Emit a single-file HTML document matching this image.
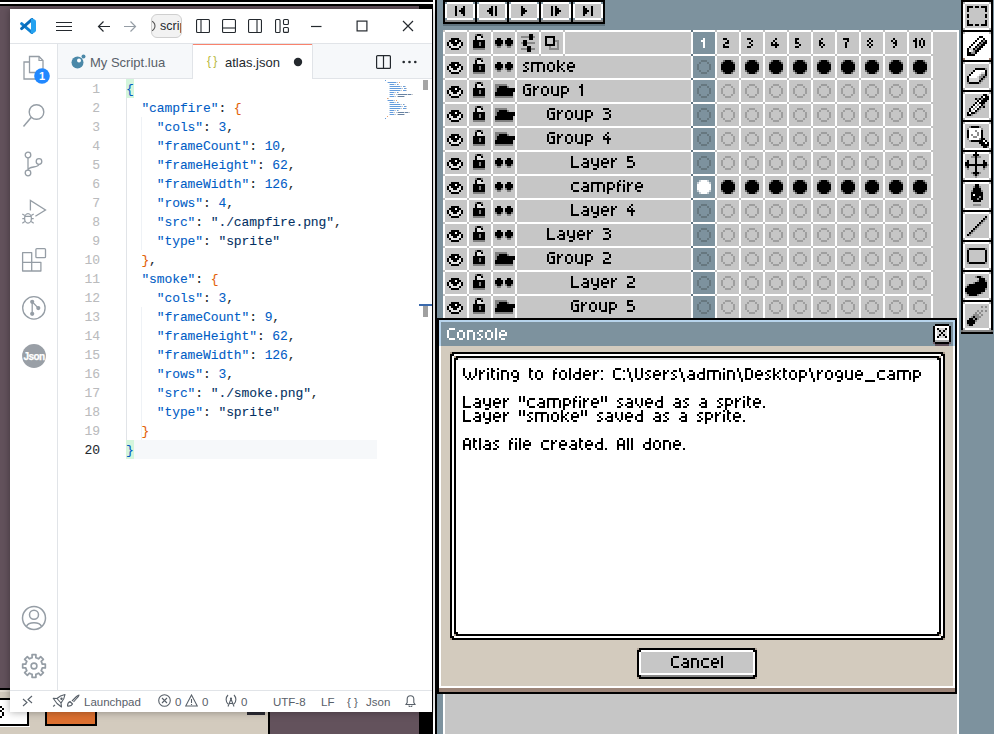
<!DOCTYPE html>
<html><head><meta charset="utf-8"><style>
html,body{margin:0;padding:0;}
body{width:994px;height:734px;overflow:hidden;position:relative;background:#63525c;font-family:'Liberation Sans',sans-serif;}
body>div{position:absolute;}
</style></head><body>
<div style="left:0px;top:0px;width:994px;height:734px;background:#63525c;"></div><div style="left:0px;top:0px;width:437px;height:2px;background:#000;"></div><div style="left:0px;top:2px;width:433px;height:2px;background:#fff;"></div><div style="left:0px;top:4px;width:433px;height:2px;background:#000;"></div><div style="left:419px;top:4px;width:14px;height:5px;background:#000;"></div><div style="left:0px;top:688px;width:270px;height:2px;background:#000;"></div><div style="left:0px;top:690px;width:270px;height:44px;background:#d3cbbe;"></div><div style="left:0px;top:690px;width:10px;height:2px;background:#e2dbd0;"></div><div style="left:268px;top:712px;width:2px;height:22px;background:#000;"></div><div style="left:419px;top:712px;width:14px;height:22px;background:#000;"></div><div style="left:-4px;top:698px;width:33px;height:28px;background:#fff;border:2px solid #000;box-sizing:border-box"></div><div style="left:0px;top:726px;width:30px;height:1px;background:#fff;"></div><svg style="position:absolute;left:0px;top:706px;shape-rendering:crispEdges" width="4" height="12" viewBox="0 0 4 12"><rect x="0" y="0" width="2" height="2" fill="#000"/><rect x="2" y="2" width="2" height="2" fill="#000"/><rect x="0" y="4" width="2" height="2" fill="#000"/><rect x="2" y="6" width="2" height="2" fill="#000"/><rect x="2" y="8" width="2" height="2" fill="#000"/><rect x="0" y="10" width="2" height="2" fill="#000"/></svg><div style="left:45px;top:700px;width:52px;height:26px;background:#dc7030;border:2px solid #000;box-sizing:border-box;border-top:none"></div><div style="left:247px;top:712px;width:18px;height:3px;background:#2a2a33;"></div><div style="left:433px;top:0px;width:2px;height:734px;background:#fff;"></div><div style="left:435px;top:0px;width:2px;height:734px;background:#000;"></div><div style="left:437px;top:0px;width:557px;height:734px;background:#7d929e;"></div><div style="left:443px;top:0px;width:34px;height:24px;background:#000;"></div><div style="left:445px;top:2px;width:30px;height:18px;background:#fff;"></div><div style="left:447px;top:4px;width:26px;height:14px;background:#c6c6c6;"></div><div style="left:445px;top:20px;width:30px;height:2px;background:#888;"></div><svg style="position:absolute;left:447px;top:4px;shape-rendering:crispEdges" width="26" height="14" viewBox="0 0 26 14"><rect x="8" y="2" width="2" height="2" fill="#000"/><rect x="16" y="2" width="2" height="2" fill="#000"/><rect x="8" y="4" width="2" height="2" fill="#000"/><rect x="14" y="4" width="4" height="2" fill="#000"/><rect x="8" y="6" width="2" height="2" fill="#000"/><rect x="12" y="6" width="6" height="2" fill="#000"/><rect x="8" y="8" width="2" height="2" fill="#000"/><rect x="14" y="8" width="4" height="2" fill="#000"/><rect x="8" y="10" width="2" height="2" fill="#000"/><rect x="16" y="10" width="2" height="2" fill="#000"/></svg><div style="left:445px;top:2px;width:2px;height:2px;background:#7d929e;"></div><div style="left:473px;top:2px;width:2px;height:2px;background:#7d929e;"></div><div style="left:445px;top:18px;width:2px;height:2px;background:#7d929e;"></div><div style="left:473px;top:18px;width:2px;height:2px;background:#7d929e;"></div><div style="left:475px;top:0px;width:34px;height:24px;background:#000;"></div><div style="left:477px;top:2px;width:30px;height:18px;background:#fff;"></div><div style="left:479px;top:4px;width:26px;height:14px;background:#c6c6c6;"></div><div style="left:477px;top:20px;width:30px;height:2px;background:#888;"></div><svg style="position:absolute;left:479px;top:4px;shape-rendering:crispEdges" width="26" height="14" viewBox="0 0 26 14"><rect x="12" y="2" width="2" height="2" fill="#000"/><rect x="16" y="2" width="2" height="2" fill="#000"/><rect x="10" y="4" width="4" height="2" fill="#000"/><rect x="16" y="4" width="2" height="2" fill="#000"/><rect x="8" y="6" width="6" height="2" fill="#000"/><rect x="16" y="6" width="2" height="2" fill="#000"/><rect x="10" y="8" width="4" height="2" fill="#000"/><rect x="16" y="8" width="2" height="2" fill="#000"/><rect x="12" y="10" width="2" height="2" fill="#000"/><rect x="16" y="10" width="2" height="2" fill="#000"/></svg><div style="left:477px;top:2px;width:2px;height:2px;background:#7d929e;"></div><div style="left:505px;top:2px;width:2px;height:2px;background:#7d929e;"></div><div style="left:477px;top:18px;width:2px;height:2px;background:#7d929e;"></div><div style="left:505px;top:18px;width:2px;height:2px;background:#7d929e;"></div><div style="left:507px;top:0px;width:34px;height:24px;background:#000;"></div><div style="left:509px;top:2px;width:30px;height:18px;background:#fff;"></div><div style="left:511px;top:4px;width:26px;height:14px;background:#c6c6c6;"></div><div style="left:509px;top:20px;width:30px;height:2px;background:#888;"></div><svg style="position:absolute;left:511px;top:4px;shape-rendering:crispEdges" width="26" height="14" viewBox="0 0 26 14"><rect x="10" y="2" width="2" height="2" fill="#000"/><rect x="10" y="4" width="4" height="2" fill="#000"/><rect x="10" y="6" width="6" height="2" fill="#000"/><rect x="10" y="8" width="4" height="2" fill="#000"/><rect x="10" y="10" width="2" height="2" fill="#000"/></svg><div style="left:509px;top:2px;width:2px;height:2px;background:#7d929e;"></div><div style="left:537px;top:2px;width:2px;height:2px;background:#7d929e;"></div><div style="left:509px;top:18px;width:2px;height:2px;background:#7d929e;"></div><div style="left:537px;top:18px;width:2px;height:2px;background:#7d929e;"></div><div style="left:539px;top:0px;width:34px;height:24px;background:#000;"></div><div style="left:541px;top:2px;width:30px;height:18px;background:#fff;"></div><div style="left:543px;top:4px;width:26px;height:14px;background:#c6c6c6;"></div><div style="left:541px;top:20px;width:30px;height:2px;background:#888;"></div><svg style="position:absolute;left:543px;top:4px;shape-rendering:crispEdges" width="26" height="14" viewBox="0 0 26 14"><rect x="8" y="2" width="2" height="2" fill="#000"/><rect x="12" y="2" width="2" height="2" fill="#000"/><rect x="8" y="4" width="2" height="2" fill="#000"/><rect x="12" y="4" width="4" height="2" fill="#000"/><rect x="8" y="6" width="2" height="2" fill="#000"/><rect x="12" y="6" width="6" height="2" fill="#000"/><rect x="8" y="8" width="2" height="2" fill="#000"/><rect x="12" y="8" width="4" height="2" fill="#000"/><rect x="8" y="10" width="2" height="2" fill="#000"/><rect x="12" y="10" width="2" height="2" fill="#000"/></svg><div style="left:541px;top:2px;width:2px;height:2px;background:#7d929e;"></div><div style="left:569px;top:2px;width:2px;height:2px;background:#7d929e;"></div><div style="left:541px;top:18px;width:2px;height:2px;background:#7d929e;"></div><div style="left:569px;top:18px;width:2px;height:2px;background:#7d929e;"></div><div style="left:571px;top:0px;width:34px;height:24px;background:#000;"></div><div style="left:573px;top:2px;width:30px;height:18px;background:#fff;"></div><div style="left:575px;top:4px;width:26px;height:14px;background:#c6c6c6;"></div><div style="left:573px;top:20px;width:30px;height:2px;background:#888;"></div><svg style="position:absolute;left:575px;top:4px;shape-rendering:crispEdges" width="26" height="14" viewBox="0 0 26 14"><rect x="8" y="2" width="2" height="2" fill="#000"/><rect x="16" y="2" width="2" height="2" fill="#000"/><rect x="8" y="4" width="4" height="2" fill="#000"/><rect x="16" y="4" width="2" height="2" fill="#000"/><rect x="8" y="6" width="6" height="2" fill="#000"/><rect x="16" y="6" width="2" height="2" fill="#000"/><rect x="8" y="8" width="4" height="2" fill="#000"/><rect x="16" y="8" width="2" height="2" fill="#000"/><rect x="8" y="10" width="2" height="2" fill="#000"/><rect x="16" y="10" width="2" height="2" fill="#000"/></svg><div style="left:573px;top:2px;width:2px;height:2px;background:#7d929e;"></div><div style="left:601px;top:2px;width:2px;height:2px;background:#7d929e;"></div><div style="left:573px;top:18px;width:2px;height:2px;background:#7d929e;"></div><div style="left:601px;top:18px;width:2px;height:2px;background:#7d929e;"></div><div style="left:443px;top:24px;width:162px;height:2px;background:#5f727d;"></div><div style="left:443px;top:30px;width:516px;height:288px;background:#fff;"></div><div style="left:445px;top:32px;width:22px;height:22px;background:#c6c6c6;"></div><div style="left:469px;top:32px;width:22px;height:22px;background:#c6c6c6;"></div><div style="left:493px;top:32px;width:22px;height:22px;background:#c6c6c6;"></div><div style="left:517px;top:32px;width:22px;height:22px;background:#c6c6c6;"></div><div style="left:541px;top:32px;width:22px;height:22px;background:#c6c6c6;"></div><div style="left:565px;top:32px;width:126px;height:22px;background:#c6c6c6;"></div><svg style="position:absolute;left:445px;top:32px;shape-rendering:crispEdges" width="18" height="18" viewBox="0 0 18 18"><rect x="6" y="6" width="8" height="2" fill="#000"/><rect x="4" y="8" width="6" height="2" fill="#000"/><rect x="10" y="8" width="2" height="2" fill="#fff"/><rect x="12" y="8" width="4" height="2" fill="#000"/><rect x="2" y="10" width="2" height="2" fill="#000"/><rect x="4" y="10" width="2" height="2" fill="#e4e4e4"/><rect x="6" y="10" width="8" height="2" fill="#000"/><rect x="14" y="10" width="2" height="2" fill="#e4e4e4"/><rect x="16" y="10" width="2" height="2" fill="#000"/><rect x="2" y="12" width="2" height="2" fill="#000"/><rect x="4" y="12" width="4" height="2" fill="#e4e4e4"/><rect x="8" y="12" width="4" height="2" fill="#000"/><rect x="12" y="12" width="4" height="2" fill="#e4e4e4"/><rect x="16" y="12" width="2" height="2" fill="#000"/><rect x="4" y="14" width="2" height="2" fill="#000"/><rect x="6" y="14" width="8" height="2" fill="#e4e4e4"/><rect x="14" y="14" width="2" height="2" fill="#000"/><rect x="6" y="16" width="8" height="2" fill="#000"/></svg><svg style="position:absolute;left:469px;top:32px;shape-rendering:crispEdges" width="16" height="18" viewBox="0 0 16 18"><rect x="6" y="2" width="2" height="2" fill="#808080"/><rect x="8" y="2" width="4" height="2" fill="#000"/><rect x="12" y="2" width="2" height="2" fill="#808080"/><rect x="6" y="4" width="2" height="2" fill="#000"/><rect x="8" y="4" width="4" height="2" fill="#e4e4e4"/><rect x="12" y="4" width="2" height="2" fill="#000"/><rect x="6" y="6" width="2" height="2" fill="#000"/><rect x="8" y="6" width="6" height="2" fill="#e4e4e4"/><rect x="4" y="8" width="12" height="2" fill="#000"/><rect x="4" y="10" width="6" height="2" fill="#000"/><rect x="10" y="10" width="2" height="2" fill="#888888"/><rect x="12" y="10" width="4" height="2" fill="#000"/><rect x="4" y="12" width="6" height="2" fill="#000"/><rect x="10" y="12" width="2" height="2" fill="#888888"/><rect x="12" y="12" width="4" height="2" fill="#000"/><rect x="4" y="14" width="12" height="2" fill="#000"/><rect x="4" y="16" width="12" height="2" fill="#808080"/></svg><svg style="position:absolute;left:493px;top:32px;shape-rendering:crispEdges" width="20" height="16" viewBox="0 0 20 16"><rect x="4" y="6" width="4" height="2" fill="#000"/><rect x="14" y="6" width="4" height="2" fill="#000"/><rect x="2" y="8" width="8" height="2" fill="#000"/><rect x="12" y="8" width="8" height="2" fill="#000"/><rect x="2" y="10" width="8" height="2" fill="#000"/><rect x="12" y="10" width="8" height="2" fill="#000"/><rect x="2" y="12" width="2" height="2" fill="#808080"/><rect x="4" y="12" width="4" height="2" fill="#000"/><rect x="8" y="12" width="2" height="2" fill="#808080"/><rect x="12" y="12" width="2" height="2" fill="#808080"/><rect x="14" y="12" width="4" height="2" fill="#000"/><rect x="18" y="12" width="2" height="2" fill="#808080"/><rect x="4" y="14" width="4" height="2" fill="#808080"/><rect x="14" y="14" width="4" height="2" fill="#808080"/></svg><svg style="position:absolute;left:517px;top:32px;shape-rendering:crispEdges" width="18" height="20" viewBox="0 0 18 20"><rect x="12" y="2" width="4" height="2" fill="#000"/><rect x="4" y="4" width="8" height="2" fill="#888888"/><rect x="12" y="4" width="4" height="2" fill="#000"/><rect x="16" y="4" width="2" height="2" fill="#888888"/><rect x="12" y="6" width="4" height="2" fill="#000"/><rect x="6" y="8" width="4" height="2" fill="#000"/><rect x="4" y="10" width="2" height="2" fill="#888888"/><rect x="6" y="10" width="4" height="2" fill="#000"/><rect x="10" y="10" width="8" height="2" fill="#888888"/><rect x="6" y="12" width="4" height="2" fill="#000"/><rect x="10" y="14" width="4" height="2" fill="#000"/><rect x="4" y="16" width="6" height="2" fill="#888888"/><rect x="10" y="16" width="4" height="2" fill="#000"/><rect x="14" y="16" width="4" height="2" fill="#888888"/><rect x="10" y="18" width="4" height="2" fill="#000"/></svg><svg style="position:absolute;left:541px;top:32px;shape-rendering:crispEdges" width="18" height="18" viewBox="0 0 18 18"><rect x="4" y="4" width="10" height="2" fill="#000"/><rect x="4" y="6" width="2" height="2" fill="#000"/><rect x="12" y="6" width="2" height="2" fill="#000"/><rect x="4" y="8" width="2" height="2" fill="#000"/><rect x="12" y="8" width="2" height="2" fill="#000"/><rect x="14" y="8" width="4" height="2" fill="#888888"/><rect x="4" y="10" width="2" height="2" fill="#000"/><rect x="12" y="10" width="2" height="2" fill="#000"/><rect x="16" y="10" width="2" height="2" fill="#888888"/><rect x="4" y="12" width="10" height="2" fill="#000"/><rect x="16" y="12" width="2" height="2" fill="#888888"/><rect x="8" y="14" width="2" height="2" fill="#888888"/><rect x="16" y="14" width="2" height="2" fill="#888888"/><rect x="8" y="16" width="10" height="2" fill="#888888"/></svg><div style="left:693px;top:32px;width:22px;height:22px;background:#7d929e;"></div><svg style="position:absolute;left:701px;top:38px;shape-rendering:crispEdges" width="6" height="10" viewBox="0 0 6 10"><g fill="#fff"><rect x="2" y="0" width="2" height="2"/><rect x="0" y="2" width="4" height="2"/><rect x="2" y="4" width="2" height="2"/><rect x="2" y="6" width="2" height="2"/><rect x="2" y="8" width="2" height="2"/></g></svg><div style="left:717px;top:32px;width:22px;height:22px;background:#c6c6c6;"></div><svg style="position:absolute;left:723px;top:38px;shape-rendering:crispEdges" width="8" height="10" viewBox="0 0 8 10"><g fill="#000"><rect x="0" y="0" width="4" height="2"/><rect x="4" y="2" width="2" height="2"/><rect x="2" y="4" width="4" height="2"/><rect x="0" y="6" width="2" height="2"/><rect x="0" y="8" width="6" height="2"/></g></svg><div style="left:741px;top:32px;width:22px;height:22px;background:#c6c6c6;"></div><svg style="position:absolute;left:747px;top:38px;shape-rendering:crispEdges" width="8" height="10" viewBox="0 0 8 10"><g fill="#000"><rect x="0" y="0" width="4" height="2"/><rect x="4" y="2" width="2" height="2"/><rect x="2" y="4" width="2" height="2"/><rect x="4" y="6" width="2" height="2"/><rect x="0" y="8" width="4" height="2"/></g></svg><div style="left:765px;top:32px;width:22px;height:22px;background:#c6c6c6;"></div><svg style="position:absolute;left:771px;top:38px;shape-rendering:crispEdges" width="10" height="10" viewBox="0 0 10 10"><g fill="#000"><rect x="4" y="0" width="2" height="2"/><rect x="2" y="2" width="2" height="2"/><rect x="0" y="4" width="2" height="2"/><rect x="4" y="4" width="2" height="2"/><rect x="0" y="6" width="8" height="2"/><rect x="4" y="8" width="2" height="2"/></g></svg><div style="left:789px;top:32px;width:22px;height:22px;background:#c6c6c6;"></div><svg style="position:absolute;left:795px;top:38px;shape-rendering:crispEdges" width="8" height="10" viewBox="0 0 8 10"><g fill="#000"><rect x="0" y="0" width="4" height="2"/><rect x="0" y="2" width="2" height="2"/><rect x="0" y="4" width="4" height="2"/><rect x="4" y="6" width="2" height="2"/><rect x="0" y="8" width="4" height="2"/></g></svg><div style="left:813px;top:32px;width:22px;height:22px;background:#c6c6c6;"></div><svg style="position:absolute;left:819px;top:38px;shape-rendering:crispEdges" width="8" height="10" viewBox="0 0 8 10"><g fill="#000"><rect x="2" y="0" width="2" height="2"/><rect x="0" y="2" width="2" height="2"/><rect x="0" y="4" width="4" height="2"/><rect x="0" y="6" width="2" height="2"/><rect x="4" y="6" width="2" height="2"/><rect x="2" y="8" width="2" height="2"/></g></svg><div style="left:837px;top:32px;width:22px;height:22px;background:#c6c6c6;"></div><svg style="position:absolute;left:843px;top:38px;shape-rendering:crispEdges" width="8" height="10" viewBox="0 0 8 10"><g fill="#000"><rect x="0" y="0" width="6" height="2"/><rect x="4" y="2" width="2" height="2"/><rect x="2" y="4" width="2" height="2"/><rect x="2" y="6" width="2" height="2"/><rect x="2" y="8" width="2" height="2"/></g></svg><div style="left:861px;top:32px;width:22px;height:22px;background:#c6c6c6;"></div><svg style="position:absolute;left:867px;top:38px;shape-rendering:crispEdges" width="8" height="10" viewBox="0 0 8 10"><g fill="#000"><rect x="2" y="0" width="2" height="2"/><rect x="0" y="2" width="2" height="2"/><rect x="4" y="2" width="2" height="2"/><rect x="2" y="4" width="2" height="2"/><rect x="0" y="6" width="2" height="2"/><rect x="4" y="6" width="2" height="2"/><rect x="2" y="8" width="2" height="2"/></g></svg><div style="left:885px;top:32px;width:22px;height:22px;background:#c6c6c6;"></div><svg style="position:absolute;left:891px;top:38px;shape-rendering:crispEdges" width="8" height="10" viewBox="0 0 8 10"><g fill="#000"><rect x="2" y="0" width="2" height="2"/><rect x="0" y="2" width="2" height="2"/><rect x="4" y="2" width="2" height="2"/><rect x="2" y="4" width="4" height="2"/><rect x="4" y="6" width="2" height="2"/><rect x="2" y="8" width="2" height="2"/></g></svg><div style="left:909px;top:32px;width:22px;height:22px;background:#c6c6c6;"></div><svg style="position:absolute;left:913px;top:38px;shape-rendering:crispEdges" width="14" height="10" viewBox="0 0 14 10"><g fill="#000"><rect x="2" y="0" width="2" height="2"/><rect x="8" y="0" width="2" height="2"/><rect x="0" y="2" width="4" height="2"/><rect x="6" y="2" width="2" height="2"/><rect x="10" y="2" width="2" height="2"/><rect x="2" y="4" width="2" height="2"/><rect x="6" y="4" width="2" height="2"/><rect x="10" y="4" width="2" height="2"/><rect x="2" y="6" width="2" height="2"/><rect x="6" y="6" width="2" height="2"/><rect x="10" y="6" width="2" height="2"/><rect x="2" y="8" width="2" height="2"/><rect x="8" y="8" width="2" height="2"/></g></svg><div style="left:445px;top:56px;width:22px;height:22px;background:#c6c6c6;"></div><div style="left:469px;top:56px;width:22px;height:22px;background:#c6c6c6;"></div><div style="left:493px;top:56px;width:22px;height:22px;background:#c6c6c6;"></div><div style="left:517px;top:56px;width:174px;height:22px;background:#c6c6c6;"></div><svg style="position:absolute;left:445px;top:56px;shape-rendering:crispEdges" width="18" height="18" viewBox="0 0 18 18"><rect x="6" y="6" width="8" height="2" fill="#000"/><rect x="4" y="8" width="6" height="2" fill="#000"/><rect x="10" y="8" width="2" height="2" fill="#fff"/><rect x="12" y="8" width="4" height="2" fill="#000"/><rect x="2" y="10" width="2" height="2" fill="#000"/><rect x="4" y="10" width="2" height="2" fill="#e4e4e4"/><rect x="6" y="10" width="8" height="2" fill="#000"/><rect x="14" y="10" width="2" height="2" fill="#e4e4e4"/><rect x="16" y="10" width="2" height="2" fill="#000"/><rect x="2" y="12" width="2" height="2" fill="#000"/><rect x="4" y="12" width="4" height="2" fill="#e4e4e4"/><rect x="8" y="12" width="4" height="2" fill="#000"/><rect x="12" y="12" width="4" height="2" fill="#e4e4e4"/><rect x="16" y="12" width="2" height="2" fill="#000"/><rect x="4" y="14" width="2" height="2" fill="#000"/><rect x="6" y="14" width="8" height="2" fill="#e4e4e4"/><rect x="14" y="14" width="2" height="2" fill="#000"/><rect x="6" y="16" width="8" height="2" fill="#000"/></svg><svg style="position:absolute;left:469px;top:56px;shape-rendering:crispEdges" width="16" height="18" viewBox="0 0 16 18"><rect x="6" y="2" width="2" height="2" fill="#808080"/><rect x="8" y="2" width="4" height="2" fill="#000"/><rect x="12" y="2" width="2" height="2" fill="#808080"/><rect x="6" y="4" width="2" height="2" fill="#000"/><rect x="8" y="4" width="4" height="2" fill="#e4e4e4"/><rect x="12" y="4" width="2" height="2" fill="#000"/><rect x="6" y="6" width="2" height="2" fill="#000"/><rect x="8" y="6" width="6" height="2" fill="#e4e4e4"/><rect x="4" y="8" width="12" height="2" fill="#000"/><rect x="4" y="10" width="6" height="2" fill="#000"/><rect x="10" y="10" width="2" height="2" fill="#888888"/><rect x="12" y="10" width="4" height="2" fill="#000"/><rect x="4" y="12" width="6" height="2" fill="#000"/><rect x="10" y="12" width="2" height="2" fill="#888888"/><rect x="12" y="12" width="4" height="2" fill="#000"/><rect x="4" y="14" width="12" height="2" fill="#000"/><rect x="4" y="16" width="12" height="2" fill="#808080"/></svg><svg style="position:absolute;left:493px;top:56px;shape-rendering:crispEdges" width="20" height="16" viewBox="0 0 20 16"><rect x="4" y="6" width="4" height="2" fill="#000"/><rect x="14" y="6" width="4" height="2" fill="#000"/><rect x="2" y="8" width="8" height="2" fill="#000"/><rect x="12" y="8" width="8" height="2" fill="#000"/><rect x="2" y="10" width="8" height="2" fill="#000"/><rect x="12" y="10" width="8" height="2" fill="#000"/><rect x="2" y="12" width="2" height="2" fill="#808080"/><rect x="4" y="12" width="4" height="2" fill="#000"/><rect x="8" y="12" width="2" height="2" fill="#808080"/><rect x="12" y="12" width="2" height="2" fill="#808080"/><rect x="14" y="12" width="4" height="2" fill="#000"/><rect x="18" y="12" width="2" height="2" fill="#808080"/><rect x="4" y="14" width="4" height="2" fill="#808080"/><rect x="14" y="14" width="4" height="2" fill="#808080"/></svg><svg style="position:absolute;left:523px;top:60px;shape-rendering:crispEdges" width="54" height="14" viewBox="0 0 54 14"><g fill="#000"><rect x="2" y="2" width="4" height="2"/><rect x="8" y="2" width="12" height="2"/><rect x="26" y="2" width="4" height="2"/><rect x="34" y="2" width="2" height="2"/><rect x="40" y="2" width="2" height="2"/><rect x="46" y="2" width="4" height="2"/><rect x="0" y="4" width="2" height="2"/><rect x="8" y="4" width="2" height="2"/><rect x="14" y="4" width="2" height="2"/><rect x="20" y="4" width="2" height="2"/><rect x="24" y="4" width="2" height="2"/><rect x="30" y="4" width="2" height="2"/><rect x="34" y="4" width="2" height="2"/><rect x="38" y="4" width="2" height="2"/><rect x="44" y="4" width="2" height="2"/><rect x="50" y="4" width="2" height="2"/><rect x="2" y="6" width="2" height="2"/><rect x="8" y="6" width="2" height="2"/><rect x="14" y="6" width="2" height="2"/><rect x="20" y="6" width="2" height="2"/><rect x="24" y="6" width="2" height="2"/><rect x="30" y="6" width="2" height="2"/><rect x="34" y="6" width="4" height="2"/><rect x="44" y="6" width="8" height="2"/><rect x="4" y="8" width="2" height="2"/><rect x="8" y="8" width="2" height="2"/><rect x="14" y="8" width="2" height="2"/><rect x="20" y="8" width="2" height="2"/><rect x="24" y="8" width="2" height="2"/><rect x="30" y="8" width="2" height="2"/><rect x="34" y="8" width="2" height="2"/><rect x="38" y="8" width="2" height="2"/><rect x="44" y="8" width="2" height="2"/><rect x="0" y="10" width="4" height="2"/><rect x="8" y="10" width="2" height="2"/><rect x="14" y="10" width="2" height="2"/><rect x="20" y="10" width="2" height="2"/><rect x="26" y="10" width="4" height="2"/><rect x="34" y="10" width="2" height="2"/><rect x="40" y="10" width="2" height="2"/><rect x="46" y="10" width="4" height="2"/><rect x="34" y="0" width="2" height="2"/></g></svg><div style="left:693px;top:56px;width:22px;height:22px;background:#7d929e;"></div><svg style="position:absolute;left:693px;top:56px;shape-rendering:crispEdges" width="18" height="18" viewBox="0 0 18 18"><rect x="8" y="4" width="6" height="2" fill="#66777f"/><rect x="6" y="6" width="2" height="2" fill="#66777f"/><rect x="14" y="6" width="2" height="2" fill="#66777f"/><rect x="4" y="8" width="2" height="2" fill="#66777f"/><rect x="16" y="8" width="2" height="2" fill="#66777f"/><rect x="4" y="10" width="2" height="2" fill="#66777f"/><rect x="16" y="10" width="2" height="2" fill="#66777f"/><rect x="4" y="12" width="2" height="2" fill="#66777f"/><rect x="16" y="12" width="2" height="2" fill="#66777f"/><rect x="6" y="14" width="2" height="2" fill="#66777f"/><rect x="14" y="14" width="2" height="2" fill="#66777f"/><rect x="8" y="16" width="6" height="2" fill="#66777f"/></svg><div style="left:717px;top:56px;width:22px;height:22px;background:#c6c6c6;"></div><svg style="position:absolute;left:717px;top:56px;shape-rendering:crispEdges" width="18" height="18" viewBox="0 0 18 18"><rect x="6" y="4" width="2" height="2" fill="#6e6e6e"/><rect x="8" y="4" width="6" height="2" fill="#000"/><rect x="14" y="4" width="2" height="2" fill="#6e6e6e"/><rect x="4" y="6" width="2" height="2" fill="#6e6e6e"/><rect x="6" y="6" width="10" height="2" fill="#000"/><rect x="16" y="6" width="2" height="2" fill="#6e6e6e"/><rect x="4" y="8" width="14" height="2" fill="#000"/><rect x="4" y="10" width="14" height="2" fill="#000"/><rect x="4" y="12" width="14" height="2" fill="#000"/><rect x="4" y="14" width="2" height="2" fill="#6e6e6e"/><rect x="6" y="14" width="10" height="2" fill="#000"/><rect x="16" y="14" width="2" height="2" fill="#6e6e6e"/><rect x="6" y="16" width="2" height="2" fill="#6e6e6e"/><rect x="8" y="16" width="6" height="2" fill="#000"/><rect x="14" y="16" width="2" height="2" fill="#6e6e6e"/></svg><div style="left:741px;top:56px;width:22px;height:22px;background:#c6c6c6;"></div><svg style="position:absolute;left:741px;top:56px;shape-rendering:crispEdges" width="18" height="18" viewBox="0 0 18 18"><rect x="6" y="4" width="2" height="2" fill="#6e6e6e"/><rect x="8" y="4" width="6" height="2" fill="#000"/><rect x="14" y="4" width="2" height="2" fill="#6e6e6e"/><rect x="4" y="6" width="2" height="2" fill="#6e6e6e"/><rect x="6" y="6" width="10" height="2" fill="#000"/><rect x="16" y="6" width="2" height="2" fill="#6e6e6e"/><rect x="4" y="8" width="14" height="2" fill="#000"/><rect x="4" y="10" width="14" height="2" fill="#000"/><rect x="4" y="12" width="14" height="2" fill="#000"/><rect x="4" y="14" width="2" height="2" fill="#6e6e6e"/><rect x="6" y="14" width="10" height="2" fill="#000"/><rect x="16" y="14" width="2" height="2" fill="#6e6e6e"/><rect x="6" y="16" width="2" height="2" fill="#6e6e6e"/><rect x="8" y="16" width="6" height="2" fill="#000"/><rect x="14" y="16" width="2" height="2" fill="#6e6e6e"/></svg><div style="left:765px;top:56px;width:22px;height:22px;background:#c6c6c6;"></div><svg style="position:absolute;left:765px;top:56px;shape-rendering:crispEdges" width="18" height="18" viewBox="0 0 18 18"><rect x="6" y="4" width="2" height="2" fill="#6e6e6e"/><rect x="8" y="4" width="6" height="2" fill="#000"/><rect x="14" y="4" width="2" height="2" fill="#6e6e6e"/><rect x="4" y="6" width="2" height="2" fill="#6e6e6e"/><rect x="6" y="6" width="10" height="2" fill="#000"/><rect x="16" y="6" width="2" height="2" fill="#6e6e6e"/><rect x="4" y="8" width="14" height="2" fill="#000"/><rect x="4" y="10" width="14" height="2" fill="#000"/><rect x="4" y="12" width="14" height="2" fill="#000"/><rect x="4" y="14" width="2" height="2" fill="#6e6e6e"/><rect x="6" y="14" width="10" height="2" fill="#000"/><rect x="16" y="14" width="2" height="2" fill="#6e6e6e"/><rect x="6" y="16" width="2" height="2" fill="#6e6e6e"/><rect x="8" y="16" width="6" height="2" fill="#000"/><rect x="14" y="16" width="2" height="2" fill="#6e6e6e"/></svg><div style="left:789px;top:56px;width:22px;height:22px;background:#c6c6c6;"></div><svg style="position:absolute;left:789px;top:56px;shape-rendering:crispEdges" width="18" height="18" viewBox="0 0 18 18"><rect x="6" y="4" width="2" height="2" fill="#6e6e6e"/><rect x="8" y="4" width="6" height="2" fill="#000"/><rect x="14" y="4" width="2" height="2" fill="#6e6e6e"/><rect x="4" y="6" width="2" height="2" fill="#6e6e6e"/><rect x="6" y="6" width="10" height="2" fill="#000"/><rect x="16" y="6" width="2" height="2" fill="#6e6e6e"/><rect x="4" y="8" width="14" height="2" fill="#000"/><rect x="4" y="10" width="14" height="2" fill="#000"/><rect x="4" y="12" width="14" height="2" fill="#000"/><rect x="4" y="14" width="2" height="2" fill="#6e6e6e"/><rect x="6" y="14" width="10" height="2" fill="#000"/><rect x="16" y="14" width="2" height="2" fill="#6e6e6e"/><rect x="6" y="16" width="2" height="2" fill="#6e6e6e"/><rect x="8" y="16" width="6" height="2" fill="#000"/><rect x="14" y="16" width="2" height="2" fill="#6e6e6e"/></svg><div style="left:813px;top:56px;width:22px;height:22px;background:#c6c6c6;"></div><svg style="position:absolute;left:813px;top:56px;shape-rendering:crispEdges" width="18" height="18" viewBox="0 0 18 18"><rect x="6" y="4" width="2" height="2" fill="#6e6e6e"/><rect x="8" y="4" width="6" height="2" fill="#000"/><rect x="14" y="4" width="2" height="2" fill="#6e6e6e"/><rect x="4" y="6" width="2" height="2" fill="#6e6e6e"/><rect x="6" y="6" width="10" height="2" fill="#000"/><rect x="16" y="6" width="2" height="2" fill="#6e6e6e"/><rect x="4" y="8" width="14" height="2" fill="#000"/><rect x="4" y="10" width="14" height="2" fill="#000"/><rect x="4" y="12" width="14" height="2" fill="#000"/><rect x="4" y="14" width="2" height="2" fill="#6e6e6e"/><rect x="6" y="14" width="10" height="2" fill="#000"/><rect x="16" y="14" width="2" height="2" fill="#6e6e6e"/><rect x="6" y="16" width="2" height="2" fill="#6e6e6e"/><rect x="8" y="16" width="6" height="2" fill="#000"/><rect x="14" y="16" width="2" height="2" fill="#6e6e6e"/></svg><div style="left:837px;top:56px;width:22px;height:22px;background:#c6c6c6;"></div><svg style="position:absolute;left:837px;top:56px;shape-rendering:crispEdges" width="18" height="18" viewBox="0 0 18 18"><rect x="6" y="4" width="2" height="2" fill="#6e6e6e"/><rect x="8" y="4" width="6" height="2" fill="#000"/><rect x="14" y="4" width="2" height="2" fill="#6e6e6e"/><rect x="4" y="6" width="2" height="2" fill="#6e6e6e"/><rect x="6" y="6" width="10" height="2" fill="#000"/><rect x="16" y="6" width="2" height="2" fill="#6e6e6e"/><rect x="4" y="8" width="14" height="2" fill="#000"/><rect x="4" y="10" width="14" height="2" fill="#000"/><rect x="4" y="12" width="14" height="2" fill="#000"/><rect x="4" y="14" width="2" height="2" fill="#6e6e6e"/><rect x="6" y="14" width="10" height="2" fill="#000"/><rect x="16" y="14" width="2" height="2" fill="#6e6e6e"/><rect x="6" y="16" width="2" height="2" fill="#6e6e6e"/><rect x="8" y="16" width="6" height="2" fill="#000"/><rect x="14" y="16" width="2" height="2" fill="#6e6e6e"/></svg><div style="left:861px;top:56px;width:22px;height:22px;background:#c6c6c6;"></div><svg style="position:absolute;left:861px;top:56px;shape-rendering:crispEdges" width="18" height="18" viewBox="0 0 18 18"><rect x="6" y="4" width="2" height="2" fill="#6e6e6e"/><rect x="8" y="4" width="6" height="2" fill="#000"/><rect x="14" y="4" width="2" height="2" fill="#6e6e6e"/><rect x="4" y="6" width="2" height="2" fill="#6e6e6e"/><rect x="6" y="6" width="10" height="2" fill="#000"/><rect x="16" y="6" width="2" height="2" fill="#6e6e6e"/><rect x="4" y="8" width="14" height="2" fill="#000"/><rect x="4" y="10" width="14" height="2" fill="#000"/><rect x="4" y="12" width="14" height="2" fill="#000"/><rect x="4" y="14" width="2" height="2" fill="#6e6e6e"/><rect x="6" y="14" width="10" height="2" fill="#000"/><rect x="16" y="14" width="2" height="2" fill="#6e6e6e"/><rect x="6" y="16" width="2" height="2" fill="#6e6e6e"/><rect x="8" y="16" width="6" height="2" fill="#000"/><rect x="14" y="16" width="2" height="2" fill="#6e6e6e"/></svg><div style="left:885px;top:56px;width:22px;height:22px;background:#c6c6c6;"></div><svg style="position:absolute;left:885px;top:56px;shape-rendering:crispEdges" width="18" height="18" viewBox="0 0 18 18"><rect x="6" y="4" width="2" height="2" fill="#6e6e6e"/><rect x="8" y="4" width="6" height="2" fill="#000"/><rect x="14" y="4" width="2" height="2" fill="#6e6e6e"/><rect x="4" y="6" width="2" height="2" fill="#6e6e6e"/><rect x="6" y="6" width="10" height="2" fill="#000"/><rect x="16" y="6" width="2" height="2" fill="#6e6e6e"/><rect x="4" y="8" width="14" height="2" fill="#000"/><rect x="4" y="10" width="14" height="2" fill="#000"/><rect x="4" y="12" width="14" height="2" fill="#000"/><rect x="4" y="14" width="2" height="2" fill="#6e6e6e"/><rect x="6" y="14" width="10" height="2" fill="#000"/><rect x="16" y="14" width="2" height="2" fill="#6e6e6e"/><rect x="6" y="16" width="2" height="2" fill="#6e6e6e"/><rect x="8" y="16" width="6" height="2" fill="#000"/><rect x="14" y="16" width="2" height="2" fill="#6e6e6e"/></svg><div style="left:909px;top:56px;width:22px;height:22px;background:#c6c6c6;"></div><svg style="position:absolute;left:909px;top:56px;shape-rendering:crispEdges" width="18" height="18" viewBox="0 0 18 18"><rect x="6" y="4" width="2" height="2" fill="#6e6e6e"/><rect x="8" y="4" width="6" height="2" fill="#000"/><rect x="14" y="4" width="2" height="2" fill="#6e6e6e"/><rect x="4" y="6" width="2" height="2" fill="#6e6e6e"/><rect x="6" y="6" width="10" height="2" fill="#000"/><rect x="16" y="6" width="2" height="2" fill="#6e6e6e"/><rect x="4" y="8" width="14" height="2" fill="#000"/><rect x="4" y="10" width="14" height="2" fill="#000"/><rect x="4" y="12" width="14" height="2" fill="#000"/><rect x="4" y="14" width="2" height="2" fill="#6e6e6e"/><rect x="6" y="14" width="10" height="2" fill="#000"/><rect x="16" y="14" width="2" height="2" fill="#6e6e6e"/><rect x="6" y="16" width="2" height="2" fill="#6e6e6e"/><rect x="8" y="16" width="6" height="2" fill="#000"/><rect x="14" y="16" width="2" height="2" fill="#6e6e6e"/></svg><div style="left:445px;top:80px;width:22px;height:22px;background:#c6c6c6;"></div><div style="left:469px;top:80px;width:22px;height:22px;background:#c6c6c6;"></div><div style="left:493px;top:80px;width:22px;height:22px;background:#c6c6c6;"></div><div style="left:517px;top:80px;width:174px;height:22px;background:#c6c6c6;"></div><svg style="position:absolute;left:445px;top:80px;shape-rendering:crispEdges" width="18" height="18" viewBox="0 0 18 18"><rect x="6" y="6" width="8" height="2" fill="#000"/><rect x="4" y="8" width="6" height="2" fill="#000"/><rect x="10" y="8" width="2" height="2" fill="#fff"/><rect x="12" y="8" width="4" height="2" fill="#000"/><rect x="2" y="10" width="2" height="2" fill="#000"/><rect x="4" y="10" width="2" height="2" fill="#e4e4e4"/><rect x="6" y="10" width="8" height="2" fill="#000"/><rect x="14" y="10" width="2" height="2" fill="#e4e4e4"/><rect x="16" y="10" width="2" height="2" fill="#000"/><rect x="2" y="12" width="2" height="2" fill="#000"/><rect x="4" y="12" width="4" height="2" fill="#e4e4e4"/><rect x="8" y="12" width="4" height="2" fill="#000"/><rect x="12" y="12" width="4" height="2" fill="#e4e4e4"/><rect x="16" y="12" width="2" height="2" fill="#000"/><rect x="4" y="14" width="2" height="2" fill="#000"/><rect x="6" y="14" width="8" height="2" fill="#e4e4e4"/><rect x="14" y="14" width="2" height="2" fill="#000"/><rect x="6" y="16" width="8" height="2" fill="#000"/></svg><svg style="position:absolute;left:469px;top:80px;shape-rendering:crispEdges" width="16" height="18" viewBox="0 0 16 18"><rect x="6" y="2" width="2" height="2" fill="#808080"/><rect x="8" y="2" width="4" height="2" fill="#000"/><rect x="12" y="2" width="2" height="2" fill="#808080"/><rect x="6" y="4" width="2" height="2" fill="#000"/><rect x="8" y="4" width="4" height="2" fill="#e4e4e4"/><rect x="12" y="4" width="2" height="2" fill="#000"/><rect x="6" y="6" width="2" height="2" fill="#000"/><rect x="8" y="6" width="6" height="2" fill="#e4e4e4"/><rect x="4" y="8" width="12" height="2" fill="#000"/><rect x="4" y="10" width="6" height="2" fill="#000"/><rect x="10" y="10" width="2" height="2" fill="#888888"/><rect x="12" y="10" width="4" height="2" fill="#000"/><rect x="4" y="12" width="6" height="2" fill="#000"/><rect x="10" y="12" width="2" height="2" fill="#888888"/><rect x="12" y="12" width="4" height="2" fill="#000"/><rect x="4" y="14" width="12" height="2" fill="#000"/><rect x="4" y="16" width="12" height="2" fill="#808080"/></svg><svg style="position:absolute;left:493px;top:80px;shape-rendering:crispEdges" width="22" height="18" viewBox="0 0 22 18"><rect x="2" y="4" width="12" height="2" fill="#808080"/><rect x="2" y="6" width="4" height="2" fill="#808080"/><rect x="6" y="6" width="8" height="2" fill="#000"/><rect x="14" y="6" width="2" height="2" fill="#808080"/><rect x="2" y="8" width="2" height="2" fill="#808080"/><rect x="4" y="8" width="18" height="2" fill="#000"/><rect x="2" y="10" width="2" height="2" fill="#808080"/><rect x="4" y="10" width="18" height="2" fill="#000"/><rect x="2" y="12" width="18" height="2" fill="#000"/><rect x="2" y="14" width="18" height="2" fill="#000"/><rect x="2" y="16" width="18" height="2" fill="#808080"/></svg><svg style="position:absolute;left:523px;top:84px;shape-rendering:crispEdges" width="62" height="14" viewBox="0 0 62 14"><g fill="#000"><rect x="2" y="0" width="6" height="2"/><rect x="58" y="0" width="2" height="2"/><rect x="0" y="2" width="2" height="2"/><rect x="10" y="2" width="2" height="2"/><rect x="14" y="2" width="2" height="2"/><rect x="20" y="2" width="4" height="2"/><rect x="28" y="2" width="2" height="2"/><rect x="34" y="2" width="2" height="2"/><rect x="38" y="2" width="6" height="2"/><rect x="56" y="2" width="4" height="2"/><rect x="0" y="4" width="2" height="2"/><rect x="4" y="4" width="4" height="2"/><rect x="10" y="4" width="4" height="2"/><rect x="18" y="4" width="2" height="2"/><rect x="24" y="4" width="2" height="2"/><rect x="28" y="4" width="2" height="2"/><rect x="34" y="4" width="2" height="2"/><rect x="38" y="4" width="2" height="2"/><rect x="44" y="4" width="2" height="2"/><rect x="58" y="4" width="2" height="2"/><rect x="0" y="6" width="2" height="2"/><rect x="6" y="6" width="2" height="2"/><rect x="10" y="6" width="2" height="2"/><rect x="18" y="6" width="2" height="2"/><rect x="24" y="6" width="2" height="2"/><rect x="28" y="6" width="2" height="2"/><rect x="34" y="6" width="2" height="2"/><rect x="38" y="6" width="2" height="2"/><rect x="44" y="6" width="2" height="2"/><rect x="58" y="6" width="2" height="2"/><rect x="0" y="8" width="2" height="2"/><rect x="6" y="8" width="2" height="2"/><rect x="10" y="8" width="2" height="2"/><rect x="18" y="8" width="2" height="2"/><rect x="24" y="8" width="2" height="2"/><rect x="28" y="8" width="2" height="2"/><rect x="34" y="8" width="2" height="2"/><rect x="38" y="8" width="6" height="2"/><rect x="58" y="8" width="2" height="2"/><rect x="2" y="10" width="6" height="2"/><rect x="10" y="10" width="2" height="2"/><rect x="20" y="10" width="4" height="2"/><rect x="30" y="10" width="6" height="2"/><rect x="38" y="10" width="2" height="2"/><rect x="58" y="10" width="2" height="2"/><rect x="38" y="12" width="2" height="2"/></g></svg><div style="left:693px;top:80px;width:22px;height:22px;background:#7d929e;"></div><svg style="position:absolute;left:693px;top:80px;shape-rendering:crispEdges" width="18" height="18" viewBox="0 0 18 18"><rect x="8" y="4" width="6" height="2" fill="#66777f"/><rect x="6" y="6" width="2" height="2" fill="#66777f"/><rect x="14" y="6" width="2" height="2" fill="#66777f"/><rect x="4" y="8" width="2" height="2" fill="#66777f"/><rect x="16" y="8" width="2" height="2" fill="#66777f"/><rect x="4" y="10" width="2" height="2" fill="#66777f"/><rect x="16" y="10" width="2" height="2" fill="#66777f"/><rect x="4" y="12" width="2" height="2" fill="#66777f"/><rect x="16" y="12" width="2" height="2" fill="#66777f"/><rect x="6" y="14" width="2" height="2" fill="#66777f"/><rect x="14" y="14" width="2" height="2" fill="#66777f"/><rect x="8" y="16" width="6" height="2" fill="#66777f"/></svg><div style="left:717px;top:80px;width:22px;height:22px;background:#c6c6c6;"></div><svg style="position:absolute;left:717px;top:80px;shape-rendering:crispEdges" width="18" height="18" viewBox="0 0 18 18"><rect x="8" y="4" width="6" height="2" fill="#9e9e9e"/><rect x="6" y="6" width="2" height="2" fill="#9e9e9e"/><rect x="14" y="6" width="2" height="2" fill="#9e9e9e"/><rect x="4" y="8" width="2" height="2" fill="#9e9e9e"/><rect x="16" y="8" width="2" height="2" fill="#9e9e9e"/><rect x="4" y="10" width="2" height="2" fill="#9e9e9e"/><rect x="16" y="10" width="2" height="2" fill="#9e9e9e"/><rect x="4" y="12" width="2" height="2" fill="#9e9e9e"/><rect x="16" y="12" width="2" height="2" fill="#9e9e9e"/><rect x="6" y="14" width="2" height="2" fill="#9e9e9e"/><rect x="14" y="14" width="2" height="2" fill="#9e9e9e"/><rect x="8" y="16" width="6" height="2" fill="#9e9e9e"/></svg><div style="left:741px;top:80px;width:22px;height:22px;background:#c6c6c6;"></div><svg style="position:absolute;left:741px;top:80px;shape-rendering:crispEdges" width="18" height="18" viewBox="0 0 18 18"><rect x="8" y="4" width="6" height="2" fill="#9e9e9e"/><rect x="6" y="6" width="2" height="2" fill="#9e9e9e"/><rect x="14" y="6" width="2" height="2" fill="#9e9e9e"/><rect x="4" y="8" width="2" height="2" fill="#9e9e9e"/><rect x="16" y="8" width="2" height="2" fill="#9e9e9e"/><rect x="4" y="10" width="2" height="2" fill="#9e9e9e"/><rect x="16" y="10" width="2" height="2" fill="#9e9e9e"/><rect x="4" y="12" width="2" height="2" fill="#9e9e9e"/><rect x="16" y="12" width="2" height="2" fill="#9e9e9e"/><rect x="6" y="14" width="2" height="2" fill="#9e9e9e"/><rect x="14" y="14" width="2" height="2" fill="#9e9e9e"/><rect x="8" y="16" width="6" height="2" fill="#9e9e9e"/></svg><div style="left:765px;top:80px;width:22px;height:22px;background:#c6c6c6;"></div><svg style="position:absolute;left:765px;top:80px;shape-rendering:crispEdges" width="18" height="18" viewBox="0 0 18 18"><rect x="8" y="4" width="6" height="2" fill="#9e9e9e"/><rect x="6" y="6" width="2" height="2" fill="#9e9e9e"/><rect x="14" y="6" width="2" height="2" fill="#9e9e9e"/><rect x="4" y="8" width="2" height="2" fill="#9e9e9e"/><rect x="16" y="8" width="2" height="2" fill="#9e9e9e"/><rect x="4" y="10" width="2" height="2" fill="#9e9e9e"/><rect x="16" y="10" width="2" height="2" fill="#9e9e9e"/><rect x="4" y="12" width="2" height="2" fill="#9e9e9e"/><rect x="16" y="12" width="2" height="2" fill="#9e9e9e"/><rect x="6" y="14" width="2" height="2" fill="#9e9e9e"/><rect x="14" y="14" width="2" height="2" fill="#9e9e9e"/><rect x="8" y="16" width="6" height="2" fill="#9e9e9e"/></svg><div style="left:789px;top:80px;width:22px;height:22px;background:#c6c6c6;"></div><svg style="position:absolute;left:789px;top:80px;shape-rendering:crispEdges" width="18" height="18" viewBox="0 0 18 18"><rect x="8" y="4" width="6" height="2" fill="#9e9e9e"/><rect x="6" y="6" width="2" height="2" fill="#9e9e9e"/><rect x="14" y="6" width="2" height="2" fill="#9e9e9e"/><rect x="4" y="8" width="2" height="2" fill="#9e9e9e"/><rect x="16" y="8" width="2" height="2" fill="#9e9e9e"/><rect x="4" y="10" width="2" height="2" fill="#9e9e9e"/><rect x="16" y="10" width="2" height="2" fill="#9e9e9e"/><rect x="4" y="12" width="2" height="2" fill="#9e9e9e"/><rect x="16" y="12" width="2" height="2" fill="#9e9e9e"/><rect x="6" y="14" width="2" height="2" fill="#9e9e9e"/><rect x="14" y="14" width="2" height="2" fill="#9e9e9e"/><rect x="8" y="16" width="6" height="2" fill="#9e9e9e"/></svg><div style="left:813px;top:80px;width:22px;height:22px;background:#c6c6c6;"></div><svg style="position:absolute;left:813px;top:80px;shape-rendering:crispEdges" width="18" height="18" viewBox="0 0 18 18"><rect x="8" y="4" width="6" height="2" fill="#9e9e9e"/><rect x="6" y="6" width="2" height="2" fill="#9e9e9e"/><rect x="14" y="6" width="2" height="2" fill="#9e9e9e"/><rect x="4" y="8" width="2" height="2" fill="#9e9e9e"/><rect x="16" y="8" width="2" height="2" fill="#9e9e9e"/><rect x="4" y="10" width="2" height="2" fill="#9e9e9e"/><rect x="16" y="10" width="2" height="2" fill="#9e9e9e"/><rect x="4" y="12" width="2" height="2" fill="#9e9e9e"/><rect x="16" y="12" width="2" height="2" fill="#9e9e9e"/><rect x="6" y="14" width="2" height="2" fill="#9e9e9e"/><rect x="14" y="14" width="2" height="2" fill="#9e9e9e"/><rect x="8" y="16" width="6" height="2" fill="#9e9e9e"/></svg><div style="left:837px;top:80px;width:22px;height:22px;background:#c6c6c6;"></div><svg style="position:absolute;left:837px;top:80px;shape-rendering:crispEdges" width="18" height="18" viewBox="0 0 18 18"><rect x="8" y="4" width="6" height="2" fill="#9e9e9e"/><rect x="6" y="6" width="2" height="2" fill="#9e9e9e"/><rect x="14" y="6" width="2" height="2" fill="#9e9e9e"/><rect x="4" y="8" width="2" height="2" fill="#9e9e9e"/><rect x="16" y="8" width="2" height="2" fill="#9e9e9e"/><rect x="4" y="10" width="2" height="2" fill="#9e9e9e"/><rect x="16" y="10" width="2" height="2" fill="#9e9e9e"/><rect x="4" y="12" width="2" height="2" fill="#9e9e9e"/><rect x="16" y="12" width="2" height="2" fill="#9e9e9e"/><rect x="6" y="14" width="2" height="2" fill="#9e9e9e"/><rect x="14" y="14" width="2" height="2" fill="#9e9e9e"/><rect x="8" y="16" width="6" height="2" fill="#9e9e9e"/></svg><div style="left:861px;top:80px;width:22px;height:22px;background:#c6c6c6;"></div><svg style="position:absolute;left:861px;top:80px;shape-rendering:crispEdges" width="18" height="18" viewBox="0 0 18 18"><rect x="8" y="4" width="6" height="2" fill="#9e9e9e"/><rect x="6" y="6" width="2" height="2" fill="#9e9e9e"/><rect x="14" y="6" width="2" height="2" fill="#9e9e9e"/><rect x="4" y="8" width="2" height="2" fill="#9e9e9e"/><rect x="16" y="8" width="2" height="2" fill="#9e9e9e"/><rect x="4" y="10" width="2" height="2" fill="#9e9e9e"/><rect x="16" y="10" width="2" height="2" fill="#9e9e9e"/><rect x="4" y="12" width="2" height="2" fill="#9e9e9e"/><rect x="16" y="12" width="2" height="2" fill="#9e9e9e"/><rect x="6" y="14" width="2" height="2" fill="#9e9e9e"/><rect x="14" y="14" width="2" height="2" fill="#9e9e9e"/><rect x="8" y="16" width="6" height="2" fill="#9e9e9e"/></svg><div style="left:885px;top:80px;width:22px;height:22px;background:#c6c6c6;"></div><svg style="position:absolute;left:885px;top:80px;shape-rendering:crispEdges" width="18" height="18" viewBox="0 0 18 18"><rect x="8" y="4" width="6" height="2" fill="#9e9e9e"/><rect x="6" y="6" width="2" height="2" fill="#9e9e9e"/><rect x="14" y="6" width="2" height="2" fill="#9e9e9e"/><rect x="4" y="8" width="2" height="2" fill="#9e9e9e"/><rect x="16" y="8" width="2" height="2" fill="#9e9e9e"/><rect x="4" y="10" width="2" height="2" fill="#9e9e9e"/><rect x="16" y="10" width="2" height="2" fill="#9e9e9e"/><rect x="4" y="12" width="2" height="2" fill="#9e9e9e"/><rect x="16" y="12" width="2" height="2" fill="#9e9e9e"/><rect x="6" y="14" width="2" height="2" fill="#9e9e9e"/><rect x="14" y="14" width="2" height="2" fill="#9e9e9e"/><rect x="8" y="16" width="6" height="2" fill="#9e9e9e"/></svg><div style="left:909px;top:80px;width:22px;height:22px;background:#c6c6c6;"></div><svg style="position:absolute;left:909px;top:80px;shape-rendering:crispEdges" width="18" height="18" viewBox="0 0 18 18"><rect x="8" y="4" width="6" height="2" fill="#9e9e9e"/><rect x="6" y="6" width="2" height="2" fill="#9e9e9e"/><rect x="14" y="6" width="2" height="2" fill="#9e9e9e"/><rect x="4" y="8" width="2" height="2" fill="#9e9e9e"/><rect x="16" y="8" width="2" height="2" fill="#9e9e9e"/><rect x="4" y="10" width="2" height="2" fill="#9e9e9e"/><rect x="16" y="10" width="2" height="2" fill="#9e9e9e"/><rect x="4" y="12" width="2" height="2" fill="#9e9e9e"/><rect x="16" y="12" width="2" height="2" fill="#9e9e9e"/><rect x="6" y="14" width="2" height="2" fill="#9e9e9e"/><rect x="14" y="14" width="2" height="2" fill="#9e9e9e"/><rect x="8" y="16" width="6" height="2" fill="#9e9e9e"/></svg><div style="left:445px;top:104px;width:22px;height:22px;background:#c6c6c6;"></div><div style="left:469px;top:104px;width:22px;height:22px;background:#c6c6c6;"></div><div style="left:493px;top:104px;width:22px;height:22px;background:#c6c6c6;"></div><div style="left:517px;top:104px;width:174px;height:22px;background:#c6c6c6;"></div><svg style="position:absolute;left:445px;top:104px;shape-rendering:crispEdges" width="18" height="18" viewBox="0 0 18 18"><rect x="6" y="6" width="8" height="2" fill="#000"/><rect x="4" y="8" width="6" height="2" fill="#000"/><rect x="10" y="8" width="2" height="2" fill="#fff"/><rect x="12" y="8" width="4" height="2" fill="#000"/><rect x="2" y="10" width="2" height="2" fill="#000"/><rect x="4" y="10" width="2" height="2" fill="#e4e4e4"/><rect x="6" y="10" width="8" height="2" fill="#000"/><rect x="14" y="10" width="2" height="2" fill="#e4e4e4"/><rect x="16" y="10" width="2" height="2" fill="#000"/><rect x="2" y="12" width="2" height="2" fill="#000"/><rect x="4" y="12" width="4" height="2" fill="#e4e4e4"/><rect x="8" y="12" width="4" height="2" fill="#000"/><rect x="12" y="12" width="4" height="2" fill="#e4e4e4"/><rect x="16" y="12" width="2" height="2" fill="#000"/><rect x="4" y="14" width="2" height="2" fill="#000"/><rect x="6" y="14" width="8" height="2" fill="#e4e4e4"/><rect x="14" y="14" width="2" height="2" fill="#000"/><rect x="6" y="16" width="8" height="2" fill="#000"/></svg><svg style="position:absolute;left:469px;top:104px;shape-rendering:crispEdges" width="16" height="18" viewBox="0 0 16 18"><rect x="6" y="2" width="2" height="2" fill="#808080"/><rect x="8" y="2" width="4" height="2" fill="#000"/><rect x="12" y="2" width="2" height="2" fill="#808080"/><rect x="6" y="4" width="2" height="2" fill="#000"/><rect x="8" y="4" width="4" height="2" fill="#e4e4e4"/><rect x="12" y="4" width="2" height="2" fill="#000"/><rect x="6" y="6" width="2" height="2" fill="#000"/><rect x="8" y="6" width="6" height="2" fill="#e4e4e4"/><rect x="4" y="8" width="12" height="2" fill="#000"/><rect x="4" y="10" width="6" height="2" fill="#000"/><rect x="10" y="10" width="2" height="2" fill="#888888"/><rect x="12" y="10" width="4" height="2" fill="#000"/><rect x="4" y="12" width="6" height="2" fill="#000"/><rect x="10" y="12" width="2" height="2" fill="#888888"/><rect x="12" y="12" width="4" height="2" fill="#000"/><rect x="4" y="14" width="12" height="2" fill="#000"/><rect x="4" y="16" width="12" height="2" fill="#808080"/></svg><svg style="position:absolute;left:493px;top:104px;shape-rendering:crispEdges" width="22" height="18" viewBox="0 0 22 18"><rect x="2" y="4" width="12" height="2" fill="#808080"/><rect x="2" y="6" width="4" height="2" fill="#808080"/><rect x="6" y="6" width="8" height="2" fill="#000"/><rect x="14" y="6" width="2" height="2" fill="#808080"/><rect x="2" y="8" width="2" height="2" fill="#808080"/><rect x="4" y="8" width="18" height="2" fill="#000"/><rect x="2" y="10" width="2" height="2" fill="#808080"/><rect x="4" y="10" width="18" height="2" fill="#000"/><rect x="2" y="12" width="18" height="2" fill="#000"/><rect x="2" y="14" width="18" height="2" fill="#000"/><rect x="2" y="16" width="18" height="2" fill="#808080"/></svg><svg style="position:absolute;left:547px;top:108px;shape-rendering:crispEdges" width="66" height="14" viewBox="0 0 66 14"><g fill="#000"><rect x="2" y="0" width="6" height="2"/><rect x="56" y="0" width="6" height="2"/><rect x="0" y="2" width="2" height="2"/><rect x="10" y="2" width="2" height="2"/><rect x="14" y="2" width="2" height="2"/><rect x="20" y="2" width="4" height="2"/><rect x="28" y="2" width="2" height="2"/><rect x="34" y="2" width="2" height="2"/><rect x="38" y="2" width="6" height="2"/><rect x="62" y="2" width="2" height="2"/><rect x="0" y="4" width="2" height="2"/><rect x="4" y="4" width="4" height="2"/><rect x="10" y="4" width="4" height="2"/><rect x="18" y="4" width="2" height="2"/><rect x="24" y="4" width="2" height="2"/><rect x="28" y="4" width="2" height="2"/><rect x="34" y="4" width="2" height="2"/><rect x="38" y="4" width="2" height="2"/><rect x="44" y="4" width="2" height="2"/><rect x="58" y="4" width="4" height="2"/><rect x="0" y="6" width="2" height="2"/><rect x="6" y="6" width="2" height="2"/><rect x="10" y="6" width="2" height="2"/><rect x="18" y="6" width="2" height="2"/><rect x="24" y="6" width="2" height="2"/><rect x="28" y="6" width="2" height="2"/><rect x="34" y="6" width="2" height="2"/><rect x="38" y="6" width="2" height="2"/><rect x="44" y="6" width="2" height="2"/><rect x="62" y="6" width="2" height="2"/><rect x="0" y="8" width="2" height="2"/><rect x="6" y="8" width="2" height="2"/><rect x="10" y="8" width="2" height="2"/><rect x="18" y="8" width="2" height="2"/><rect x="24" y="8" width="2" height="2"/><rect x="28" y="8" width="2" height="2"/><rect x="34" y="8" width="2" height="2"/><rect x="38" y="8" width="6" height="2"/><rect x="62" y="8" width="2" height="2"/><rect x="2" y="10" width="6" height="2"/><rect x="10" y="10" width="2" height="2"/><rect x="20" y="10" width="4" height="2"/><rect x="30" y="10" width="6" height="2"/><rect x="38" y="10" width="2" height="2"/><rect x="56" y="10" width="6" height="2"/><rect x="38" y="12" width="2" height="2"/></g></svg><div style="left:693px;top:104px;width:22px;height:22px;background:#7d929e;"></div><svg style="position:absolute;left:693px;top:104px;shape-rendering:crispEdges" width="18" height="18" viewBox="0 0 18 18"><rect x="8" y="4" width="6" height="2" fill="#66777f"/><rect x="6" y="6" width="2" height="2" fill="#66777f"/><rect x="14" y="6" width="2" height="2" fill="#66777f"/><rect x="4" y="8" width="2" height="2" fill="#66777f"/><rect x="16" y="8" width="2" height="2" fill="#66777f"/><rect x="4" y="10" width="2" height="2" fill="#66777f"/><rect x="16" y="10" width="2" height="2" fill="#66777f"/><rect x="4" y="12" width="2" height="2" fill="#66777f"/><rect x="16" y="12" width="2" height="2" fill="#66777f"/><rect x="6" y="14" width="2" height="2" fill="#66777f"/><rect x="14" y="14" width="2" height="2" fill="#66777f"/><rect x="8" y="16" width="6" height="2" fill="#66777f"/></svg><div style="left:717px;top:104px;width:22px;height:22px;background:#c6c6c6;"></div><svg style="position:absolute;left:717px;top:104px;shape-rendering:crispEdges" width="18" height="18" viewBox="0 0 18 18"><rect x="8" y="4" width="6" height="2" fill="#9e9e9e"/><rect x="6" y="6" width="2" height="2" fill="#9e9e9e"/><rect x="14" y="6" width="2" height="2" fill="#9e9e9e"/><rect x="4" y="8" width="2" height="2" fill="#9e9e9e"/><rect x="16" y="8" width="2" height="2" fill="#9e9e9e"/><rect x="4" y="10" width="2" height="2" fill="#9e9e9e"/><rect x="16" y="10" width="2" height="2" fill="#9e9e9e"/><rect x="4" y="12" width="2" height="2" fill="#9e9e9e"/><rect x="16" y="12" width="2" height="2" fill="#9e9e9e"/><rect x="6" y="14" width="2" height="2" fill="#9e9e9e"/><rect x="14" y="14" width="2" height="2" fill="#9e9e9e"/><rect x="8" y="16" width="6" height="2" fill="#9e9e9e"/></svg><div style="left:741px;top:104px;width:22px;height:22px;background:#c6c6c6;"></div><svg style="position:absolute;left:741px;top:104px;shape-rendering:crispEdges" width="18" height="18" viewBox="0 0 18 18"><rect x="8" y="4" width="6" height="2" fill="#9e9e9e"/><rect x="6" y="6" width="2" height="2" fill="#9e9e9e"/><rect x="14" y="6" width="2" height="2" fill="#9e9e9e"/><rect x="4" y="8" width="2" height="2" fill="#9e9e9e"/><rect x="16" y="8" width="2" height="2" fill="#9e9e9e"/><rect x="4" y="10" width="2" height="2" fill="#9e9e9e"/><rect x="16" y="10" width="2" height="2" fill="#9e9e9e"/><rect x="4" y="12" width="2" height="2" fill="#9e9e9e"/><rect x="16" y="12" width="2" height="2" fill="#9e9e9e"/><rect x="6" y="14" width="2" height="2" fill="#9e9e9e"/><rect x="14" y="14" width="2" height="2" fill="#9e9e9e"/><rect x="8" y="16" width="6" height="2" fill="#9e9e9e"/></svg><div style="left:765px;top:104px;width:22px;height:22px;background:#c6c6c6;"></div><svg style="position:absolute;left:765px;top:104px;shape-rendering:crispEdges" width="18" height="18" viewBox="0 0 18 18"><rect x="8" y="4" width="6" height="2" fill="#9e9e9e"/><rect x="6" y="6" width="2" height="2" fill="#9e9e9e"/><rect x="14" y="6" width="2" height="2" fill="#9e9e9e"/><rect x="4" y="8" width="2" height="2" fill="#9e9e9e"/><rect x="16" y="8" width="2" height="2" fill="#9e9e9e"/><rect x="4" y="10" width="2" height="2" fill="#9e9e9e"/><rect x="16" y="10" width="2" height="2" fill="#9e9e9e"/><rect x="4" y="12" width="2" height="2" fill="#9e9e9e"/><rect x="16" y="12" width="2" height="2" fill="#9e9e9e"/><rect x="6" y="14" width="2" height="2" fill="#9e9e9e"/><rect x="14" y="14" width="2" height="2" fill="#9e9e9e"/><rect x="8" y="16" width="6" height="2" fill="#9e9e9e"/></svg><div style="left:789px;top:104px;width:22px;height:22px;background:#c6c6c6;"></div><svg style="position:absolute;left:789px;top:104px;shape-rendering:crispEdges" width="18" height="18" viewBox="0 0 18 18"><rect x="8" y="4" width="6" height="2" fill="#9e9e9e"/><rect x="6" y="6" width="2" height="2" fill="#9e9e9e"/><rect x="14" y="6" width="2" height="2" fill="#9e9e9e"/><rect x="4" y="8" width="2" height="2" fill="#9e9e9e"/><rect x="16" y="8" width="2" height="2" fill="#9e9e9e"/><rect x="4" y="10" width="2" height="2" fill="#9e9e9e"/><rect x="16" y="10" width="2" height="2" fill="#9e9e9e"/><rect x="4" y="12" width="2" height="2" fill="#9e9e9e"/><rect x="16" y="12" width="2" height="2" fill="#9e9e9e"/><rect x="6" y="14" width="2" height="2" fill="#9e9e9e"/><rect x="14" y="14" width="2" height="2" fill="#9e9e9e"/><rect x="8" y="16" width="6" height="2" fill="#9e9e9e"/></svg><div style="left:813px;top:104px;width:22px;height:22px;background:#c6c6c6;"></div><svg style="position:absolute;left:813px;top:104px;shape-rendering:crispEdges" width="18" height="18" viewBox="0 0 18 18"><rect x="8" y="4" width="6" height="2" fill="#9e9e9e"/><rect x="6" y="6" width="2" height="2" fill="#9e9e9e"/><rect x="14" y="6" width="2" height="2" fill="#9e9e9e"/><rect x="4" y="8" width="2" height="2" fill="#9e9e9e"/><rect x="16" y="8" width="2" height="2" fill="#9e9e9e"/><rect x="4" y="10" width="2" height="2" fill="#9e9e9e"/><rect x="16" y="10" width="2" height="2" fill="#9e9e9e"/><rect x="4" y="12" width="2" height="2" fill="#9e9e9e"/><rect x="16" y="12" width="2" height="2" fill="#9e9e9e"/><rect x="6" y="14" width="2" height="2" fill="#9e9e9e"/><rect x="14" y="14" width="2" height="2" fill="#9e9e9e"/><rect x="8" y="16" width="6" height="2" fill="#9e9e9e"/></svg><div style="left:837px;top:104px;width:22px;height:22px;background:#c6c6c6;"></div><svg style="position:absolute;left:837px;top:104px;shape-rendering:crispEdges" width="18" height="18" viewBox="0 0 18 18"><rect x="8" y="4" width="6" height="2" fill="#9e9e9e"/><rect x="6" y="6" width="2" height="2" fill="#9e9e9e"/><rect x="14" y="6" width="2" height="2" fill="#9e9e9e"/><rect x="4" y="8" width="2" height="2" fill="#9e9e9e"/><rect x="16" y="8" width="2" height="2" fill="#9e9e9e"/><rect x="4" y="10" width="2" height="2" fill="#9e9e9e"/><rect x="16" y="10" width="2" height="2" fill="#9e9e9e"/><rect x="4" y="12" width="2" height="2" fill="#9e9e9e"/><rect x="16" y="12" width="2" height="2" fill="#9e9e9e"/><rect x="6" y="14" width="2" height="2" fill="#9e9e9e"/><rect x="14" y="14" width="2" height="2" fill="#9e9e9e"/><rect x="8" y="16" width="6" height="2" fill="#9e9e9e"/></svg><div style="left:861px;top:104px;width:22px;height:22px;background:#c6c6c6;"></div><svg style="position:absolute;left:861px;top:104px;shape-rendering:crispEdges" width="18" height="18" viewBox="0 0 18 18"><rect x="8" y="4" width="6" height="2" fill="#9e9e9e"/><rect x="6" y="6" width="2" height="2" fill="#9e9e9e"/><rect x="14" y="6" width="2" height="2" fill="#9e9e9e"/><rect x="4" y="8" width="2" height="2" fill="#9e9e9e"/><rect x="16" y="8" width="2" height="2" fill="#9e9e9e"/><rect x="4" y="10" width="2" height="2" fill="#9e9e9e"/><rect x="16" y="10" width="2" height="2" fill="#9e9e9e"/><rect x="4" y="12" width="2" height="2" fill="#9e9e9e"/><rect x="16" y="12" width="2" height="2" fill="#9e9e9e"/><rect x="6" y="14" width="2" height="2" fill="#9e9e9e"/><rect x="14" y="14" width="2" height="2" fill="#9e9e9e"/><rect x="8" y="16" width="6" height="2" fill="#9e9e9e"/></svg><div style="left:885px;top:104px;width:22px;height:22px;background:#c6c6c6;"></div><svg style="position:absolute;left:885px;top:104px;shape-rendering:crispEdges" width="18" height="18" viewBox="0 0 18 18"><rect x="8" y="4" width="6" height="2" fill="#9e9e9e"/><rect x="6" y="6" width="2" height="2" fill="#9e9e9e"/><rect x="14" y="6" width="2" height="2" fill="#9e9e9e"/><rect x="4" y="8" width="2" height="2" fill="#9e9e9e"/><rect x="16" y="8" width="2" height="2" fill="#9e9e9e"/><rect x="4" y="10" width="2" height="2" fill="#9e9e9e"/><rect x="16" y="10" width="2" height="2" fill="#9e9e9e"/><rect x="4" y="12" width="2" height="2" fill="#9e9e9e"/><rect x="16" y="12" width="2" height="2" fill="#9e9e9e"/><rect x="6" y="14" width="2" height="2" fill="#9e9e9e"/><rect x="14" y="14" width="2" height="2" fill="#9e9e9e"/><rect x="8" y="16" width="6" height="2" fill="#9e9e9e"/></svg><div style="left:909px;top:104px;width:22px;height:22px;background:#c6c6c6;"></div><svg style="position:absolute;left:909px;top:104px;shape-rendering:crispEdges" width="18" height="18" viewBox="0 0 18 18"><rect x="8" y="4" width="6" height="2" fill="#9e9e9e"/><rect x="6" y="6" width="2" height="2" fill="#9e9e9e"/><rect x="14" y="6" width="2" height="2" fill="#9e9e9e"/><rect x="4" y="8" width="2" height="2" fill="#9e9e9e"/><rect x="16" y="8" width="2" height="2" fill="#9e9e9e"/><rect x="4" y="10" width="2" height="2" fill="#9e9e9e"/><rect x="16" y="10" width="2" height="2" fill="#9e9e9e"/><rect x="4" y="12" width="2" height="2" fill="#9e9e9e"/><rect x="16" y="12" width="2" height="2" fill="#9e9e9e"/><rect x="6" y="14" width="2" height="2" fill="#9e9e9e"/><rect x="14" y="14" width="2" height="2" fill="#9e9e9e"/><rect x="8" y="16" width="6" height="2" fill="#9e9e9e"/></svg><div style="left:445px;top:128px;width:22px;height:22px;background:#c6c6c6;"></div><div style="left:469px;top:128px;width:22px;height:22px;background:#c6c6c6;"></div><div style="left:493px;top:128px;width:22px;height:22px;background:#c6c6c6;"></div><div style="left:517px;top:128px;width:174px;height:22px;background:#c6c6c6;"></div><svg style="position:absolute;left:445px;top:128px;shape-rendering:crispEdges" width="18" height="18" viewBox="0 0 18 18"><rect x="6" y="6" width="8" height="2" fill="#000"/><rect x="4" y="8" width="6" height="2" fill="#000"/><rect x="10" y="8" width="2" height="2" fill="#fff"/><rect x="12" y="8" width="4" height="2" fill="#000"/><rect x="2" y="10" width="2" height="2" fill="#000"/><rect x="4" y="10" width="2" height="2" fill="#e4e4e4"/><rect x="6" y="10" width="8" height="2" fill="#000"/><rect x="14" y="10" width="2" height="2" fill="#e4e4e4"/><rect x="16" y="10" width="2" height="2" fill="#000"/><rect x="2" y="12" width="2" height="2" fill="#000"/><rect x="4" y="12" width="4" height="2" fill="#e4e4e4"/><rect x="8" y="12" width="4" height="2" fill="#000"/><rect x="12" y="12" width="4" height="2" fill="#e4e4e4"/><rect x="16" y="12" width="2" height="2" fill="#000"/><rect x="4" y="14" width="2" height="2" fill="#000"/><rect x="6" y="14" width="8" height="2" fill="#e4e4e4"/><rect x="14" y="14" width="2" height="2" fill="#000"/><rect x="6" y="16" width="8" height="2" fill="#000"/></svg><svg style="position:absolute;left:469px;top:128px;shape-rendering:crispEdges" width="16" height="18" viewBox="0 0 16 18"><rect x="6" y="2" width="2" height="2" fill="#808080"/><rect x="8" y="2" width="4" height="2" fill="#000"/><rect x="12" y="2" width="2" height="2" fill="#808080"/><rect x="6" y="4" width="2" height="2" fill="#000"/><rect x="8" y="4" width="4" height="2" fill="#e4e4e4"/><rect x="12" y="4" width="2" height="2" fill="#000"/><rect x="6" y="6" width="2" height="2" fill="#000"/><rect x="8" y="6" width="6" height="2" fill="#e4e4e4"/><rect x="4" y="8" width="12" height="2" fill="#000"/><rect x="4" y="10" width="6" height="2" fill="#000"/><rect x="10" y="10" width="2" height="2" fill="#888888"/><rect x="12" y="10" width="4" height="2" fill="#000"/><rect x="4" y="12" width="6" height="2" fill="#000"/><rect x="10" y="12" width="2" height="2" fill="#888888"/><rect x="12" y="12" width="4" height="2" fill="#000"/><rect x="4" y="14" width="12" height="2" fill="#000"/><rect x="4" y="16" width="12" height="2" fill="#808080"/></svg><svg style="position:absolute;left:493px;top:128px;shape-rendering:crispEdges" width="22" height="18" viewBox="0 0 22 18"><rect x="2" y="4" width="12" height="2" fill="#808080"/><rect x="2" y="6" width="4" height="2" fill="#808080"/><rect x="6" y="6" width="8" height="2" fill="#000"/><rect x="14" y="6" width="2" height="2" fill="#808080"/><rect x="2" y="8" width="2" height="2" fill="#808080"/><rect x="4" y="8" width="18" height="2" fill="#000"/><rect x="2" y="10" width="2" height="2" fill="#808080"/><rect x="4" y="10" width="18" height="2" fill="#000"/><rect x="2" y="12" width="18" height="2" fill="#000"/><rect x="2" y="14" width="18" height="2" fill="#000"/><rect x="2" y="16" width="18" height="2" fill="#808080"/></svg><svg style="position:absolute;left:547px;top:132px;shape-rendering:crispEdges" width="66" height="14" viewBox="0 0 66 14"><g fill="#000"><rect x="2" y="0" width="6" height="2"/><rect x="60" y="0" width="2" height="2"/><rect x="0" y="2" width="2" height="2"/><rect x="10" y="2" width="2" height="2"/><rect x="14" y="2" width="2" height="2"/><rect x="20" y="2" width="4" height="2"/><rect x="28" y="2" width="2" height="2"/><rect x="34" y="2" width="2" height="2"/><rect x="38" y="2" width="6" height="2"/><rect x="58" y="2" width="2" height="2"/><rect x="0" y="4" width="2" height="2"/><rect x="4" y="4" width="4" height="2"/><rect x="10" y="4" width="4" height="2"/><rect x="18" y="4" width="2" height="2"/><rect x="24" y="4" width="2" height="2"/><rect x="28" y="4" width="2" height="2"/><rect x="34" y="4" width="2" height="2"/><rect x="38" y="4" width="2" height="2"/><rect x="44" y="4" width="2" height="2"/><rect x="56" y="4" width="2" height="2"/><rect x="60" y="4" width="2" height="2"/><rect x="0" y="6" width="2" height="2"/><rect x="6" y="6" width="2" height="2"/><rect x="10" y="6" width="2" height="2"/><rect x="18" y="6" width="2" height="2"/><rect x="24" y="6" width="2" height="2"/><rect x="28" y="6" width="2" height="2"/><rect x="34" y="6" width="2" height="2"/><rect x="38" y="6" width="2" height="2"/><rect x="44" y="6" width="2" height="2"/><rect x="56" y="6" width="8" height="2"/><rect x="0" y="8" width="2" height="2"/><rect x="6" y="8" width="2" height="2"/><rect x="10" y="8" width="2" height="2"/><rect x="18" y="8" width="2" height="2"/><rect x="24" y="8" width="2" height="2"/><rect x="28" y="8" width="2" height="2"/><rect x="34" y="8" width="2" height="2"/><rect x="38" y="8" width="6" height="2"/><rect x="60" y="8" width="2" height="2"/><rect x="2" y="10" width="6" height="2"/><rect x="10" y="10" width="2" height="2"/><rect x="20" y="10" width="4" height="2"/><rect x="30" y="10" width="6" height="2"/><rect x="38" y="10" width="2" height="2"/><rect x="60" y="10" width="2" height="2"/><rect x="38" y="12" width="2" height="2"/></g></svg><div style="left:693px;top:128px;width:22px;height:22px;background:#7d929e;"></div><svg style="position:absolute;left:693px;top:128px;shape-rendering:crispEdges" width="18" height="18" viewBox="0 0 18 18"><rect x="8" y="4" width="6" height="2" fill="#66777f"/><rect x="6" y="6" width="2" height="2" fill="#66777f"/><rect x="14" y="6" width="2" height="2" fill="#66777f"/><rect x="4" y="8" width="2" height="2" fill="#66777f"/><rect x="16" y="8" width="2" height="2" fill="#66777f"/><rect x="4" y="10" width="2" height="2" fill="#66777f"/><rect x="16" y="10" width="2" height="2" fill="#66777f"/><rect x="4" y="12" width="2" height="2" fill="#66777f"/><rect x="16" y="12" width="2" height="2" fill="#66777f"/><rect x="6" y="14" width="2" height="2" fill="#66777f"/><rect x="14" y="14" width="2" height="2" fill="#66777f"/><rect x="8" y="16" width="6" height="2" fill="#66777f"/></svg><div style="left:717px;top:128px;width:22px;height:22px;background:#c6c6c6;"></div><svg style="position:absolute;left:717px;top:128px;shape-rendering:crispEdges" width="18" height="18" viewBox="0 0 18 18"><rect x="8" y="4" width="6" height="2" fill="#9e9e9e"/><rect x="6" y="6" width="2" height="2" fill="#9e9e9e"/><rect x="14" y="6" width="2" height="2" fill="#9e9e9e"/><rect x="4" y="8" width="2" height="2" fill="#9e9e9e"/><rect x="16" y="8" width="2" height="2" fill="#9e9e9e"/><rect x="4" y="10" width="2" height="2" fill="#9e9e9e"/><rect x="16" y="10" width="2" height="2" fill="#9e9e9e"/><rect x="4" y="12" width="2" height="2" fill="#9e9e9e"/><rect x="16" y="12" width="2" height="2" fill="#9e9e9e"/><rect x="6" y="14" width="2" height="2" fill="#9e9e9e"/><rect x="14" y="14" width="2" height="2" fill="#9e9e9e"/><rect x="8" y="16" width="6" height="2" fill="#9e9e9e"/></svg><div style="left:741px;top:128px;width:22px;height:22px;background:#c6c6c6;"></div><svg style="position:absolute;left:741px;top:128px;shape-rendering:crispEdges" width="18" height="18" viewBox="0 0 18 18"><rect x="8" y="4" width="6" height="2" fill="#9e9e9e"/><rect x="6" y="6" width="2" height="2" fill="#9e9e9e"/><rect x="14" y="6" width="2" height="2" fill="#9e9e9e"/><rect x="4" y="8" width="2" height="2" fill="#9e9e9e"/><rect x="16" y="8" width="2" height="2" fill="#9e9e9e"/><rect x="4" y="10" width="2" height="2" fill="#9e9e9e"/><rect x="16" y="10" width="2" height="2" fill="#9e9e9e"/><rect x="4" y="12" width="2" height="2" fill="#9e9e9e"/><rect x="16" y="12" width="2" height="2" fill="#9e9e9e"/><rect x="6" y="14" width="2" height="2" fill="#9e9e9e"/><rect x="14" y="14" width="2" height="2" fill="#9e9e9e"/><rect x="8" y="16" width="6" height="2" fill="#9e9e9e"/></svg><div style="left:765px;top:128px;width:22px;height:22px;background:#c6c6c6;"></div><svg style="position:absolute;left:765px;top:128px;shape-rendering:crispEdges" width="18" height="18" viewBox="0 0 18 18"><rect x="8" y="4" width="6" height="2" fill="#9e9e9e"/><rect x="6" y="6" width="2" height="2" fill="#9e9e9e"/><rect x="14" y="6" width="2" height="2" fill="#9e9e9e"/><rect x="4" y="8" width="2" height="2" fill="#9e9e9e"/><rect x="16" y="8" width="2" height="2" fill="#9e9e9e"/><rect x="4" y="10" width="2" height="2" fill="#9e9e9e"/><rect x="16" y="10" width="2" height="2" fill="#9e9e9e"/><rect x="4" y="12" width="2" height="2" fill="#9e9e9e"/><rect x="16" y="12" width="2" height="2" fill="#9e9e9e"/><rect x="6" y="14" width="2" height="2" fill="#9e9e9e"/><rect x="14" y="14" width="2" height="2" fill="#9e9e9e"/><rect x="8" y="16" width="6" height="2" fill="#9e9e9e"/></svg><div style="left:789px;top:128px;width:22px;height:22px;background:#c6c6c6;"></div><svg style="position:absolute;left:789px;top:128px;shape-rendering:crispEdges" width="18" height="18" viewBox="0 0 18 18"><rect x="8" y="4" width="6" height="2" fill="#9e9e9e"/><rect x="6" y="6" width="2" height="2" fill="#9e9e9e"/><rect x="14" y="6" width="2" height="2" fill="#9e9e9e"/><rect x="4" y="8" width="2" height="2" fill="#9e9e9e"/><rect x="16" y="8" width="2" height="2" fill="#9e9e9e"/><rect x="4" y="10" width="2" height="2" fill="#9e9e9e"/><rect x="16" y="10" width="2" height="2" fill="#9e9e9e"/><rect x="4" y="12" width="2" height="2" fill="#9e9e9e"/><rect x="16" y="12" width="2" height="2" fill="#9e9e9e"/><rect x="6" y="14" width="2" height="2" fill="#9e9e9e"/><rect x="14" y="14" width="2" height="2" fill="#9e9e9e"/><rect x="8" y="16" width="6" height="2" fill="#9e9e9e"/></svg><div style="left:813px;top:128px;width:22px;height:22px;background:#c6c6c6;"></div><svg style="position:absolute;left:813px;top:128px;shape-rendering:crispEdges" width="18" height="18" viewBox="0 0 18 18"><rect x="8" y="4" width="6" height="2" fill="#9e9e9e"/><rect x="6" y="6" width="2" height="2" fill="#9e9e9e"/><rect x="14" y="6" width="2" height="2" fill="#9e9e9e"/><rect x="4" y="8" width="2" height="2" fill="#9e9e9e"/><rect x="16" y="8" width="2" height="2" fill="#9e9e9e"/><rect x="4" y="10" width="2" height="2" fill="#9e9e9e"/><rect x="16" y="10" width="2" height="2" fill="#9e9e9e"/><rect x="4" y="12" width="2" height="2" fill="#9e9e9e"/><rect x="16" y="12" width="2" height="2" fill="#9e9e9e"/><rect x="6" y="14" width="2" height="2" fill="#9e9e9e"/><rect x="14" y="14" width="2" height="2" fill="#9e9e9e"/><rect x="8" y="16" width="6" height="2" fill="#9e9e9e"/></svg><div style="left:837px;top:128px;width:22px;height:22px;background:#c6c6c6;"></div><svg style="position:absolute;left:837px;top:128px;shape-rendering:crispEdges" width="18" height="18" viewBox="0 0 18 18"><rect x="8" y="4" width="6" height="2" fill="#9e9e9e"/><rect x="6" y="6" width="2" height="2" fill="#9e9e9e"/><rect x="14" y="6" width="2" height="2" fill="#9e9e9e"/><rect x="4" y="8" width="2" height="2" fill="#9e9e9e"/><rect x="16" y="8" width="2" height="2" fill="#9e9e9e"/><rect x="4" y="10" width="2" height="2" fill="#9e9e9e"/><rect x="16" y="10" width="2" height="2" fill="#9e9e9e"/><rect x="4" y="12" width="2" height="2" fill="#9e9e9e"/><rect x="16" y="12" width="2" height="2" fill="#9e9e9e"/><rect x="6" y="14" width="2" height="2" fill="#9e9e9e"/><rect x="14" y="14" width="2" height="2" fill="#9e9e9e"/><rect x="8" y="16" width="6" height="2" fill="#9e9e9e"/></svg><div style="left:861px;top:128px;width:22px;height:22px;background:#c6c6c6;"></div><svg style="position:absolute;left:861px;top:128px;shape-rendering:crispEdges" width="18" height="18" viewBox="0 0 18 18"><rect x="8" y="4" width="6" height="2" fill="#9e9e9e"/><rect x="6" y="6" width="2" height="2" fill="#9e9e9e"/><rect x="14" y="6" width="2" height="2" fill="#9e9e9e"/><rect x="4" y="8" width="2" height="2" fill="#9e9e9e"/><rect x="16" y="8" width="2" height="2" fill="#9e9e9e"/><rect x="4" y="10" width="2" height="2" fill="#9e9e9e"/><rect x="16" y="10" width="2" height="2" fill="#9e9e9e"/><rect x="4" y="12" width="2" height="2" fill="#9e9e9e"/><rect x="16" y="12" width="2" height="2" fill="#9e9e9e"/><rect x="6" y="14" width="2" height="2" fill="#9e9e9e"/><rect x="14" y="14" width="2" height="2" fill="#9e9e9e"/><rect x="8" y="16" width="6" height="2" fill="#9e9e9e"/></svg><div style="left:885px;top:128px;width:22px;height:22px;background:#c6c6c6;"></div><svg style="position:absolute;left:885px;top:128px;shape-rendering:crispEdges" width="18" height="18" viewBox="0 0 18 18"><rect x="8" y="4" width="6" height="2" fill="#9e9e9e"/><rect x="6" y="6" width="2" height="2" fill="#9e9e9e"/><rect x="14" y="6" width="2" height="2" fill="#9e9e9e"/><rect x="4" y="8" width="2" height="2" fill="#9e9e9e"/><rect x="16" y="8" width="2" height="2" fill="#9e9e9e"/><rect x="4" y="10" width="2" height="2" fill="#9e9e9e"/><rect x="16" y="10" width="2" height="2" fill="#9e9e9e"/><rect x="4" y="12" width="2" height="2" fill="#9e9e9e"/><rect x="16" y="12" width="2" height="2" fill="#9e9e9e"/><rect x="6" y="14" width="2" height="2" fill="#9e9e9e"/><rect x="14" y="14" width="2" height="2" fill="#9e9e9e"/><rect x="8" y="16" width="6" height="2" fill="#9e9e9e"/></svg><div style="left:909px;top:128px;width:22px;height:22px;background:#c6c6c6;"></div><svg style="position:absolute;left:909px;top:128px;shape-rendering:crispEdges" width="18" height="18" viewBox="0 0 18 18"><rect x="8" y="4" width="6" height="2" fill="#9e9e9e"/><rect x="6" y="6" width="2" height="2" fill="#9e9e9e"/><rect x="14" y="6" width="2" height="2" fill="#9e9e9e"/><rect x="4" y="8" width="2" height="2" fill="#9e9e9e"/><rect x="16" y="8" width="2" height="2" fill="#9e9e9e"/><rect x="4" y="10" width="2" height="2" fill="#9e9e9e"/><rect x="16" y="10" width="2" height="2" fill="#9e9e9e"/><rect x="4" y="12" width="2" height="2" fill="#9e9e9e"/><rect x="16" y="12" width="2" height="2" fill="#9e9e9e"/><rect x="6" y="14" width="2" height="2" fill="#9e9e9e"/><rect x="14" y="14" width="2" height="2" fill="#9e9e9e"/><rect x="8" y="16" width="6" height="2" fill="#9e9e9e"/></svg><div style="left:445px;top:152px;width:22px;height:22px;background:#c6c6c6;"></div><div style="left:469px;top:152px;width:22px;height:22px;background:#c6c6c6;"></div><div style="left:493px;top:152px;width:22px;height:22px;background:#c6c6c6;"></div><div style="left:517px;top:152px;width:174px;height:22px;background:#c6c6c6;"></div><svg style="position:absolute;left:445px;top:152px;shape-rendering:crispEdges" width="18" height="18" viewBox="0 0 18 18"><rect x="6" y="6" width="8" height="2" fill="#000"/><rect x="4" y="8" width="6" height="2" fill="#000"/><rect x="10" y="8" width="2" height="2" fill="#fff"/><rect x="12" y="8" width="4" height="2" fill="#000"/><rect x="2" y="10" width="2" height="2" fill="#000"/><rect x="4" y="10" width="2" height="2" fill="#e4e4e4"/><rect x="6" y="10" width="8" height="2" fill="#000"/><rect x="14" y="10" width="2" height="2" fill="#e4e4e4"/><rect x="16" y="10" width="2" height="2" fill="#000"/><rect x="2" y="12" width="2" height="2" fill="#000"/><rect x="4" y="12" width="4" height="2" fill="#e4e4e4"/><rect x="8" y="12" width="4" height="2" fill="#000"/><rect x="12" y="12" width="4" height="2" fill="#e4e4e4"/><rect x="16" y="12" width="2" height="2" fill="#000"/><rect x="4" y="14" width="2" height="2" fill="#000"/><rect x="6" y="14" width="8" height="2" fill="#e4e4e4"/><rect x="14" y="14" width="2" height="2" fill="#000"/><rect x="6" y="16" width="8" height="2" fill="#000"/></svg><svg style="position:absolute;left:469px;top:152px;shape-rendering:crispEdges" width="16" height="18" viewBox="0 0 16 18"><rect x="6" y="2" width="2" height="2" fill="#808080"/><rect x="8" y="2" width="4" height="2" fill="#000"/><rect x="12" y="2" width="2" height="2" fill="#808080"/><rect x="6" y="4" width="2" height="2" fill="#000"/><rect x="8" y="4" width="4" height="2" fill="#e4e4e4"/><rect x="12" y="4" width="2" height="2" fill="#000"/><rect x="6" y="6" width="2" height="2" fill="#000"/><rect x="8" y="6" width="6" height="2" fill="#e4e4e4"/><rect x="4" y="8" width="12" height="2" fill="#000"/><rect x="4" y="10" width="6" height="2" fill="#000"/><rect x="10" y="10" width="2" height="2" fill="#888888"/><rect x="12" y="10" width="4" height="2" fill="#000"/><rect x="4" y="12" width="6" height="2" fill="#000"/><rect x="10" y="12" width="2" height="2" fill="#888888"/><rect x="12" y="12" width="4" height="2" fill="#000"/><rect x="4" y="14" width="12" height="2" fill="#000"/><rect x="4" y="16" width="12" height="2" fill="#808080"/></svg><svg style="position:absolute;left:493px;top:152px;shape-rendering:crispEdges" width="20" height="16" viewBox="0 0 20 16"><rect x="4" y="6" width="4" height="2" fill="#000"/><rect x="14" y="6" width="4" height="2" fill="#000"/><rect x="2" y="8" width="8" height="2" fill="#000"/><rect x="12" y="8" width="8" height="2" fill="#000"/><rect x="2" y="10" width="8" height="2" fill="#000"/><rect x="12" y="10" width="8" height="2" fill="#000"/><rect x="2" y="12" width="2" height="2" fill="#808080"/><rect x="4" y="12" width="4" height="2" fill="#000"/><rect x="8" y="12" width="2" height="2" fill="#808080"/><rect x="12" y="12" width="2" height="2" fill="#808080"/><rect x="14" y="12" width="4" height="2" fill="#000"/><rect x="18" y="12" width="2" height="2" fill="#808080"/><rect x="4" y="14" width="4" height="2" fill="#808080"/><rect x="14" y="14" width="4" height="2" fill="#808080"/></svg><svg style="position:absolute;left:571px;top:156px;shape-rendering:crispEdges" width="66" height="14" viewBox="0 0 66 14"><g fill="#000"><rect x="0" y="0" width="2" height="2"/><rect x="56" y="0" width="6" height="2"/><rect x="0" y="2" width="2" height="2"/><rect x="12" y="2" width="4" height="2"/><rect x="20" y="2" width="2" height="2"/><rect x="26" y="2" width="2" height="2"/><rect x="32" y="2" width="4" height="2"/><rect x="40" y="2" width="2" height="2"/><rect x="44" y="2" width="2" height="2"/><rect x="56" y="2" width="2" height="2"/><rect x="0" y="4" width="2" height="2"/><rect x="16" y="4" width="2" height="2"/><rect x="20" y="4" width="2" height="2"/><rect x="26" y="4" width="2" height="2"/><rect x="30" y="4" width="2" height="2"/><rect x="36" y="4" width="2" height="2"/><rect x="40" y="4" width="4" height="2"/><rect x="56" y="4" width="6" height="2"/><rect x="0" y="6" width="2" height="2"/><rect x="12" y="6" width="6" height="2"/><rect x="20" y="6" width="2" height="2"/><rect x="26" y="6" width="2" height="2"/><rect x="30" y="6" width="8" height="2"/><rect x="40" y="6" width="2" height="2"/><rect x="62" y="6" width="2" height="2"/><rect x="0" y="8" width="2" height="2"/><rect x="10" y="8" width="2" height="2"/><rect x="16" y="8" width="2" height="2"/><rect x="22" y="8" width="6" height="2"/><rect x="30" y="8" width="2" height="2"/><rect x="40" y="8" width="2" height="2"/><rect x="62" y="8" width="2" height="2"/><rect x="0" y="10" width="8" height="2"/><rect x="12" y="10" width="6" height="2"/><rect x="26" y="10" width="2" height="2"/><rect x="32" y="10" width="4" height="2"/><rect x="40" y="10" width="2" height="2"/><rect x="56" y="10" width="6" height="2"/><rect x="22" y="12" width="4" height="2"/></g></svg><div style="left:693px;top:152px;width:22px;height:22px;background:#7d929e;"></div><svg style="position:absolute;left:693px;top:152px;shape-rendering:crispEdges" width="18" height="18" viewBox="0 0 18 18"><rect x="8" y="4" width="6" height="2" fill="#66777f"/><rect x="6" y="6" width="2" height="2" fill="#66777f"/><rect x="14" y="6" width="2" height="2" fill="#66777f"/><rect x="4" y="8" width="2" height="2" fill="#66777f"/><rect x="16" y="8" width="2" height="2" fill="#66777f"/><rect x="4" y="10" width="2" height="2" fill="#66777f"/><rect x="16" y="10" width="2" height="2" fill="#66777f"/><rect x="4" y="12" width="2" height="2" fill="#66777f"/><rect x="16" y="12" width="2" height="2" fill="#66777f"/><rect x="6" y="14" width="2" height="2" fill="#66777f"/><rect x="14" y="14" width="2" height="2" fill="#66777f"/><rect x="8" y="16" width="6" height="2" fill="#66777f"/></svg><div style="left:717px;top:152px;width:22px;height:22px;background:#c6c6c6;"></div><svg style="position:absolute;left:717px;top:152px;shape-rendering:crispEdges" width="18" height="18" viewBox="0 0 18 18"><rect x="8" y="4" width="6" height="2" fill="#9e9e9e"/><rect x="6" y="6" width="2" height="2" fill="#9e9e9e"/><rect x="14" y="6" width="2" height="2" fill="#9e9e9e"/><rect x="4" y="8" width="2" height="2" fill="#9e9e9e"/><rect x="16" y="8" width="2" height="2" fill="#9e9e9e"/><rect x="4" y="10" width="2" height="2" fill="#9e9e9e"/><rect x="16" y="10" width="2" height="2" fill="#9e9e9e"/><rect x="4" y="12" width="2" height="2" fill="#9e9e9e"/><rect x="16" y="12" width="2" height="2" fill="#9e9e9e"/><rect x="6" y="14" width="2" height="2" fill="#9e9e9e"/><rect x="14" y="14" width="2" height="2" fill="#9e9e9e"/><rect x="8" y="16" width="6" height="2" fill="#9e9e9e"/></svg><div style="left:741px;top:152px;width:22px;height:22px;background:#c6c6c6;"></div><svg style="position:absolute;left:741px;top:152px;shape-rendering:crispEdges" width="18" height="18" viewBox="0 0 18 18"><rect x="8" y="4" width="6" height="2" fill="#9e9e9e"/><rect x="6" y="6" width="2" height="2" fill="#9e9e9e"/><rect x="14" y="6" width="2" height="2" fill="#9e9e9e"/><rect x="4" y="8" width="2" height="2" fill="#9e9e9e"/><rect x="16" y="8" width="2" height="2" fill="#9e9e9e"/><rect x="4" y="10" width="2" height="2" fill="#9e9e9e"/><rect x="16" y="10" width="2" height="2" fill="#9e9e9e"/><rect x="4" y="12" width="2" height="2" fill="#9e9e9e"/><rect x="16" y="12" width="2" height="2" fill="#9e9e9e"/><rect x="6" y="14" width="2" height="2" fill="#9e9e9e"/><rect x="14" y="14" width="2" height="2" fill="#9e9e9e"/><rect x="8" y="16" width="6" height="2" fill="#9e9e9e"/></svg><div style="left:765px;top:152px;width:22px;height:22px;background:#c6c6c6;"></div><svg style="position:absolute;left:765px;top:152px;shape-rendering:crispEdges" width="18" height="18" viewBox="0 0 18 18"><rect x="8" y="4" width="6" height="2" fill="#9e9e9e"/><rect x="6" y="6" width="2" height="2" fill="#9e9e9e"/><rect x="14" y="6" width="2" height="2" fill="#9e9e9e"/><rect x="4" y="8" width="2" height="2" fill="#9e9e9e"/><rect x="16" y="8" width="2" height="2" fill="#9e9e9e"/><rect x="4" y="10" width="2" height="2" fill="#9e9e9e"/><rect x="16" y="10" width="2" height="2" fill="#9e9e9e"/><rect x="4" y="12" width="2" height="2" fill="#9e9e9e"/><rect x="16" y="12" width="2" height="2" fill="#9e9e9e"/><rect x="6" y="14" width="2" height="2" fill="#9e9e9e"/><rect x="14" y="14" width="2" height="2" fill="#9e9e9e"/><rect x="8" y="16" width="6" height="2" fill="#9e9e9e"/></svg><div style="left:789px;top:152px;width:22px;height:22px;background:#c6c6c6;"></div><svg style="position:absolute;left:789px;top:152px;shape-rendering:crispEdges" width="18" height="18" viewBox="0 0 18 18"><rect x="8" y="4" width="6" height="2" fill="#9e9e9e"/><rect x="6" y="6" width="2" height="2" fill="#9e9e9e"/><rect x="14" y="6" width="2" height="2" fill="#9e9e9e"/><rect x="4" y="8" width="2" height="2" fill="#9e9e9e"/><rect x="16" y="8" width="2" height="2" fill="#9e9e9e"/><rect x="4" y="10" width="2" height="2" fill="#9e9e9e"/><rect x="16" y="10" width="2" height="2" fill="#9e9e9e"/><rect x="4" y="12" width="2" height="2" fill="#9e9e9e"/><rect x="16" y="12" width="2" height="2" fill="#9e9e9e"/><rect x="6" y="14" width="2" height="2" fill="#9e9e9e"/><rect x="14" y="14" width="2" height="2" fill="#9e9e9e"/><rect x="8" y="16" width="6" height="2" fill="#9e9e9e"/></svg><div style="left:813px;top:152px;width:22px;height:22px;background:#c6c6c6;"></div><svg style="position:absolute;left:813px;top:152px;shape-rendering:crispEdges" width="18" height="18" viewBox="0 0 18 18"><rect x="8" y="4" width="6" height="2" fill="#9e9e9e"/><rect x="6" y="6" width="2" height="2" fill="#9e9e9e"/><rect x="14" y="6" width="2" height="2" fill="#9e9e9e"/><rect x="4" y="8" width="2" height="2" fill="#9e9e9e"/><rect x="16" y="8" width="2" height="2" fill="#9e9e9e"/><rect x="4" y="10" width="2" height="2" fill="#9e9e9e"/><rect x="16" y="10" width="2" height="2" fill="#9e9e9e"/><rect x="4" y="12" width="2" height="2" fill="#9e9e9e"/><rect x="16" y="12" width="2" height="2" fill="#9e9e9e"/><rect x="6" y="14" width="2" height="2" fill="#9e9e9e"/><rect x="14" y="14" width="2" height="2" fill="#9e9e9e"/><rect x="8" y="16" width="6" height="2" fill="#9e9e9e"/></svg><div style="left:837px;top:152px;width:22px;height:22px;background:#c6c6c6;"></div><svg style="position:absolute;left:837px;top:152px;shape-rendering:crispEdges" width="18" height="18" viewBox="0 0 18 18"><rect x="8" y="4" width="6" height="2" fill="#9e9e9e"/><rect x="6" y="6" width="2" height="2" fill="#9e9e9e"/><rect x="14" y="6" width="2" height="2" fill="#9e9e9e"/><rect x="4" y="8" width="2" height="2" fill="#9e9e9e"/><rect x="16" y="8" width="2" height="2" fill="#9e9e9e"/><rect x="4" y="10" width="2" height="2" fill="#9e9e9e"/><rect x="16" y="10" width="2" height="2" fill="#9e9e9e"/><rect x="4" y="12" width="2" height="2" fill="#9e9e9e"/><rect x="16" y="12" width="2" height="2" fill="#9e9e9e"/><rect x="6" y="14" width="2" height="2" fill="#9e9e9e"/><rect x="14" y="14" width="2" height="2" fill="#9e9e9e"/><rect x="8" y="16" width="6" height="2" fill="#9e9e9e"/></svg><div style="left:861px;top:152px;width:22px;height:22px;background:#c6c6c6;"></div><svg style="position:absolute;left:861px;top:152px;shape-rendering:crispEdges" width="18" height="18" viewBox="0 0 18 18"><rect x="8" y="4" width="6" height="2" fill="#9e9e9e"/><rect x="6" y="6" width="2" height="2" fill="#9e9e9e"/><rect x="14" y="6" width="2" height="2" fill="#9e9e9e"/><rect x="4" y="8" width="2" height="2" fill="#9e9e9e"/><rect x="16" y="8" width="2" height="2" fill="#9e9e9e"/><rect x="4" y="10" width="2" height="2" fill="#9e9e9e"/><rect x="16" y="10" width="2" height="2" fill="#9e9e9e"/><rect x="4" y="12" width="2" height="2" fill="#9e9e9e"/><rect x="16" y="12" width="2" height="2" fill="#9e9e9e"/><rect x="6" y="14" width="2" height="2" fill="#9e9e9e"/><rect x="14" y="14" width="2" height="2" fill="#9e9e9e"/><rect x="8" y="16" width="6" height="2" fill="#9e9e9e"/></svg><div style="left:885px;top:152px;width:22px;height:22px;background:#c6c6c6;"></div><svg style="position:absolute;left:885px;top:152px;shape-rendering:crispEdges" width="18" height="18" viewBox="0 0 18 18"><rect x="8" y="4" width="6" height="2" fill="#9e9e9e"/><rect x="6" y="6" width="2" height="2" fill="#9e9e9e"/><rect x="14" y="6" width="2" height="2" fill="#9e9e9e"/><rect x="4" y="8" width="2" height="2" fill="#9e9e9e"/><rect x="16" y="8" width="2" height="2" fill="#9e9e9e"/><rect x="4" y="10" width="2" height="2" fill="#9e9e9e"/><rect x="16" y="10" width="2" height="2" fill="#9e9e9e"/><rect x="4" y="12" width="2" height="2" fill="#9e9e9e"/><rect x="16" y="12" width="2" height="2" fill="#9e9e9e"/><rect x="6" y="14" width="2" height="2" fill="#9e9e9e"/><rect x="14" y="14" width="2" height="2" fill="#9e9e9e"/><rect x="8" y="16" width="6" height="2" fill="#9e9e9e"/></svg><div style="left:909px;top:152px;width:22px;height:22px;background:#c6c6c6;"></div><svg style="position:absolute;left:909px;top:152px;shape-rendering:crispEdges" width="18" height="18" viewBox="0 0 18 18"><rect x="8" y="4" width="6" height="2" fill="#9e9e9e"/><rect x="6" y="6" width="2" height="2" fill="#9e9e9e"/><rect x="14" y="6" width="2" height="2" fill="#9e9e9e"/><rect x="4" y="8" width="2" height="2" fill="#9e9e9e"/><rect x="16" y="8" width="2" height="2" fill="#9e9e9e"/><rect x="4" y="10" width="2" height="2" fill="#9e9e9e"/><rect x="16" y="10" width="2" height="2" fill="#9e9e9e"/><rect x="4" y="12" width="2" height="2" fill="#9e9e9e"/><rect x="16" y="12" width="2" height="2" fill="#9e9e9e"/><rect x="6" y="14" width="2" height="2" fill="#9e9e9e"/><rect x="14" y="14" width="2" height="2" fill="#9e9e9e"/><rect x="8" y="16" width="6" height="2" fill="#9e9e9e"/></svg><div style="left:445px;top:176px;width:22px;height:22px;background:#c6c6c6;"></div><div style="left:469px;top:176px;width:22px;height:22px;background:#c6c6c6;"></div><div style="left:493px;top:176px;width:22px;height:22px;background:#c6c6c6;"></div><div style="left:517px;top:176px;width:174px;height:22px;background:#c6c6c6;"></div><svg style="position:absolute;left:445px;top:176px;shape-rendering:crispEdges" width="18" height="18" viewBox="0 0 18 18"><rect x="6" y="6" width="8" height="2" fill="#000"/><rect x="4" y="8" width="6" height="2" fill="#000"/><rect x="10" y="8" width="2" height="2" fill="#fff"/><rect x="12" y="8" width="4" height="2" fill="#000"/><rect x="2" y="10" width="2" height="2" fill="#000"/><rect x="4" y="10" width="2" height="2" fill="#e4e4e4"/><rect x="6" y="10" width="8" height="2" fill="#000"/><rect x="14" y="10" width="2" height="2" fill="#e4e4e4"/><rect x="16" y="10" width="2" height="2" fill="#000"/><rect x="2" y="12" width="2" height="2" fill="#000"/><rect x="4" y="12" width="4" height="2" fill="#e4e4e4"/><rect x="8" y="12" width="4" height="2" fill="#000"/><rect x="12" y="12" width="4" height="2" fill="#e4e4e4"/><rect x="16" y="12" width="2" height="2" fill="#000"/><rect x="4" y="14" width="2" height="2" fill="#000"/><rect x="6" y="14" width="8" height="2" fill="#e4e4e4"/><rect x="14" y="14" width="2" height="2" fill="#000"/><rect x="6" y="16" width="8" height="2" fill="#000"/></svg><svg style="position:absolute;left:469px;top:176px;shape-rendering:crispEdges" width="16" height="18" viewBox="0 0 16 18"><rect x="6" y="2" width="2" height="2" fill="#808080"/><rect x="8" y="2" width="4" height="2" fill="#000"/><rect x="12" y="2" width="2" height="2" fill="#808080"/><rect x="6" y="4" width="2" height="2" fill="#000"/><rect x="8" y="4" width="4" height="2" fill="#e4e4e4"/><rect x="12" y="4" width="2" height="2" fill="#000"/><rect x="6" y="6" width="2" height="2" fill="#000"/><rect x="8" y="6" width="6" height="2" fill="#e4e4e4"/><rect x="4" y="8" width="12" height="2" fill="#000"/><rect x="4" y="10" width="6" height="2" fill="#000"/><rect x="10" y="10" width="2" height="2" fill="#888888"/><rect x="12" y="10" width="4" height="2" fill="#000"/><rect x="4" y="12" width="6" height="2" fill="#000"/><rect x="10" y="12" width="2" height="2" fill="#888888"/><rect x="12" y="12" width="4" height="2" fill="#000"/><rect x="4" y="14" width="12" height="2" fill="#000"/><rect x="4" y="16" width="12" height="2" fill="#808080"/></svg><svg style="position:absolute;left:493px;top:176px;shape-rendering:crispEdges" width="20" height="16" viewBox="0 0 20 16"><rect x="4" y="6" width="4" height="2" fill="#000"/><rect x="14" y="6" width="4" height="2" fill="#000"/><rect x="2" y="8" width="8" height="2" fill="#000"/><rect x="12" y="8" width="8" height="2" fill="#000"/><rect x="2" y="10" width="8" height="2" fill="#000"/><rect x="12" y="10" width="8" height="2" fill="#000"/><rect x="2" y="12" width="2" height="2" fill="#808080"/><rect x="4" y="12" width="4" height="2" fill="#000"/><rect x="8" y="12" width="2" height="2" fill="#808080"/><rect x="12" y="12" width="2" height="2" fill="#808080"/><rect x="14" y="12" width="4" height="2" fill="#000"/><rect x="18" y="12" width="2" height="2" fill="#808080"/><rect x="4" y="14" width="4" height="2" fill="#808080"/><rect x="14" y="14" width="4" height="2" fill="#808080"/></svg><svg style="position:absolute;left:571px;top:180px;shape-rendering:crispEdges" width="74" height="14" viewBox="0 0 74 14"><g fill="#000"><rect x="2" y="2" width="6" height="2"/><rect x="12" y="2" width="4" height="2"/><rect x="20" y="2" width="12" height="2"/><rect x="36" y="2" width="6" height="2"/><rect x="46" y="2" width="2" height="2"/><rect x="56" y="2" width="2" height="2"/><rect x="60" y="2" width="2" height="2"/><rect x="66" y="2" width="4" height="2"/><rect x="0" y="4" width="2" height="2"/><rect x="16" y="4" width="2" height="2"/><rect x="20" y="4" width="2" height="2"/><rect x="26" y="4" width="2" height="2"/><rect x="32" y="4" width="2" height="2"/><rect x="36" y="4" width="2" height="2"/><rect x="42" y="4" width="2" height="2"/><rect x="46" y="4" width="4" height="2"/><rect x="52" y="4" width="2" height="2"/><rect x="56" y="4" width="4" height="2"/><rect x="64" y="4" width="2" height="2"/><rect x="70" y="4" width="2" height="2"/><rect x="0" y="6" width="2" height="2"/><rect x="12" y="6" width="6" height="2"/><rect x="20" y="6" width="2" height="2"/><rect x="26" y="6" width="2" height="2"/><rect x="32" y="6" width="2" height="2"/><rect x="36" y="6" width="2" height="2"/><rect x="42" y="6" width="2" height="2"/><rect x="46" y="6" width="2" height="2"/><rect x="52" y="6" width="2" height="2"/><rect x="56" y="6" width="2" height="2"/><rect x="64" y="6" width="8" height="2"/><rect x="0" y="8" width="2" height="2"/><rect x="10" y="8" width="2" height="2"/><rect x="16" y="8" width="2" height="2"/><rect x="20" y="8" width="2" height="2"/><rect x="26" y="8" width="2" height="2"/><rect x="32" y="8" width="2" height="2"/><rect x="36" y="8" width="6" height="2"/><rect x="46" y="8" width="2" height="2"/><rect x="52" y="8" width="2" height="2"/><rect x="56" y="8" width="2" height="2"/><rect x="64" y="8" width="2" height="2"/><rect x="2" y="10" width="6" height="2"/><rect x="12" y="10" width="6" height="2"/><rect x="20" y="10" width="2" height="2"/><rect x="26" y="10" width="2" height="2"/><rect x="32" y="10" width="2" height="2"/><rect x="36" y="10" width="2" height="2"/><rect x="46" y="10" width="2" height="2"/><rect x="52" y="10" width="2" height="2"/><rect x="56" y="10" width="2" height="2"/><rect x="66" y="10" width="4" height="2"/><rect x="36" y="12" width="2" height="2"/><rect x="48" y="0" width="2" height="2"/><rect x="52" y="0" width="2" height="2"/></g></svg><div style="left:693px;top:176px;width:22px;height:22px;background:#7d929e;"></div><svg style="position:absolute;left:693px;top:176px;shape-rendering:crispEdges" width="18" height="18" viewBox="0 0 18 18"><rect x="6" y="4" width="2" height="2" fill="#c8d0d6"/><rect x="8" y="4" width="6" height="2" fill="#fff"/><rect x="14" y="4" width="2" height="2" fill="#c8d0d6"/><rect x="4" y="6" width="2" height="2" fill="#c8d0d6"/><rect x="6" y="6" width="10" height="2" fill="#fff"/><rect x="16" y="6" width="2" height="2" fill="#c8d0d6"/><rect x="4" y="8" width="14" height="2" fill="#fff"/><rect x="4" y="10" width="14" height="2" fill="#fff"/><rect x="4" y="12" width="14" height="2" fill="#fff"/><rect x="4" y="14" width="2" height="2" fill="#c8d0d6"/><rect x="6" y="14" width="10" height="2" fill="#fff"/><rect x="16" y="14" width="2" height="2" fill="#c8d0d6"/><rect x="6" y="16" width="2" height="2" fill="#c8d0d6"/><rect x="8" y="16" width="6" height="2" fill="#fff"/><rect x="14" y="16" width="2" height="2" fill="#c8d0d6"/></svg><div style="left:717px;top:176px;width:22px;height:22px;background:#c6c6c6;"></div><svg style="position:absolute;left:717px;top:176px;shape-rendering:crispEdges" width="18" height="18" viewBox="0 0 18 18"><rect x="6" y="4" width="2" height="2" fill="#6e6e6e"/><rect x="8" y="4" width="6" height="2" fill="#000"/><rect x="14" y="4" width="2" height="2" fill="#6e6e6e"/><rect x="4" y="6" width="2" height="2" fill="#6e6e6e"/><rect x="6" y="6" width="10" height="2" fill="#000"/><rect x="16" y="6" width="2" height="2" fill="#6e6e6e"/><rect x="4" y="8" width="14" height="2" fill="#000"/><rect x="4" y="10" width="14" height="2" fill="#000"/><rect x="4" y="12" width="14" height="2" fill="#000"/><rect x="4" y="14" width="2" height="2" fill="#6e6e6e"/><rect x="6" y="14" width="10" height="2" fill="#000"/><rect x="16" y="14" width="2" height="2" fill="#6e6e6e"/><rect x="6" y="16" width="2" height="2" fill="#6e6e6e"/><rect x="8" y="16" width="6" height="2" fill="#000"/><rect x="14" y="16" width="2" height="2" fill="#6e6e6e"/></svg><div style="left:741px;top:176px;width:22px;height:22px;background:#c6c6c6;"></div><svg style="position:absolute;left:741px;top:176px;shape-rendering:crispEdges" width="18" height="18" viewBox="0 0 18 18"><rect x="6" y="4" width="2" height="2" fill="#6e6e6e"/><rect x="8" y="4" width="6" height="2" fill="#000"/><rect x="14" y="4" width="2" height="2" fill="#6e6e6e"/><rect x="4" y="6" width="2" height="2" fill="#6e6e6e"/><rect x="6" y="6" width="10" height="2" fill="#000"/><rect x="16" y="6" width="2" height="2" fill="#6e6e6e"/><rect x="4" y="8" width="14" height="2" fill="#000"/><rect x="4" y="10" width="14" height="2" fill="#000"/><rect x="4" y="12" width="14" height="2" fill="#000"/><rect x="4" y="14" width="2" height="2" fill="#6e6e6e"/><rect x="6" y="14" width="10" height="2" fill="#000"/><rect x="16" y="14" width="2" height="2" fill="#6e6e6e"/><rect x="6" y="16" width="2" height="2" fill="#6e6e6e"/><rect x="8" y="16" width="6" height="2" fill="#000"/><rect x="14" y="16" width="2" height="2" fill="#6e6e6e"/></svg><div style="left:765px;top:176px;width:22px;height:22px;background:#c6c6c6;"></div><svg style="position:absolute;left:765px;top:176px;shape-rendering:crispEdges" width="18" height="18" viewBox="0 0 18 18"><rect x="6" y="4" width="2" height="2" fill="#6e6e6e"/><rect x="8" y="4" width="6" height="2" fill="#000"/><rect x="14" y="4" width="2" height="2" fill="#6e6e6e"/><rect x="4" y="6" width="2" height="2" fill="#6e6e6e"/><rect x="6" y="6" width="10" height="2" fill="#000"/><rect x="16" y="6" width="2" height="2" fill="#6e6e6e"/><rect x="4" y="8" width="14" height="2" fill="#000"/><rect x="4" y="10" width="14" height="2" fill="#000"/><rect x="4" y="12" width="14" height="2" fill="#000"/><rect x="4" y="14" width="2" height="2" fill="#6e6e6e"/><rect x="6" y="14" width="10" height="2" fill="#000"/><rect x="16" y="14" width="2" height="2" fill="#6e6e6e"/><rect x="6" y="16" width="2" height="2" fill="#6e6e6e"/><rect x="8" y="16" width="6" height="2" fill="#000"/><rect x="14" y="16" width="2" height="2" fill="#6e6e6e"/></svg><div style="left:789px;top:176px;width:22px;height:22px;background:#c6c6c6;"></div><svg style="position:absolute;left:789px;top:176px;shape-rendering:crispEdges" width="18" height="18" viewBox="0 0 18 18"><rect x="6" y="4" width="2" height="2" fill="#6e6e6e"/><rect x="8" y="4" width="6" height="2" fill="#000"/><rect x="14" y="4" width="2" height="2" fill="#6e6e6e"/><rect x="4" y="6" width="2" height="2" fill="#6e6e6e"/><rect x="6" y="6" width="10" height="2" fill="#000"/><rect x="16" y="6" width="2" height="2" fill="#6e6e6e"/><rect x="4" y="8" width="14" height="2" fill="#000"/><rect x="4" y="10" width="14" height="2" fill="#000"/><rect x="4" y="12" width="14" height="2" fill="#000"/><rect x="4" y="14" width="2" height="2" fill="#6e6e6e"/><rect x="6" y="14" width="10" height="2" fill="#000"/><rect x="16" y="14" width="2" height="2" fill="#6e6e6e"/><rect x="6" y="16" width="2" height="2" fill="#6e6e6e"/><rect x="8" y="16" width="6" height="2" fill="#000"/><rect x="14" y="16" width="2" height="2" fill="#6e6e6e"/></svg><div style="left:813px;top:176px;width:22px;height:22px;background:#c6c6c6;"></div><svg style="position:absolute;left:813px;top:176px;shape-rendering:crispEdges" width="18" height="18" viewBox="0 0 18 18"><rect x="6" y="4" width="2" height="2" fill="#6e6e6e"/><rect x="8" y="4" width="6" height="2" fill="#000"/><rect x="14" y="4" width="2" height="2" fill="#6e6e6e"/><rect x="4" y="6" width="2" height="2" fill="#6e6e6e"/><rect x="6" y="6" width="10" height="2" fill="#000"/><rect x="16" y="6" width="2" height="2" fill="#6e6e6e"/><rect x="4" y="8" width="14" height="2" fill="#000"/><rect x="4" y="10" width="14" height="2" fill="#000"/><rect x="4" y="12" width="14" height="2" fill="#000"/><rect x="4" y="14" width="2" height="2" fill="#6e6e6e"/><rect x="6" y="14" width="10" height="2" fill="#000"/><rect x="16" y="14" width="2" height="2" fill="#6e6e6e"/><rect x="6" y="16" width="2" height="2" fill="#6e6e6e"/><rect x="8" y="16" width="6" height="2" fill="#000"/><rect x="14" y="16" width="2" height="2" fill="#6e6e6e"/></svg><div style="left:837px;top:176px;width:22px;height:22px;background:#c6c6c6;"></div><svg style="position:absolute;left:837px;top:176px;shape-rendering:crispEdges" width="18" height="18" viewBox="0 0 18 18"><rect x="6" y="4" width="2" height="2" fill="#6e6e6e"/><rect x="8" y="4" width="6" height="2" fill="#000"/><rect x="14" y="4" width="2" height="2" fill="#6e6e6e"/><rect x="4" y="6" width="2" height="2" fill="#6e6e6e"/><rect x="6" y="6" width="10" height="2" fill="#000"/><rect x="16" y="6" width="2" height="2" fill="#6e6e6e"/><rect x="4" y="8" width="14" height="2" fill="#000"/><rect x="4" y="10" width="14" height="2" fill="#000"/><rect x="4" y="12" width="14" height="2" fill="#000"/><rect x="4" y="14" width="2" height="2" fill="#6e6e6e"/><rect x="6" y="14" width="10" height="2" fill="#000"/><rect x="16" y="14" width="2" height="2" fill="#6e6e6e"/><rect x="6" y="16" width="2" height="2" fill="#6e6e6e"/><rect x="8" y="16" width="6" height="2" fill="#000"/><rect x="14" y="16" width="2" height="2" fill="#6e6e6e"/></svg><div style="left:861px;top:176px;width:22px;height:22px;background:#c6c6c6;"></div><svg style="position:absolute;left:861px;top:176px;shape-rendering:crispEdges" width="18" height="18" viewBox="0 0 18 18"><rect x="6" y="4" width="2" height="2" fill="#6e6e6e"/><rect x="8" y="4" width="6" height="2" fill="#000"/><rect x="14" y="4" width="2" height="2" fill="#6e6e6e"/><rect x="4" y="6" width="2" height="2" fill="#6e6e6e"/><rect x="6" y="6" width="10" height="2" fill="#000"/><rect x="16" y="6" width="2" height="2" fill="#6e6e6e"/><rect x="4" y="8" width="14" height="2" fill="#000"/><rect x="4" y="10" width="14" height="2" fill="#000"/><rect x="4" y="12" width="14" height="2" fill="#000"/><rect x="4" y="14" width="2" height="2" fill="#6e6e6e"/><rect x="6" y="14" width="10" height="2" fill="#000"/><rect x="16" y="14" width="2" height="2" fill="#6e6e6e"/><rect x="6" y="16" width="2" height="2" fill="#6e6e6e"/><rect x="8" y="16" width="6" height="2" fill="#000"/><rect x="14" y="16" width="2" height="2" fill="#6e6e6e"/></svg><div style="left:885px;top:176px;width:22px;height:22px;background:#c6c6c6;"></div><svg style="position:absolute;left:885px;top:176px;shape-rendering:crispEdges" width="18" height="18" viewBox="0 0 18 18"><rect x="6" y="4" width="2" height="2" fill="#6e6e6e"/><rect x="8" y="4" width="6" height="2" fill="#000"/><rect x="14" y="4" width="2" height="2" fill="#6e6e6e"/><rect x="4" y="6" width="2" height="2" fill="#6e6e6e"/><rect x="6" y="6" width="10" height="2" fill="#000"/><rect x="16" y="6" width="2" height="2" fill="#6e6e6e"/><rect x="4" y="8" width="14" height="2" fill="#000"/><rect x="4" y="10" width="14" height="2" fill="#000"/><rect x="4" y="12" width="14" height="2" fill="#000"/><rect x="4" y="14" width="2" height="2" fill="#6e6e6e"/><rect x="6" y="14" width="10" height="2" fill="#000"/><rect x="16" y="14" width="2" height="2" fill="#6e6e6e"/><rect x="6" y="16" width="2" height="2" fill="#6e6e6e"/><rect x="8" y="16" width="6" height="2" fill="#000"/><rect x="14" y="16" width="2" height="2" fill="#6e6e6e"/></svg><div style="left:909px;top:176px;width:22px;height:22px;background:#c6c6c6;"></div><svg style="position:absolute;left:909px;top:176px;shape-rendering:crispEdges" width="18" height="18" viewBox="0 0 18 18"><rect x="6" y="4" width="2" height="2" fill="#6e6e6e"/><rect x="8" y="4" width="6" height="2" fill="#000"/><rect x="14" y="4" width="2" height="2" fill="#6e6e6e"/><rect x="4" y="6" width="2" height="2" fill="#6e6e6e"/><rect x="6" y="6" width="10" height="2" fill="#000"/><rect x="16" y="6" width="2" height="2" fill="#6e6e6e"/><rect x="4" y="8" width="14" height="2" fill="#000"/><rect x="4" y="10" width="14" height="2" fill="#000"/><rect x="4" y="12" width="14" height="2" fill="#000"/><rect x="4" y="14" width="2" height="2" fill="#6e6e6e"/><rect x="6" y="14" width="10" height="2" fill="#000"/><rect x="16" y="14" width="2" height="2" fill="#6e6e6e"/><rect x="6" y="16" width="2" height="2" fill="#6e6e6e"/><rect x="8" y="16" width="6" height="2" fill="#000"/><rect x="14" y="16" width="2" height="2" fill="#6e6e6e"/></svg><div style="left:445px;top:200px;width:22px;height:22px;background:#c6c6c6;"></div><div style="left:469px;top:200px;width:22px;height:22px;background:#c6c6c6;"></div><div style="left:493px;top:200px;width:22px;height:22px;background:#c6c6c6;"></div><div style="left:517px;top:200px;width:174px;height:22px;background:#c6c6c6;"></div><svg style="position:absolute;left:445px;top:200px;shape-rendering:crispEdges" width="18" height="18" viewBox="0 0 18 18"><rect x="6" y="6" width="8" height="2" fill="#000"/><rect x="4" y="8" width="6" height="2" fill="#000"/><rect x="10" y="8" width="2" height="2" fill="#fff"/><rect x="12" y="8" width="4" height="2" fill="#000"/><rect x="2" y="10" width="2" height="2" fill="#000"/><rect x="4" y="10" width="2" height="2" fill="#e4e4e4"/><rect x="6" y="10" width="8" height="2" fill="#000"/><rect x="14" y="10" width="2" height="2" fill="#e4e4e4"/><rect x="16" y="10" width="2" height="2" fill="#000"/><rect x="2" y="12" width="2" height="2" fill="#000"/><rect x="4" y="12" width="4" height="2" fill="#e4e4e4"/><rect x="8" y="12" width="4" height="2" fill="#000"/><rect x="12" y="12" width="4" height="2" fill="#e4e4e4"/><rect x="16" y="12" width="2" height="2" fill="#000"/><rect x="4" y="14" width="2" height="2" fill="#000"/><rect x="6" y="14" width="8" height="2" fill="#e4e4e4"/><rect x="14" y="14" width="2" height="2" fill="#000"/><rect x="6" y="16" width="8" height="2" fill="#000"/></svg><svg style="position:absolute;left:469px;top:200px;shape-rendering:crispEdges" width="16" height="18" viewBox="0 0 16 18"><rect x="6" y="2" width="2" height="2" fill="#808080"/><rect x="8" y="2" width="4" height="2" fill="#000"/><rect x="12" y="2" width="2" height="2" fill="#808080"/><rect x="6" y="4" width="2" height="2" fill="#000"/><rect x="8" y="4" width="4" height="2" fill="#e4e4e4"/><rect x="12" y="4" width="2" height="2" fill="#000"/><rect x="6" y="6" width="2" height="2" fill="#000"/><rect x="8" y="6" width="6" height="2" fill="#e4e4e4"/><rect x="4" y="8" width="12" height="2" fill="#000"/><rect x="4" y="10" width="6" height="2" fill="#000"/><rect x="10" y="10" width="2" height="2" fill="#888888"/><rect x="12" y="10" width="4" height="2" fill="#000"/><rect x="4" y="12" width="6" height="2" fill="#000"/><rect x="10" y="12" width="2" height="2" fill="#888888"/><rect x="12" y="12" width="4" height="2" fill="#000"/><rect x="4" y="14" width="12" height="2" fill="#000"/><rect x="4" y="16" width="12" height="2" fill="#808080"/></svg><svg style="position:absolute;left:493px;top:200px;shape-rendering:crispEdges" width="20" height="16" viewBox="0 0 20 16"><rect x="4" y="6" width="4" height="2" fill="#000"/><rect x="14" y="6" width="4" height="2" fill="#000"/><rect x="2" y="8" width="8" height="2" fill="#000"/><rect x="12" y="8" width="8" height="2" fill="#000"/><rect x="2" y="10" width="8" height="2" fill="#000"/><rect x="12" y="10" width="8" height="2" fill="#000"/><rect x="2" y="12" width="2" height="2" fill="#808080"/><rect x="4" y="12" width="4" height="2" fill="#000"/><rect x="8" y="12" width="2" height="2" fill="#808080"/><rect x="12" y="12" width="2" height="2" fill="#808080"/><rect x="14" y="12" width="4" height="2" fill="#000"/><rect x="18" y="12" width="2" height="2" fill="#808080"/><rect x="4" y="14" width="4" height="2" fill="#808080"/><rect x="14" y="14" width="4" height="2" fill="#808080"/></svg><svg style="position:absolute;left:571px;top:204px;shape-rendering:crispEdges" width="66" height="14" viewBox="0 0 66 14"><g fill="#000"><rect x="0" y="0" width="2" height="2"/><rect x="60" y="0" width="2" height="2"/><rect x="0" y="2" width="2" height="2"/><rect x="12" y="2" width="4" height="2"/><rect x="20" y="2" width="2" height="2"/><rect x="26" y="2" width="2" height="2"/><rect x="32" y="2" width="4" height="2"/><rect x="40" y="2" width="2" height="2"/><rect x="44" y="2" width="2" height="2"/><rect x="58" y="2" width="2" height="2"/><rect x="0" y="4" width="2" height="2"/><rect x="16" y="4" width="2" height="2"/><rect x="20" y="4" width="2" height="2"/><rect x="26" y="4" width="2" height="2"/><rect x="30" y="4" width="2" height="2"/><rect x="36" y="4" width="2" height="2"/><rect x="40" y="4" width="4" height="2"/><rect x="56" y="4" width="2" height="2"/><rect x="60" y="4" width="2" height="2"/><rect x="0" y="6" width="2" height="2"/><rect x="12" y="6" width="6" height="2"/><rect x="20" y="6" width="2" height="2"/><rect x="26" y="6" width="2" height="2"/><rect x="30" y="6" width="8" height="2"/><rect x="40" y="6" width="2" height="2"/><rect x="56" y="6" width="8" height="2"/><rect x="0" y="8" width="2" height="2"/><rect x="10" y="8" width="2" height="2"/><rect x="16" y="8" width="2" height="2"/><rect x="22" y="8" width="6" height="2"/><rect x="30" y="8" width="2" height="2"/><rect x="40" y="8" width="2" height="2"/><rect x="60" y="8" width="2" height="2"/><rect x="0" y="10" width="8" height="2"/><rect x="12" y="10" width="6" height="2"/><rect x="26" y="10" width="2" height="2"/><rect x="32" y="10" width="4" height="2"/><rect x="40" y="10" width="2" height="2"/><rect x="60" y="10" width="2" height="2"/><rect x="22" y="12" width="4" height="2"/></g></svg><div style="left:693px;top:200px;width:22px;height:22px;background:#7d929e;"></div><svg style="position:absolute;left:693px;top:200px;shape-rendering:crispEdges" width="18" height="18" viewBox="0 0 18 18"><rect x="8" y="4" width="6" height="2" fill="#66777f"/><rect x="6" y="6" width="2" height="2" fill="#66777f"/><rect x="14" y="6" width="2" height="2" fill="#66777f"/><rect x="4" y="8" width="2" height="2" fill="#66777f"/><rect x="16" y="8" width="2" height="2" fill="#66777f"/><rect x="4" y="10" width="2" height="2" fill="#66777f"/><rect x="16" y="10" width="2" height="2" fill="#66777f"/><rect x="4" y="12" width="2" height="2" fill="#66777f"/><rect x="16" y="12" width="2" height="2" fill="#66777f"/><rect x="6" y="14" width="2" height="2" fill="#66777f"/><rect x="14" y="14" width="2" height="2" fill="#66777f"/><rect x="8" y="16" width="6" height="2" fill="#66777f"/></svg><div style="left:717px;top:200px;width:22px;height:22px;background:#c6c6c6;"></div><svg style="position:absolute;left:717px;top:200px;shape-rendering:crispEdges" width="18" height="18" viewBox="0 0 18 18"><rect x="8" y="4" width="6" height="2" fill="#9e9e9e"/><rect x="6" y="6" width="2" height="2" fill="#9e9e9e"/><rect x="14" y="6" width="2" height="2" fill="#9e9e9e"/><rect x="4" y="8" width="2" height="2" fill="#9e9e9e"/><rect x="16" y="8" width="2" height="2" fill="#9e9e9e"/><rect x="4" y="10" width="2" height="2" fill="#9e9e9e"/><rect x="16" y="10" width="2" height="2" fill="#9e9e9e"/><rect x="4" y="12" width="2" height="2" fill="#9e9e9e"/><rect x="16" y="12" width="2" height="2" fill="#9e9e9e"/><rect x="6" y="14" width="2" height="2" fill="#9e9e9e"/><rect x="14" y="14" width="2" height="2" fill="#9e9e9e"/><rect x="8" y="16" width="6" height="2" fill="#9e9e9e"/></svg><div style="left:741px;top:200px;width:22px;height:22px;background:#c6c6c6;"></div><svg style="position:absolute;left:741px;top:200px;shape-rendering:crispEdges" width="18" height="18" viewBox="0 0 18 18"><rect x="8" y="4" width="6" height="2" fill="#9e9e9e"/><rect x="6" y="6" width="2" height="2" fill="#9e9e9e"/><rect x="14" y="6" width="2" height="2" fill="#9e9e9e"/><rect x="4" y="8" width="2" height="2" fill="#9e9e9e"/><rect x="16" y="8" width="2" height="2" fill="#9e9e9e"/><rect x="4" y="10" width="2" height="2" fill="#9e9e9e"/><rect x="16" y="10" width="2" height="2" fill="#9e9e9e"/><rect x="4" y="12" width="2" height="2" fill="#9e9e9e"/><rect x="16" y="12" width="2" height="2" fill="#9e9e9e"/><rect x="6" y="14" width="2" height="2" fill="#9e9e9e"/><rect x="14" y="14" width="2" height="2" fill="#9e9e9e"/><rect x="8" y="16" width="6" height="2" fill="#9e9e9e"/></svg><div style="left:765px;top:200px;width:22px;height:22px;background:#c6c6c6;"></div><svg style="position:absolute;left:765px;top:200px;shape-rendering:crispEdges" width="18" height="18" viewBox="0 0 18 18"><rect x="8" y="4" width="6" height="2" fill="#9e9e9e"/><rect x="6" y="6" width="2" height="2" fill="#9e9e9e"/><rect x="14" y="6" width="2" height="2" fill="#9e9e9e"/><rect x="4" y="8" width="2" height="2" fill="#9e9e9e"/><rect x="16" y="8" width="2" height="2" fill="#9e9e9e"/><rect x="4" y="10" width="2" height="2" fill="#9e9e9e"/><rect x="16" y="10" width="2" height="2" fill="#9e9e9e"/><rect x="4" y="12" width="2" height="2" fill="#9e9e9e"/><rect x="16" y="12" width="2" height="2" fill="#9e9e9e"/><rect x="6" y="14" width="2" height="2" fill="#9e9e9e"/><rect x="14" y="14" width="2" height="2" fill="#9e9e9e"/><rect x="8" y="16" width="6" height="2" fill="#9e9e9e"/></svg><div style="left:789px;top:200px;width:22px;height:22px;background:#c6c6c6;"></div><svg style="position:absolute;left:789px;top:200px;shape-rendering:crispEdges" width="18" height="18" viewBox="0 0 18 18"><rect x="8" y="4" width="6" height="2" fill="#9e9e9e"/><rect x="6" y="6" width="2" height="2" fill="#9e9e9e"/><rect x="14" y="6" width="2" height="2" fill="#9e9e9e"/><rect x="4" y="8" width="2" height="2" fill="#9e9e9e"/><rect x="16" y="8" width="2" height="2" fill="#9e9e9e"/><rect x="4" y="10" width="2" height="2" fill="#9e9e9e"/><rect x="16" y="10" width="2" height="2" fill="#9e9e9e"/><rect x="4" y="12" width="2" height="2" fill="#9e9e9e"/><rect x="16" y="12" width="2" height="2" fill="#9e9e9e"/><rect x="6" y="14" width="2" height="2" fill="#9e9e9e"/><rect x="14" y="14" width="2" height="2" fill="#9e9e9e"/><rect x="8" y="16" width="6" height="2" fill="#9e9e9e"/></svg><div style="left:813px;top:200px;width:22px;height:22px;background:#c6c6c6;"></div><svg style="position:absolute;left:813px;top:200px;shape-rendering:crispEdges" width="18" height="18" viewBox="0 0 18 18"><rect x="8" y="4" width="6" height="2" fill="#9e9e9e"/><rect x="6" y="6" width="2" height="2" fill="#9e9e9e"/><rect x="14" y="6" width="2" height="2" fill="#9e9e9e"/><rect x="4" y="8" width="2" height="2" fill="#9e9e9e"/><rect x="16" y="8" width="2" height="2" fill="#9e9e9e"/><rect x="4" y="10" width="2" height="2" fill="#9e9e9e"/><rect x="16" y="10" width="2" height="2" fill="#9e9e9e"/><rect x="4" y="12" width="2" height="2" fill="#9e9e9e"/><rect x="16" y="12" width="2" height="2" fill="#9e9e9e"/><rect x="6" y="14" width="2" height="2" fill="#9e9e9e"/><rect x="14" y="14" width="2" height="2" fill="#9e9e9e"/><rect x="8" y="16" width="6" height="2" fill="#9e9e9e"/></svg><div style="left:837px;top:200px;width:22px;height:22px;background:#c6c6c6;"></div><svg style="position:absolute;left:837px;top:200px;shape-rendering:crispEdges" width="18" height="18" viewBox="0 0 18 18"><rect x="8" y="4" width="6" height="2" fill="#9e9e9e"/><rect x="6" y="6" width="2" height="2" fill="#9e9e9e"/><rect x="14" y="6" width="2" height="2" fill="#9e9e9e"/><rect x="4" y="8" width="2" height="2" fill="#9e9e9e"/><rect x="16" y="8" width="2" height="2" fill="#9e9e9e"/><rect x="4" y="10" width="2" height="2" fill="#9e9e9e"/><rect x="16" y="10" width="2" height="2" fill="#9e9e9e"/><rect x="4" y="12" width="2" height="2" fill="#9e9e9e"/><rect x="16" y="12" width="2" height="2" fill="#9e9e9e"/><rect x="6" y="14" width="2" height="2" fill="#9e9e9e"/><rect x="14" y="14" width="2" height="2" fill="#9e9e9e"/><rect x="8" y="16" width="6" height="2" fill="#9e9e9e"/></svg><div style="left:861px;top:200px;width:22px;height:22px;background:#c6c6c6;"></div><svg style="position:absolute;left:861px;top:200px;shape-rendering:crispEdges" width="18" height="18" viewBox="0 0 18 18"><rect x="8" y="4" width="6" height="2" fill="#9e9e9e"/><rect x="6" y="6" width="2" height="2" fill="#9e9e9e"/><rect x="14" y="6" width="2" height="2" fill="#9e9e9e"/><rect x="4" y="8" width="2" height="2" fill="#9e9e9e"/><rect x="16" y="8" width="2" height="2" fill="#9e9e9e"/><rect x="4" y="10" width="2" height="2" fill="#9e9e9e"/><rect x="16" y="10" width="2" height="2" fill="#9e9e9e"/><rect x="4" y="12" width="2" height="2" fill="#9e9e9e"/><rect x="16" y="12" width="2" height="2" fill="#9e9e9e"/><rect x="6" y="14" width="2" height="2" fill="#9e9e9e"/><rect x="14" y="14" width="2" height="2" fill="#9e9e9e"/><rect x="8" y="16" width="6" height="2" fill="#9e9e9e"/></svg><div style="left:885px;top:200px;width:22px;height:22px;background:#c6c6c6;"></div><svg style="position:absolute;left:885px;top:200px;shape-rendering:crispEdges" width="18" height="18" viewBox="0 0 18 18"><rect x="8" y="4" width="6" height="2" fill="#9e9e9e"/><rect x="6" y="6" width="2" height="2" fill="#9e9e9e"/><rect x="14" y="6" width="2" height="2" fill="#9e9e9e"/><rect x="4" y="8" width="2" height="2" fill="#9e9e9e"/><rect x="16" y="8" width="2" height="2" fill="#9e9e9e"/><rect x="4" y="10" width="2" height="2" fill="#9e9e9e"/><rect x="16" y="10" width="2" height="2" fill="#9e9e9e"/><rect x="4" y="12" width="2" height="2" fill="#9e9e9e"/><rect x="16" y="12" width="2" height="2" fill="#9e9e9e"/><rect x="6" y="14" width="2" height="2" fill="#9e9e9e"/><rect x="14" y="14" width="2" height="2" fill="#9e9e9e"/><rect x="8" y="16" width="6" height="2" fill="#9e9e9e"/></svg><div style="left:909px;top:200px;width:22px;height:22px;background:#c6c6c6;"></div><svg style="position:absolute;left:909px;top:200px;shape-rendering:crispEdges" width="18" height="18" viewBox="0 0 18 18"><rect x="8" y="4" width="6" height="2" fill="#9e9e9e"/><rect x="6" y="6" width="2" height="2" fill="#9e9e9e"/><rect x="14" y="6" width="2" height="2" fill="#9e9e9e"/><rect x="4" y="8" width="2" height="2" fill="#9e9e9e"/><rect x="16" y="8" width="2" height="2" fill="#9e9e9e"/><rect x="4" y="10" width="2" height="2" fill="#9e9e9e"/><rect x="16" y="10" width="2" height="2" fill="#9e9e9e"/><rect x="4" y="12" width="2" height="2" fill="#9e9e9e"/><rect x="16" y="12" width="2" height="2" fill="#9e9e9e"/><rect x="6" y="14" width="2" height="2" fill="#9e9e9e"/><rect x="14" y="14" width="2" height="2" fill="#9e9e9e"/><rect x="8" y="16" width="6" height="2" fill="#9e9e9e"/></svg><div style="left:445px;top:224px;width:22px;height:22px;background:#c6c6c6;"></div><div style="left:469px;top:224px;width:22px;height:22px;background:#c6c6c6;"></div><div style="left:493px;top:224px;width:22px;height:22px;background:#c6c6c6;"></div><div style="left:517px;top:224px;width:174px;height:22px;background:#c6c6c6;"></div><svg style="position:absolute;left:445px;top:224px;shape-rendering:crispEdges" width="18" height="18" viewBox="0 0 18 18"><rect x="6" y="6" width="8" height="2" fill="#000"/><rect x="4" y="8" width="6" height="2" fill="#000"/><rect x="10" y="8" width="2" height="2" fill="#fff"/><rect x="12" y="8" width="4" height="2" fill="#000"/><rect x="2" y="10" width="2" height="2" fill="#000"/><rect x="4" y="10" width="2" height="2" fill="#e4e4e4"/><rect x="6" y="10" width="8" height="2" fill="#000"/><rect x="14" y="10" width="2" height="2" fill="#e4e4e4"/><rect x="16" y="10" width="2" height="2" fill="#000"/><rect x="2" y="12" width="2" height="2" fill="#000"/><rect x="4" y="12" width="4" height="2" fill="#e4e4e4"/><rect x="8" y="12" width="4" height="2" fill="#000"/><rect x="12" y="12" width="4" height="2" fill="#e4e4e4"/><rect x="16" y="12" width="2" height="2" fill="#000"/><rect x="4" y="14" width="2" height="2" fill="#000"/><rect x="6" y="14" width="8" height="2" fill="#e4e4e4"/><rect x="14" y="14" width="2" height="2" fill="#000"/><rect x="6" y="16" width="8" height="2" fill="#000"/></svg><svg style="position:absolute;left:469px;top:224px;shape-rendering:crispEdges" width="16" height="18" viewBox="0 0 16 18"><rect x="6" y="2" width="2" height="2" fill="#808080"/><rect x="8" y="2" width="4" height="2" fill="#000"/><rect x="12" y="2" width="2" height="2" fill="#808080"/><rect x="6" y="4" width="2" height="2" fill="#000"/><rect x="8" y="4" width="4" height="2" fill="#e4e4e4"/><rect x="12" y="4" width="2" height="2" fill="#000"/><rect x="6" y="6" width="2" height="2" fill="#000"/><rect x="8" y="6" width="6" height="2" fill="#e4e4e4"/><rect x="4" y="8" width="12" height="2" fill="#000"/><rect x="4" y="10" width="6" height="2" fill="#000"/><rect x="10" y="10" width="2" height="2" fill="#888888"/><rect x="12" y="10" width="4" height="2" fill="#000"/><rect x="4" y="12" width="6" height="2" fill="#000"/><rect x="10" y="12" width="2" height="2" fill="#888888"/><rect x="12" y="12" width="4" height="2" fill="#000"/><rect x="4" y="14" width="12" height="2" fill="#000"/><rect x="4" y="16" width="12" height="2" fill="#808080"/></svg><svg style="position:absolute;left:493px;top:224px;shape-rendering:crispEdges" width="20" height="16" viewBox="0 0 20 16"><rect x="4" y="6" width="4" height="2" fill="#000"/><rect x="14" y="6" width="4" height="2" fill="#000"/><rect x="2" y="8" width="8" height="2" fill="#000"/><rect x="12" y="8" width="8" height="2" fill="#000"/><rect x="2" y="10" width="8" height="2" fill="#000"/><rect x="12" y="10" width="8" height="2" fill="#000"/><rect x="2" y="12" width="2" height="2" fill="#808080"/><rect x="4" y="12" width="4" height="2" fill="#000"/><rect x="8" y="12" width="2" height="2" fill="#808080"/><rect x="12" y="12" width="2" height="2" fill="#808080"/><rect x="14" y="12" width="4" height="2" fill="#000"/><rect x="18" y="12" width="2" height="2" fill="#808080"/><rect x="4" y="14" width="4" height="2" fill="#808080"/><rect x="14" y="14" width="4" height="2" fill="#808080"/></svg><svg style="position:absolute;left:547px;top:228px;shape-rendering:crispEdges" width="66" height="14" viewBox="0 0 66 14"><g fill="#000"><rect x="0" y="0" width="2" height="2"/><rect x="56" y="0" width="6" height="2"/><rect x="0" y="2" width="2" height="2"/><rect x="12" y="2" width="4" height="2"/><rect x="20" y="2" width="2" height="2"/><rect x="26" y="2" width="2" height="2"/><rect x="32" y="2" width="4" height="2"/><rect x="40" y="2" width="2" height="2"/><rect x="44" y="2" width="2" height="2"/><rect x="62" y="2" width="2" height="2"/><rect x="0" y="4" width="2" height="2"/><rect x="16" y="4" width="2" height="2"/><rect x="20" y="4" width="2" height="2"/><rect x="26" y="4" width="2" height="2"/><rect x="30" y="4" width="2" height="2"/><rect x="36" y="4" width="2" height="2"/><rect x="40" y="4" width="4" height="2"/><rect x="58" y="4" width="4" height="2"/><rect x="0" y="6" width="2" height="2"/><rect x="12" y="6" width="6" height="2"/><rect x="20" y="6" width="2" height="2"/><rect x="26" y="6" width="2" height="2"/><rect x="30" y="6" width="8" height="2"/><rect x="40" y="6" width="2" height="2"/><rect x="62" y="6" width="2" height="2"/><rect x="0" y="8" width="2" height="2"/><rect x="10" y="8" width="2" height="2"/><rect x="16" y="8" width="2" height="2"/><rect x="22" y="8" width="6" height="2"/><rect x="30" y="8" width="2" height="2"/><rect x="40" y="8" width="2" height="2"/><rect x="62" y="8" width="2" height="2"/><rect x="0" y="10" width="8" height="2"/><rect x="12" y="10" width="6" height="2"/><rect x="26" y="10" width="2" height="2"/><rect x="32" y="10" width="4" height="2"/><rect x="40" y="10" width="2" height="2"/><rect x="56" y="10" width="6" height="2"/><rect x="22" y="12" width="4" height="2"/></g></svg><div style="left:693px;top:224px;width:22px;height:22px;background:#7d929e;"></div><svg style="position:absolute;left:693px;top:224px;shape-rendering:crispEdges" width="18" height="18" viewBox="0 0 18 18"><rect x="8" y="4" width="6" height="2" fill="#66777f"/><rect x="6" y="6" width="2" height="2" fill="#66777f"/><rect x="14" y="6" width="2" height="2" fill="#66777f"/><rect x="4" y="8" width="2" height="2" fill="#66777f"/><rect x="16" y="8" width="2" height="2" fill="#66777f"/><rect x="4" y="10" width="2" height="2" fill="#66777f"/><rect x="16" y="10" width="2" height="2" fill="#66777f"/><rect x="4" y="12" width="2" height="2" fill="#66777f"/><rect x="16" y="12" width="2" height="2" fill="#66777f"/><rect x="6" y="14" width="2" height="2" fill="#66777f"/><rect x="14" y="14" width="2" height="2" fill="#66777f"/><rect x="8" y="16" width="6" height="2" fill="#66777f"/></svg><div style="left:717px;top:224px;width:22px;height:22px;background:#c6c6c6;"></div><svg style="position:absolute;left:717px;top:224px;shape-rendering:crispEdges" width="18" height="18" viewBox="0 0 18 18"><rect x="8" y="4" width="6" height="2" fill="#9e9e9e"/><rect x="6" y="6" width="2" height="2" fill="#9e9e9e"/><rect x="14" y="6" width="2" height="2" fill="#9e9e9e"/><rect x="4" y="8" width="2" height="2" fill="#9e9e9e"/><rect x="16" y="8" width="2" height="2" fill="#9e9e9e"/><rect x="4" y="10" width="2" height="2" fill="#9e9e9e"/><rect x="16" y="10" width="2" height="2" fill="#9e9e9e"/><rect x="4" y="12" width="2" height="2" fill="#9e9e9e"/><rect x="16" y="12" width="2" height="2" fill="#9e9e9e"/><rect x="6" y="14" width="2" height="2" fill="#9e9e9e"/><rect x="14" y="14" width="2" height="2" fill="#9e9e9e"/><rect x="8" y="16" width="6" height="2" fill="#9e9e9e"/></svg><div style="left:741px;top:224px;width:22px;height:22px;background:#c6c6c6;"></div><svg style="position:absolute;left:741px;top:224px;shape-rendering:crispEdges" width="18" height="18" viewBox="0 0 18 18"><rect x="8" y="4" width="6" height="2" fill="#9e9e9e"/><rect x="6" y="6" width="2" height="2" fill="#9e9e9e"/><rect x="14" y="6" width="2" height="2" fill="#9e9e9e"/><rect x="4" y="8" width="2" height="2" fill="#9e9e9e"/><rect x="16" y="8" width="2" height="2" fill="#9e9e9e"/><rect x="4" y="10" width="2" height="2" fill="#9e9e9e"/><rect x="16" y="10" width="2" height="2" fill="#9e9e9e"/><rect x="4" y="12" width="2" height="2" fill="#9e9e9e"/><rect x="16" y="12" width="2" height="2" fill="#9e9e9e"/><rect x="6" y="14" width="2" height="2" fill="#9e9e9e"/><rect x="14" y="14" width="2" height="2" fill="#9e9e9e"/><rect x="8" y="16" width="6" height="2" fill="#9e9e9e"/></svg><div style="left:765px;top:224px;width:22px;height:22px;background:#c6c6c6;"></div><svg style="position:absolute;left:765px;top:224px;shape-rendering:crispEdges" width="18" height="18" viewBox="0 0 18 18"><rect x="8" y="4" width="6" height="2" fill="#9e9e9e"/><rect x="6" y="6" width="2" height="2" fill="#9e9e9e"/><rect x="14" y="6" width="2" height="2" fill="#9e9e9e"/><rect x="4" y="8" width="2" height="2" fill="#9e9e9e"/><rect x="16" y="8" width="2" height="2" fill="#9e9e9e"/><rect x="4" y="10" width="2" height="2" fill="#9e9e9e"/><rect x="16" y="10" width="2" height="2" fill="#9e9e9e"/><rect x="4" y="12" width="2" height="2" fill="#9e9e9e"/><rect x="16" y="12" width="2" height="2" fill="#9e9e9e"/><rect x="6" y="14" width="2" height="2" fill="#9e9e9e"/><rect x="14" y="14" width="2" height="2" fill="#9e9e9e"/><rect x="8" y="16" width="6" height="2" fill="#9e9e9e"/></svg><div style="left:789px;top:224px;width:22px;height:22px;background:#c6c6c6;"></div><svg style="position:absolute;left:789px;top:224px;shape-rendering:crispEdges" width="18" height="18" viewBox="0 0 18 18"><rect x="8" y="4" width="6" height="2" fill="#9e9e9e"/><rect x="6" y="6" width="2" height="2" fill="#9e9e9e"/><rect x="14" y="6" width="2" height="2" fill="#9e9e9e"/><rect x="4" y="8" width="2" height="2" fill="#9e9e9e"/><rect x="16" y="8" width="2" height="2" fill="#9e9e9e"/><rect x="4" y="10" width="2" height="2" fill="#9e9e9e"/><rect x="16" y="10" width="2" height="2" fill="#9e9e9e"/><rect x="4" y="12" width="2" height="2" fill="#9e9e9e"/><rect x="16" y="12" width="2" height="2" fill="#9e9e9e"/><rect x="6" y="14" width="2" height="2" fill="#9e9e9e"/><rect x="14" y="14" width="2" height="2" fill="#9e9e9e"/><rect x="8" y="16" width="6" height="2" fill="#9e9e9e"/></svg><div style="left:813px;top:224px;width:22px;height:22px;background:#c6c6c6;"></div><svg style="position:absolute;left:813px;top:224px;shape-rendering:crispEdges" width="18" height="18" viewBox="0 0 18 18"><rect x="8" y="4" width="6" height="2" fill="#9e9e9e"/><rect x="6" y="6" width="2" height="2" fill="#9e9e9e"/><rect x="14" y="6" width="2" height="2" fill="#9e9e9e"/><rect x="4" y="8" width="2" height="2" fill="#9e9e9e"/><rect x="16" y="8" width="2" height="2" fill="#9e9e9e"/><rect x="4" y="10" width="2" height="2" fill="#9e9e9e"/><rect x="16" y="10" width="2" height="2" fill="#9e9e9e"/><rect x="4" y="12" width="2" height="2" fill="#9e9e9e"/><rect x="16" y="12" width="2" height="2" fill="#9e9e9e"/><rect x="6" y="14" width="2" height="2" fill="#9e9e9e"/><rect x="14" y="14" width="2" height="2" fill="#9e9e9e"/><rect x="8" y="16" width="6" height="2" fill="#9e9e9e"/></svg><div style="left:837px;top:224px;width:22px;height:22px;background:#c6c6c6;"></div><svg style="position:absolute;left:837px;top:224px;shape-rendering:crispEdges" width="18" height="18" viewBox="0 0 18 18"><rect x="8" y="4" width="6" height="2" fill="#9e9e9e"/><rect x="6" y="6" width="2" height="2" fill="#9e9e9e"/><rect x="14" y="6" width="2" height="2" fill="#9e9e9e"/><rect x="4" y="8" width="2" height="2" fill="#9e9e9e"/><rect x="16" y="8" width="2" height="2" fill="#9e9e9e"/><rect x="4" y="10" width="2" height="2" fill="#9e9e9e"/><rect x="16" y="10" width="2" height="2" fill="#9e9e9e"/><rect x="4" y="12" width="2" height="2" fill="#9e9e9e"/><rect x="16" y="12" width="2" height="2" fill="#9e9e9e"/><rect x="6" y="14" width="2" height="2" fill="#9e9e9e"/><rect x="14" y="14" width="2" height="2" fill="#9e9e9e"/><rect x="8" y="16" width="6" height="2" fill="#9e9e9e"/></svg><div style="left:861px;top:224px;width:22px;height:22px;background:#c6c6c6;"></div><svg style="position:absolute;left:861px;top:224px;shape-rendering:crispEdges" width="18" height="18" viewBox="0 0 18 18"><rect x="8" y="4" width="6" height="2" fill="#9e9e9e"/><rect x="6" y="6" width="2" height="2" fill="#9e9e9e"/><rect x="14" y="6" width="2" height="2" fill="#9e9e9e"/><rect x="4" y="8" width="2" height="2" fill="#9e9e9e"/><rect x="16" y="8" width="2" height="2" fill="#9e9e9e"/><rect x="4" y="10" width="2" height="2" fill="#9e9e9e"/><rect x="16" y="10" width="2" height="2" fill="#9e9e9e"/><rect x="4" y="12" width="2" height="2" fill="#9e9e9e"/><rect x="16" y="12" width="2" height="2" fill="#9e9e9e"/><rect x="6" y="14" width="2" height="2" fill="#9e9e9e"/><rect x="14" y="14" width="2" height="2" fill="#9e9e9e"/><rect x="8" y="16" width="6" height="2" fill="#9e9e9e"/></svg><div style="left:885px;top:224px;width:22px;height:22px;background:#c6c6c6;"></div><svg style="position:absolute;left:885px;top:224px;shape-rendering:crispEdges" width="18" height="18" viewBox="0 0 18 18"><rect x="8" y="4" width="6" height="2" fill="#9e9e9e"/><rect x="6" y="6" width="2" height="2" fill="#9e9e9e"/><rect x="14" y="6" width="2" height="2" fill="#9e9e9e"/><rect x="4" y="8" width="2" height="2" fill="#9e9e9e"/><rect x="16" y="8" width="2" height="2" fill="#9e9e9e"/><rect x="4" y="10" width="2" height="2" fill="#9e9e9e"/><rect x="16" y="10" width="2" height="2" fill="#9e9e9e"/><rect x="4" y="12" width="2" height="2" fill="#9e9e9e"/><rect x="16" y="12" width="2" height="2" fill="#9e9e9e"/><rect x="6" y="14" width="2" height="2" fill="#9e9e9e"/><rect x="14" y="14" width="2" height="2" fill="#9e9e9e"/><rect x="8" y="16" width="6" height="2" fill="#9e9e9e"/></svg><div style="left:909px;top:224px;width:22px;height:22px;background:#c6c6c6;"></div><svg style="position:absolute;left:909px;top:224px;shape-rendering:crispEdges" width="18" height="18" viewBox="0 0 18 18"><rect x="8" y="4" width="6" height="2" fill="#9e9e9e"/><rect x="6" y="6" width="2" height="2" fill="#9e9e9e"/><rect x="14" y="6" width="2" height="2" fill="#9e9e9e"/><rect x="4" y="8" width="2" height="2" fill="#9e9e9e"/><rect x="16" y="8" width="2" height="2" fill="#9e9e9e"/><rect x="4" y="10" width="2" height="2" fill="#9e9e9e"/><rect x="16" y="10" width="2" height="2" fill="#9e9e9e"/><rect x="4" y="12" width="2" height="2" fill="#9e9e9e"/><rect x="16" y="12" width="2" height="2" fill="#9e9e9e"/><rect x="6" y="14" width="2" height="2" fill="#9e9e9e"/><rect x="14" y="14" width="2" height="2" fill="#9e9e9e"/><rect x="8" y="16" width="6" height="2" fill="#9e9e9e"/></svg><div style="left:445px;top:248px;width:22px;height:22px;background:#c6c6c6;"></div><div style="left:469px;top:248px;width:22px;height:22px;background:#c6c6c6;"></div><div style="left:493px;top:248px;width:22px;height:22px;background:#c6c6c6;"></div><div style="left:517px;top:248px;width:174px;height:22px;background:#c6c6c6;"></div><svg style="position:absolute;left:445px;top:248px;shape-rendering:crispEdges" width="18" height="18" viewBox="0 0 18 18"><rect x="6" y="6" width="8" height="2" fill="#000"/><rect x="4" y="8" width="6" height="2" fill="#000"/><rect x="10" y="8" width="2" height="2" fill="#fff"/><rect x="12" y="8" width="4" height="2" fill="#000"/><rect x="2" y="10" width="2" height="2" fill="#000"/><rect x="4" y="10" width="2" height="2" fill="#e4e4e4"/><rect x="6" y="10" width="8" height="2" fill="#000"/><rect x="14" y="10" width="2" height="2" fill="#e4e4e4"/><rect x="16" y="10" width="2" height="2" fill="#000"/><rect x="2" y="12" width="2" height="2" fill="#000"/><rect x="4" y="12" width="4" height="2" fill="#e4e4e4"/><rect x="8" y="12" width="4" height="2" fill="#000"/><rect x="12" y="12" width="4" height="2" fill="#e4e4e4"/><rect x="16" y="12" width="2" height="2" fill="#000"/><rect x="4" y="14" width="2" height="2" fill="#000"/><rect x="6" y="14" width="8" height="2" fill="#e4e4e4"/><rect x="14" y="14" width="2" height="2" fill="#000"/><rect x="6" y="16" width="8" height="2" fill="#000"/></svg><svg style="position:absolute;left:469px;top:248px;shape-rendering:crispEdges" width="16" height="18" viewBox="0 0 16 18"><rect x="6" y="2" width="2" height="2" fill="#808080"/><rect x="8" y="2" width="4" height="2" fill="#000"/><rect x="12" y="2" width="2" height="2" fill="#808080"/><rect x="6" y="4" width="2" height="2" fill="#000"/><rect x="8" y="4" width="4" height="2" fill="#e4e4e4"/><rect x="12" y="4" width="2" height="2" fill="#000"/><rect x="6" y="6" width="2" height="2" fill="#000"/><rect x="8" y="6" width="6" height="2" fill="#e4e4e4"/><rect x="4" y="8" width="12" height="2" fill="#000"/><rect x="4" y="10" width="6" height="2" fill="#000"/><rect x="10" y="10" width="2" height="2" fill="#888888"/><rect x="12" y="10" width="4" height="2" fill="#000"/><rect x="4" y="12" width="6" height="2" fill="#000"/><rect x="10" y="12" width="2" height="2" fill="#888888"/><rect x="12" y="12" width="4" height="2" fill="#000"/><rect x="4" y="14" width="12" height="2" fill="#000"/><rect x="4" y="16" width="12" height="2" fill="#808080"/></svg><svg style="position:absolute;left:493px;top:248px;shape-rendering:crispEdges" width="22" height="18" viewBox="0 0 22 18"><rect x="2" y="4" width="12" height="2" fill="#808080"/><rect x="2" y="6" width="4" height="2" fill="#808080"/><rect x="6" y="6" width="8" height="2" fill="#000"/><rect x="14" y="6" width="2" height="2" fill="#808080"/><rect x="2" y="8" width="2" height="2" fill="#808080"/><rect x="4" y="8" width="18" height="2" fill="#000"/><rect x="2" y="10" width="2" height="2" fill="#808080"/><rect x="4" y="10" width="18" height="2" fill="#000"/><rect x="2" y="12" width="18" height="2" fill="#000"/><rect x="2" y="14" width="18" height="2" fill="#000"/><rect x="2" y="16" width="18" height="2" fill="#808080"/></svg><svg style="position:absolute;left:547px;top:252px;shape-rendering:crispEdges" width="66" height="14" viewBox="0 0 66 14"><g fill="#000"><rect x="2" y="0" width="6" height="2"/><rect x="56" y="0" width="6" height="2"/><rect x="0" y="2" width="2" height="2"/><rect x="10" y="2" width="2" height="2"/><rect x="14" y="2" width="2" height="2"/><rect x="20" y="2" width="4" height="2"/><rect x="28" y="2" width="2" height="2"/><rect x="34" y="2" width="2" height="2"/><rect x="38" y="2" width="6" height="2"/><rect x="62" y="2" width="2" height="2"/><rect x="0" y="4" width="2" height="2"/><rect x="4" y="4" width="4" height="2"/><rect x="10" y="4" width="4" height="2"/><rect x="18" y="4" width="2" height="2"/><rect x="24" y="4" width="2" height="2"/><rect x="28" y="4" width="2" height="2"/><rect x="34" y="4" width="2" height="2"/><rect x="38" y="4" width="2" height="2"/><rect x="44" y="4" width="2" height="2"/><rect x="62" y="4" width="2" height="2"/><rect x="0" y="6" width="2" height="2"/><rect x="6" y="6" width="2" height="2"/><rect x="10" y="6" width="2" height="2"/><rect x="18" y="6" width="2" height="2"/><rect x="24" y="6" width="2" height="2"/><rect x="28" y="6" width="2" height="2"/><rect x="34" y="6" width="2" height="2"/><rect x="38" y="6" width="2" height="2"/><rect x="44" y="6" width="2" height="2"/><rect x="58" y="6" width="4" height="2"/><rect x="0" y="8" width="2" height="2"/><rect x="6" y="8" width="2" height="2"/><rect x="10" y="8" width="2" height="2"/><rect x="18" y="8" width="2" height="2"/><rect x="24" y="8" width="2" height="2"/><rect x="28" y="8" width="2" height="2"/><rect x="34" y="8" width="2" height="2"/><rect x="38" y="8" width="6" height="2"/><rect x="56" y="8" width="2" height="2"/><rect x="2" y="10" width="6" height="2"/><rect x="10" y="10" width="2" height="2"/><rect x="20" y="10" width="4" height="2"/><rect x="30" y="10" width="6" height="2"/><rect x="38" y="10" width="2" height="2"/><rect x="56" y="10" width="8" height="2"/><rect x="38" y="12" width="2" height="2"/></g></svg><div style="left:693px;top:248px;width:22px;height:22px;background:#7d929e;"></div><svg style="position:absolute;left:693px;top:248px;shape-rendering:crispEdges" width="18" height="18" viewBox="0 0 18 18"><rect x="8" y="4" width="6" height="2" fill="#66777f"/><rect x="6" y="6" width="2" height="2" fill="#66777f"/><rect x="14" y="6" width="2" height="2" fill="#66777f"/><rect x="4" y="8" width="2" height="2" fill="#66777f"/><rect x="16" y="8" width="2" height="2" fill="#66777f"/><rect x="4" y="10" width="2" height="2" fill="#66777f"/><rect x="16" y="10" width="2" height="2" fill="#66777f"/><rect x="4" y="12" width="2" height="2" fill="#66777f"/><rect x="16" y="12" width="2" height="2" fill="#66777f"/><rect x="6" y="14" width="2" height="2" fill="#66777f"/><rect x="14" y="14" width="2" height="2" fill="#66777f"/><rect x="8" y="16" width="6" height="2" fill="#66777f"/></svg><div style="left:717px;top:248px;width:22px;height:22px;background:#c6c6c6;"></div><svg style="position:absolute;left:717px;top:248px;shape-rendering:crispEdges" width="18" height="18" viewBox="0 0 18 18"><rect x="8" y="4" width="6" height="2" fill="#9e9e9e"/><rect x="6" y="6" width="2" height="2" fill="#9e9e9e"/><rect x="14" y="6" width="2" height="2" fill="#9e9e9e"/><rect x="4" y="8" width="2" height="2" fill="#9e9e9e"/><rect x="16" y="8" width="2" height="2" fill="#9e9e9e"/><rect x="4" y="10" width="2" height="2" fill="#9e9e9e"/><rect x="16" y="10" width="2" height="2" fill="#9e9e9e"/><rect x="4" y="12" width="2" height="2" fill="#9e9e9e"/><rect x="16" y="12" width="2" height="2" fill="#9e9e9e"/><rect x="6" y="14" width="2" height="2" fill="#9e9e9e"/><rect x="14" y="14" width="2" height="2" fill="#9e9e9e"/><rect x="8" y="16" width="6" height="2" fill="#9e9e9e"/></svg><div style="left:741px;top:248px;width:22px;height:22px;background:#c6c6c6;"></div><svg style="position:absolute;left:741px;top:248px;shape-rendering:crispEdges" width="18" height="18" viewBox="0 0 18 18"><rect x="8" y="4" width="6" height="2" fill="#9e9e9e"/><rect x="6" y="6" width="2" height="2" fill="#9e9e9e"/><rect x="14" y="6" width="2" height="2" fill="#9e9e9e"/><rect x="4" y="8" width="2" height="2" fill="#9e9e9e"/><rect x="16" y="8" width="2" height="2" fill="#9e9e9e"/><rect x="4" y="10" width="2" height="2" fill="#9e9e9e"/><rect x="16" y="10" width="2" height="2" fill="#9e9e9e"/><rect x="4" y="12" width="2" height="2" fill="#9e9e9e"/><rect x="16" y="12" width="2" height="2" fill="#9e9e9e"/><rect x="6" y="14" width="2" height="2" fill="#9e9e9e"/><rect x="14" y="14" width="2" height="2" fill="#9e9e9e"/><rect x="8" y="16" width="6" height="2" fill="#9e9e9e"/></svg><div style="left:765px;top:248px;width:22px;height:22px;background:#c6c6c6;"></div><svg style="position:absolute;left:765px;top:248px;shape-rendering:crispEdges" width="18" height="18" viewBox="0 0 18 18"><rect x="8" y="4" width="6" height="2" fill="#9e9e9e"/><rect x="6" y="6" width="2" height="2" fill="#9e9e9e"/><rect x="14" y="6" width="2" height="2" fill="#9e9e9e"/><rect x="4" y="8" width="2" height="2" fill="#9e9e9e"/><rect x="16" y="8" width="2" height="2" fill="#9e9e9e"/><rect x="4" y="10" width="2" height="2" fill="#9e9e9e"/><rect x="16" y="10" width="2" height="2" fill="#9e9e9e"/><rect x="4" y="12" width="2" height="2" fill="#9e9e9e"/><rect x="16" y="12" width="2" height="2" fill="#9e9e9e"/><rect x="6" y="14" width="2" height="2" fill="#9e9e9e"/><rect x="14" y="14" width="2" height="2" fill="#9e9e9e"/><rect x="8" y="16" width="6" height="2" fill="#9e9e9e"/></svg><div style="left:789px;top:248px;width:22px;height:22px;background:#c6c6c6;"></div><svg style="position:absolute;left:789px;top:248px;shape-rendering:crispEdges" width="18" height="18" viewBox="0 0 18 18"><rect x="8" y="4" width="6" height="2" fill="#9e9e9e"/><rect x="6" y="6" width="2" height="2" fill="#9e9e9e"/><rect x="14" y="6" width="2" height="2" fill="#9e9e9e"/><rect x="4" y="8" width="2" height="2" fill="#9e9e9e"/><rect x="16" y="8" width="2" height="2" fill="#9e9e9e"/><rect x="4" y="10" width="2" height="2" fill="#9e9e9e"/><rect x="16" y="10" width="2" height="2" fill="#9e9e9e"/><rect x="4" y="12" width="2" height="2" fill="#9e9e9e"/><rect x="16" y="12" width="2" height="2" fill="#9e9e9e"/><rect x="6" y="14" width="2" height="2" fill="#9e9e9e"/><rect x="14" y="14" width="2" height="2" fill="#9e9e9e"/><rect x="8" y="16" width="6" height="2" fill="#9e9e9e"/></svg><div style="left:813px;top:248px;width:22px;height:22px;background:#c6c6c6;"></div><svg style="position:absolute;left:813px;top:248px;shape-rendering:crispEdges" width="18" height="18" viewBox="0 0 18 18"><rect x="8" y="4" width="6" height="2" fill="#9e9e9e"/><rect x="6" y="6" width="2" height="2" fill="#9e9e9e"/><rect x="14" y="6" width="2" height="2" fill="#9e9e9e"/><rect x="4" y="8" width="2" height="2" fill="#9e9e9e"/><rect x="16" y="8" width="2" height="2" fill="#9e9e9e"/><rect x="4" y="10" width="2" height="2" fill="#9e9e9e"/><rect x="16" y="10" width="2" height="2" fill="#9e9e9e"/><rect x="4" y="12" width="2" height="2" fill="#9e9e9e"/><rect x="16" y="12" width="2" height="2" fill="#9e9e9e"/><rect x="6" y="14" width="2" height="2" fill="#9e9e9e"/><rect x="14" y="14" width="2" height="2" fill="#9e9e9e"/><rect x="8" y="16" width="6" height="2" fill="#9e9e9e"/></svg><div style="left:837px;top:248px;width:22px;height:22px;background:#c6c6c6;"></div><svg style="position:absolute;left:837px;top:248px;shape-rendering:crispEdges" width="18" height="18" viewBox="0 0 18 18"><rect x="8" y="4" width="6" height="2" fill="#9e9e9e"/><rect x="6" y="6" width="2" height="2" fill="#9e9e9e"/><rect x="14" y="6" width="2" height="2" fill="#9e9e9e"/><rect x="4" y="8" width="2" height="2" fill="#9e9e9e"/><rect x="16" y="8" width="2" height="2" fill="#9e9e9e"/><rect x="4" y="10" width="2" height="2" fill="#9e9e9e"/><rect x="16" y="10" width="2" height="2" fill="#9e9e9e"/><rect x="4" y="12" width="2" height="2" fill="#9e9e9e"/><rect x="16" y="12" width="2" height="2" fill="#9e9e9e"/><rect x="6" y="14" width="2" height="2" fill="#9e9e9e"/><rect x="14" y="14" width="2" height="2" fill="#9e9e9e"/><rect x="8" y="16" width="6" height="2" fill="#9e9e9e"/></svg><div style="left:861px;top:248px;width:22px;height:22px;background:#c6c6c6;"></div><svg style="position:absolute;left:861px;top:248px;shape-rendering:crispEdges" width="18" height="18" viewBox="0 0 18 18"><rect x="8" y="4" width="6" height="2" fill="#9e9e9e"/><rect x="6" y="6" width="2" height="2" fill="#9e9e9e"/><rect x="14" y="6" width="2" height="2" fill="#9e9e9e"/><rect x="4" y="8" width="2" height="2" fill="#9e9e9e"/><rect x="16" y="8" width="2" height="2" fill="#9e9e9e"/><rect x="4" y="10" width="2" height="2" fill="#9e9e9e"/><rect x="16" y="10" width="2" height="2" fill="#9e9e9e"/><rect x="4" y="12" width="2" height="2" fill="#9e9e9e"/><rect x="16" y="12" width="2" height="2" fill="#9e9e9e"/><rect x="6" y="14" width="2" height="2" fill="#9e9e9e"/><rect x="14" y="14" width="2" height="2" fill="#9e9e9e"/><rect x="8" y="16" width="6" height="2" fill="#9e9e9e"/></svg><div style="left:885px;top:248px;width:22px;height:22px;background:#c6c6c6;"></div><svg style="position:absolute;left:885px;top:248px;shape-rendering:crispEdges" width="18" height="18" viewBox="0 0 18 18"><rect x="8" y="4" width="6" height="2" fill="#9e9e9e"/><rect x="6" y="6" width="2" height="2" fill="#9e9e9e"/><rect x="14" y="6" width="2" height="2" fill="#9e9e9e"/><rect x="4" y="8" width="2" height="2" fill="#9e9e9e"/><rect x="16" y="8" width="2" height="2" fill="#9e9e9e"/><rect x="4" y="10" width="2" height="2" fill="#9e9e9e"/><rect x="16" y="10" width="2" height="2" fill="#9e9e9e"/><rect x="4" y="12" width="2" height="2" fill="#9e9e9e"/><rect x="16" y="12" width="2" height="2" fill="#9e9e9e"/><rect x="6" y="14" width="2" height="2" fill="#9e9e9e"/><rect x="14" y="14" width="2" height="2" fill="#9e9e9e"/><rect x="8" y="16" width="6" height="2" fill="#9e9e9e"/></svg><div style="left:909px;top:248px;width:22px;height:22px;background:#c6c6c6;"></div><svg style="position:absolute;left:909px;top:248px;shape-rendering:crispEdges" width="18" height="18" viewBox="0 0 18 18"><rect x="8" y="4" width="6" height="2" fill="#9e9e9e"/><rect x="6" y="6" width="2" height="2" fill="#9e9e9e"/><rect x="14" y="6" width="2" height="2" fill="#9e9e9e"/><rect x="4" y="8" width="2" height="2" fill="#9e9e9e"/><rect x="16" y="8" width="2" height="2" fill="#9e9e9e"/><rect x="4" y="10" width="2" height="2" fill="#9e9e9e"/><rect x="16" y="10" width="2" height="2" fill="#9e9e9e"/><rect x="4" y="12" width="2" height="2" fill="#9e9e9e"/><rect x="16" y="12" width="2" height="2" fill="#9e9e9e"/><rect x="6" y="14" width="2" height="2" fill="#9e9e9e"/><rect x="14" y="14" width="2" height="2" fill="#9e9e9e"/><rect x="8" y="16" width="6" height="2" fill="#9e9e9e"/></svg><div style="left:445px;top:272px;width:22px;height:22px;background:#c6c6c6;"></div><div style="left:469px;top:272px;width:22px;height:22px;background:#c6c6c6;"></div><div style="left:493px;top:272px;width:22px;height:22px;background:#c6c6c6;"></div><div style="left:517px;top:272px;width:174px;height:22px;background:#c6c6c6;"></div><svg style="position:absolute;left:445px;top:272px;shape-rendering:crispEdges" width="18" height="18" viewBox="0 0 18 18"><rect x="6" y="6" width="8" height="2" fill="#000"/><rect x="4" y="8" width="6" height="2" fill="#000"/><rect x="10" y="8" width="2" height="2" fill="#fff"/><rect x="12" y="8" width="4" height="2" fill="#000"/><rect x="2" y="10" width="2" height="2" fill="#000"/><rect x="4" y="10" width="2" height="2" fill="#e4e4e4"/><rect x="6" y="10" width="8" height="2" fill="#000"/><rect x="14" y="10" width="2" height="2" fill="#e4e4e4"/><rect x="16" y="10" width="2" height="2" fill="#000"/><rect x="2" y="12" width="2" height="2" fill="#000"/><rect x="4" y="12" width="4" height="2" fill="#e4e4e4"/><rect x="8" y="12" width="4" height="2" fill="#000"/><rect x="12" y="12" width="4" height="2" fill="#e4e4e4"/><rect x="16" y="12" width="2" height="2" fill="#000"/><rect x="4" y="14" width="2" height="2" fill="#000"/><rect x="6" y="14" width="8" height="2" fill="#e4e4e4"/><rect x="14" y="14" width="2" height="2" fill="#000"/><rect x="6" y="16" width="8" height="2" fill="#000"/></svg><svg style="position:absolute;left:469px;top:272px;shape-rendering:crispEdges" width="16" height="18" viewBox="0 0 16 18"><rect x="6" y="2" width="2" height="2" fill="#808080"/><rect x="8" y="2" width="4" height="2" fill="#000"/><rect x="12" y="2" width="2" height="2" fill="#808080"/><rect x="6" y="4" width="2" height="2" fill="#000"/><rect x="8" y="4" width="4" height="2" fill="#e4e4e4"/><rect x="12" y="4" width="2" height="2" fill="#000"/><rect x="6" y="6" width="2" height="2" fill="#000"/><rect x="8" y="6" width="6" height="2" fill="#e4e4e4"/><rect x="4" y="8" width="12" height="2" fill="#000"/><rect x="4" y="10" width="6" height="2" fill="#000"/><rect x="10" y="10" width="2" height="2" fill="#888888"/><rect x="12" y="10" width="4" height="2" fill="#000"/><rect x="4" y="12" width="6" height="2" fill="#000"/><rect x="10" y="12" width="2" height="2" fill="#888888"/><rect x="12" y="12" width="4" height="2" fill="#000"/><rect x="4" y="14" width="12" height="2" fill="#000"/><rect x="4" y="16" width="12" height="2" fill="#808080"/></svg><svg style="position:absolute;left:493px;top:272px;shape-rendering:crispEdges" width="20" height="16" viewBox="0 0 20 16"><rect x="4" y="6" width="4" height="2" fill="#000"/><rect x="14" y="6" width="4" height="2" fill="#000"/><rect x="2" y="8" width="8" height="2" fill="#000"/><rect x="12" y="8" width="8" height="2" fill="#000"/><rect x="2" y="10" width="8" height="2" fill="#000"/><rect x="12" y="10" width="8" height="2" fill="#000"/><rect x="2" y="12" width="2" height="2" fill="#808080"/><rect x="4" y="12" width="4" height="2" fill="#000"/><rect x="8" y="12" width="2" height="2" fill="#808080"/><rect x="12" y="12" width="2" height="2" fill="#808080"/><rect x="14" y="12" width="4" height="2" fill="#000"/><rect x="18" y="12" width="2" height="2" fill="#808080"/><rect x="4" y="14" width="4" height="2" fill="#808080"/><rect x="14" y="14" width="4" height="2" fill="#808080"/></svg><svg style="position:absolute;left:571px;top:276px;shape-rendering:crispEdges" width="66" height="14" viewBox="0 0 66 14"><g fill="#000"><rect x="0" y="0" width="2" height="2"/><rect x="56" y="0" width="6" height="2"/><rect x="0" y="2" width="2" height="2"/><rect x="12" y="2" width="4" height="2"/><rect x="20" y="2" width="2" height="2"/><rect x="26" y="2" width="2" height="2"/><rect x="32" y="2" width="4" height="2"/><rect x="40" y="2" width="2" height="2"/><rect x="44" y="2" width="2" height="2"/><rect x="62" y="2" width="2" height="2"/><rect x="0" y="4" width="2" height="2"/><rect x="16" y="4" width="2" height="2"/><rect x="20" y="4" width="2" height="2"/><rect x="26" y="4" width="2" height="2"/><rect x="30" y="4" width="2" height="2"/><rect x="36" y="4" width="2" height="2"/><rect x="40" y="4" width="4" height="2"/><rect x="62" y="4" width="2" height="2"/><rect x="0" y="6" width="2" height="2"/><rect x="12" y="6" width="6" height="2"/><rect x="20" y="6" width="2" height="2"/><rect x="26" y="6" width="2" height="2"/><rect x="30" y="6" width="8" height="2"/><rect x="40" y="6" width="2" height="2"/><rect x="58" y="6" width="4" height="2"/><rect x="0" y="8" width="2" height="2"/><rect x="10" y="8" width="2" height="2"/><rect x="16" y="8" width="2" height="2"/><rect x="22" y="8" width="6" height="2"/><rect x="30" y="8" width="2" height="2"/><rect x="40" y="8" width="2" height="2"/><rect x="56" y="8" width="2" height="2"/><rect x="0" y="10" width="8" height="2"/><rect x="12" y="10" width="6" height="2"/><rect x="26" y="10" width="2" height="2"/><rect x="32" y="10" width="4" height="2"/><rect x="40" y="10" width="2" height="2"/><rect x="56" y="10" width="8" height="2"/><rect x="22" y="12" width="4" height="2"/></g></svg><div style="left:693px;top:272px;width:22px;height:22px;background:#7d929e;"></div><svg style="position:absolute;left:693px;top:272px;shape-rendering:crispEdges" width="18" height="18" viewBox="0 0 18 18"><rect x="8" y="4" width="6" height="2" fill="#66777f"/><rect x="6" y="6" width="2" height="2" fill="#66777f"/><rect x="14" y="6" width="2" height="2" fill="#66777f"/><rect x="4" y="8" width="2" height="2" fill="#66777f"/><rect x="16" y="8" width="2" height="2" fill="#66777f"/><rect x="4" y="10" width="2" height="2" fill="#66777f"/><rect x="16" y="10" width="2" height="2" fill="#66777f"/><rect x="4" y="12" width="2" height="2" fill="#66777f"/><rect x="16" y="12" width="2" height="2" fill="#66777f"/><rect x="6" y="14" width="2" height="2" fill="#66777f"/><rect x="14" y="14" width="2" height="2" fill="#66777f"/><rect x="8" y="16" width="6" height="2" fill="#66777f"/></svg><div style="left:717px;top:272px;width:22px;height:22px;background:#c6c6c6;"></div><svg style="position:absolute;left:717px;top:272px;shape-rendering:crispEdges" width="18" height="18" viewBox="0 0 18 18"><rect x="8" y="4" width="6" height="2" fill="#9e9e9e"/><rect x="6" y="6" width="2" height="2" fill="#9e9e9e"/><rect x="14" y="6" width="2" height="2" fill="#9e9e9e"/><rect x="4" y="8" width="2" height="2" fill="#9e9e9e"/><rect x="16" y="8" width="2" height="2" fill="#9e9e9e"/><rect x="4" y="10" width="2" height="2" fill="#9e9e9e"/><rect x="16" y="10" width="2" height="2" fill="#9e9e9e"/><rect x="4" y="12" width="2" height="2" fill="#9e9e9e"/><rect x="16" y="12" width="2" height="2" fill="#9e9e9e"/><rect x="6" y="14" width="2" height="2" fill="#9e9e9e"/><rect x="14" y="14" width="2" height="2" fill="#9e9e9e"/><rect x="8" y="16" width="6" height="2" fill="#9e9e9e"/></svg><div style="left:741px;top:272px;width:22px;height:22px;background:#c6c6c6;"></div><svg style="position:absolute;left:741px;top:272px;shape-rendering:crispEdges" width="18" height="18" viewBox="0 0 18 18"><rect x="8" y="4" width="6" height="2" fill="#9e9e9e"/><rect x="6" y="6" width="2" height="2" fill="#9e9e9e"/><rect x="14" y="6" width="2" height="2" fill="#9e9e9e"/><rect x="4" y="8" width="2" height="2" fill="#9e9e9e"/><rect x="16" y="8" width="2" height="2" fill="#9e9e9e"/><rect x="4" y="10" width="2" height="2" fill="#9e9e9e"/><rect x="16" y="10" width="2" height="2" fill="#9e9e9e"/><rect x="4" y="12" width="2" height="2" fill="#9e9e9e"/><rect x="16" y="12" width="2" height="2" fill="#9e9e9e"/><rect x="6" y="14" width="2" height="2" fill="#9e9e9e"/><rect x="14" y="14" width="2" height="2" fill="#9e9e9e"/><rect x="8" y="16" width="6" height="2" fill="#9e9e9e"/></svg><div style="left:765px;top:272px;width:22px;height:22px;background:#c6c6c6;"></div><svg style="position:absolute;left:765px;top:272px;shape-rendering:crispEdges" width="18" height="18" viewBox="0 0 18 18"><rect x="8" y="4" width="6" height="2" fill="#9e9e9e"/><rect x="6" y="6" width="2" height="2" fill="#9e9e9e"/><rect x="14" y="6" width="2" height="2" fill="#9e9e9e"/><rect x="4" y="8" width="2" height="2" fill="#9e9e9e"/><rect x="16" y="8" width="2" height="2" fill="#9e9e9e"/><rect x="4" y="10" width="2" height="2" fill="#9e9e9e"/><rect x="16" y="10" width="2" height="2" fill="#9e9e9e"/><rect x="4" y="12" width="2" height="2" fill="#9e9e9e"/><rect x="16" y="12" width="2" height="2" fill="#9e9e9e"/><rect x="6" y="14" width="2" height="2" fill="#9e9e9e"/><rect x="14" y="14" width="2" height="2" fill="#9e9e9e"/><rect x="8" y="16" width="6" height="2" fill="#9e9e9e"/></svg><div style="left:789px;top:272px;width:22px;height:22px;background:#c6c6c6;"></div><svg style="position:absolute;left:789px;top:272px;shape-rendering:crispEdges" width="18" height="18" viewBox="0 0 18 18"><rect x="8" y="4" width="6" height="2" fill="#9e9e9e"/><rect x="6" y="6" width="2" height="2" fill="#9e9e9e"/><rect x="14" y="6" width="2" height="2" fill="#9e9e9e"/><rect x="4" y="8" width="2" height="2" fill="#9e9e9e"/><rect x="16" y="8" width="2" height="2" fill="#9e9e9e"/><rect x="4" y="10" width="2" height="2" fill="#9e9e9e"/><rect x="16" y="10" width="2" height="2" fill="#9e9e9e"/><rect x="4" y="12" width="2" height="2" fill="#9e9e9e"/><rect x="16" y="12" width="2" height="2" fill="#9e9e9e"/><rect x="6" y="14" width="2" height="2" fill="#9e9e9e"/><rect x="14" y="14" width="2" height="2" fill="#9e9e9e"/><rect x="8" y="16" width="6" height="2" fill="#9e9e9e"/></svg><div style="left:813px;top:272px;width:22px;height:22px;background:#c6c6c6;"></div><svg style="position:absolute;left:813px;top:272px;shape-rendering:crispEdges" width="18" height="18" viewBox="0 0 18 18"><rect x="8" y="4" width="6" height="2" fill="#9e9e9e"/><rect x="6" y="6" width="2" height="2" fill="#9e9e9e"/><rect x="14" y="6" width="2" height="2" fill="#9e9e9e"/><rect x="4" y="8" width="2" height="2" fill="#9e9e9e"/><rect x="16" y="8" width="2" height="2" fill="#9e9e9e"/><rect x="4" y="10" width="2" height="2" fill="#9e9e9e"/><rect x="16" y="10" width="2" height="2" fill="#9e9e9e"/><rect x="4" y="12" width="2" height="2" fill="#9e9e9e"/><rect x="16" y="12" width="2" height="2" fill="#9e9e9e"/><rect x="6" y="14" width="2" height="2" fill="#9e9e9e"/><rect x="14" y="14" width="2" height="2" fill="#9e9e9e"/><rect x="8" y="16" width="6" height="2" fill="#9e9e9e"/></svg><div style="left:837px;top:272px;width:22px;height:22px;background:#c6c6c6;"></div><svg style="position:absolute;left:837px;top:272px;shape-rendering:crispEdges" width="18" height="18" viewBox="0 0 18 18"><rect x="8" y="4" width="6" height="2" fill="#9e9e9e"/><rect x="6" y="6" width="2" height="2" fill="#9e9e9e"/><rect x="14" y="6" width="2" height="2" fill="#9e9e9e"/><rect x="4" y="8" width="2" height="2" fill="#9e9e9e"/><rect x="16" y="8" width="2" height="2" fill="#9e9e9e"/><rect x="4" y="10" width="2" height="2" fill="#9e9e9e"/><rect x="16" y="10" width="2" height="2" fill="#9e9e9e"/><rect x="4" y="12" width="2" height="2" fill="#9e9e9e"/><rect x="16" y="12" width="2" height="2" fill="#9e9e9e"/><rect x="6" y="14" width="2" height="2" fill="#9e9e9e"/><rect x="14" y="14" width="2" height="2" fill="#9e9e9e"/><rect x="8" y="16" width="6" height="2" fill="#9e9e9e"/></svg><div style="left:861px;top:272px;width:22px;height:22px;background:#c6c6c6;"></div><svg style="position:absolute;left:861px;top:272px;shape-rendering:crispEdges" width="18" height="18" viewBox="0 0 18 18"><rect x="8" y="4" width="6" height="2" fill="#9e9e9e"/><rect x="6" y="6" width="2" height="2" fill="#9e9e9e"/><rect x="14" y="6" width="2" height="2" fill="#9e9e9e"/><rect x="4" y="8" width="2" height="2" fill="#9e9e9e"/><rect x="16" y="8" width="2" height="2" fill="#9e9e9e"/><rect x="4" y="10" width="2" height="2" fill="#9e9e9e"/><rect x="16" y="10" width="2" height="2" fill="#9e9e9e"/><rect x="4" y="12" width="2" height="2" fill="#9e9e9e"/><rect x="16" y="12" width="2" height="2" fill="#9e9e9e"/><rect x="6" y="14" width="2" height="2" fill="#9e9e9e"/><rect x="14" y="14" width="2" height="2" fill="#9e9e9e"/><rect x="8" y="16" width="6" height="2" fill="#9e9e9e"/></svg><div style="left:885px;top:272px;width:22px;height:22px;background:#c6c6c6;"></div><svg style="position:absolute;left:885px;top:272px;shape-rendering:crispEdges" width="18" height="18" viewBox="0 0 18 18"><rect x="8" y="4" width="6" height="2" fill="#9e9e9e"/><rect x="6" y="6" width="2" height="2" fill="#9e9e9e"/><rect x="14" y="6" width="2" height="2" fill="#9e9e9e"/><rect x="4" y="8" width="2" height="2" fill="#9e9e9e"/><rect x="16" y="8" width="2" height="2" fill="#9e9e9e"/><rect x="4" y="10" width="2" height="2" fill="#9e9e9e"/><rect x="16" y="10" width="2" height="2" fill="#9e9e9e"/><rect x="4" y="12" width="2" height="2" fill="#9e9e9e"/><rect x="16" y="12" width="2" height="2" fill="#9e9e9e"/><rect x="6" y="14" width="2" height="2" fill="#9e9e9e"/><rect x="14" y="14" width="2" height="2" fill="#9e9e9e"/><rect x="8" y="16" width="6" height="2" fill="#9e9e9e"/></svg><div style="left:909px;top:272px;width:22px;height:22px;background:#c6c6c6;"></div><svg style="position:absolute;left:909px;top:272px;shape-rendering:crispEdges" width="18" height="18" viewBox="0 0 18 18"><rect x="8" y="4" width="6" height="2" fill="#9e9e9e"/><rect x="6" y="6" width="2" height="2" fill="#9e9e9e"/><rect x="14" y="6" width="2" height="2" fill="#9e9e9e"/><rect x="4" y="8" width="2" height="2" fill="#9e9e9e"/><rect x="16" y="8" width="2" height="2" fill="#9e9e9e"/><rect x="4" y="10" width="2" height="2" fill="#9e9e9e"/><rect x="16" y="10" width="2" height="2" fill="#9e9e9e"/><rect x="4" y="12" width="2" height="2" fill="#9e9e9e"/><rect x="16" y="12" width="2" height="2" fill="#9e9e9e"/><rect x="6" y="14" width="2" height="2" fill="#9e9e9e"/><rect x="14" y="14" width="2" height="2" fill="#9e9e9e"/><rect x="8" y="16" width="6" height="2" fill="#9e9e9e"/></svg><div style="left:445px;top:296px;width:22px;height:22px;background:#c6c6c6;"></div><div style="left:469px;top:296px;width:22px;height:22px;background:#c6c6c6;"></div><div style="left:493px;top:296px;width:22px;height:22px;background:#c6c6c6;"></div><div style="left:517px;top:296px;width:174px;height:22px;background:#c6c6c6;"></div><svg style="position:absolute;left:445px;top:296px;shape-rendering:crispEdges" width="18" height="18" viewBox="0 0 18 18"><rect x="6" y="6" width="8" height="2" fill="#000"/><rect x="4" y="8" width="6" height="2" fill="#000"/><rect x="10" y="8" width="2" height="2" fill="#fff"/><rect x="12" y="8" width="4" height="2" fill="#000"/><rect x="2" y="10" width="2" height="2" fill="#000"/><rect x="4" y="10" width="2" height="2" fill="#e4e4e4"/><rect x="6" y="10" width="8" height="2" fill="#000"/><rect x="14" y="10" width="2" height="2" fill="#e4e4e4"/><rect x="16" y="10" width="2" height="2" fill="#000"/><rect x="2" y="12" width="2" height="2" fill="#000"/><rect x="4" y="12" width="4" height="2" fill="#e4e4e4"/><rect x="8" y="12" width="4" height="2" fill="#000"/><rect x="12" y="12" width="4" height="2" fill="#e4e4e4"/><rect x="16" y="12" width="2" height="2" fill="#000"/><rect x="4" y="14" width="2" height="2" fill="#000"/><rect x="6" y="14" width="8" height="2" fill="#e4e4e4"/><rect x="14" y="14" width="2" height="2" fill="#000"/><rect x="6" y="16" width="8" height="2" fill="#000"/></svg><svg style="position:absolute;left:469px;top:296px;shape-rendering:crispEdges" width="16" height="18" viewBox="0 0 16 18"><rect x="6" y="2" width="2" height="2" fill="#808080"/><rect x="8" y="2" width="4" height="2" fill="#000"/><rect x="12" y="2" width="2" height="2" fill="#808080"/><rect x="6" y="4" width="2" height="2" fill="#000"/><rect x="8" y="4" width="4" height="2" fill="#e4e4e4"/><rect x="12" y="4" width="2" height="2" fill="#000"/><rect x="6" y="6" width="2" height="2" fill="#000"/><rect x="8" y="6" width="6" height="2" fill="#e4e4e4"/><rect x="4" y="8" width="12" height="2" fill="#000"/><rect x="4" y="10" width="6" height="2" fill="#000"/><rect x="10" y="10" width="2" height="2" fill="#888888"/><rect x="12" y="10" width="4" height="2" fill="#000"/><rect x="4" y="12" width="6" height="2" fill="#000"/><rect x="10" y="12" width="2" height="2" fill="#888888"/><rect x="12" y="12" width="4" height="2" fill="#000"/><rect x="4" y="14" width="12" height="2" fill="#000"/><rect x="4" y="16" width="12" height="2" fill="#808080"/></svg><svg style="position:absolute;left:493px;top:296px;shape-rendering:crispEdges" width="22" height="18" viewBox="0 0 22 18"><rect x="2" y="4" width="12" height="2" fill="#808080"/><rect x="2" y="6" width="4" height="2" fill="#808080"/><rect x="6" y="6" width="8" height="2" fill="#000"/><rect x="14" y="6" width="2" height="2" fill="#808080"/><rect x="2" y="8" width="2" height="2" fill="#808080"/><rect x="4" y="8" width="18" height="2" fill="#000"/><rect x="2" y="10" width="2" height="2" fill="#808080"/><rect x="4" y="10" width="18" height="2" fill="#000"/><rect x="2" y="12" width="18" height="2" fill="#000"/><rect x="2" y="14" width="18" height="2" fill="#000"/><rect x="2" y="16" width="18" height="2" fill="#808080"/></svg><svg style="position:absolute;left:571px;top:300px;shape-rendering:crispEdges" width="66" height="14" viewBox="0 0 66 14"><g fill="#000"><rect x="2" y="0" width="6" height="2"/><rect x="56" y="0" width="6" height="2"/><rect x="0" y="2" width="2" height="2"/><rect x="10" y="2" width="2" height="2"/><rect x="14" y="2" width="2" height="2"/><rect x="20" y="2" width="4" height="2"/><rect x="28" y="2" width="2" height="2"/><rect x="34" y="2" width="2" height="2"/><rect x="38" y="2" width="6" height="2"/><rect x="56" y="2" width="2" height="2"/><rect x="0" y="4" width="2" height="2"/><rect x="4" y="4" width="4" height="2"/><rect x="10" y="4" width="4" height="2"/><rect x="18" y="4" width="2" height="2"/><rect x="24" y="4" width="2" height="2"/><rect x="28" y="4" width="2" height="2"/><rect x="34" y="4" width="2" height="2"/><rect x="38" y="4" width="2" height="2"/><rect x="44" y="4" width="2" height="2"/><rect x="56" y="4" width="6" height="2"/><rect x="0" y="6" width="2" height="2"/><rect x="6" y="6" width="2" height="2"/><rect x="10" y="6" width="2" height="2"/><rect x="18" y="6" width="2" height="2"/><rect x="24" y="6" width="2" height="2"/><rect x="28" y="6" width="2" height="2"/><rect x="34" y="6" width="2" height="2"/><rect x="38" y="6" width="2" height="2"/><rect x="44" y="6" width="2" height="2"/><rect x="62" y="6" width="2" height="2"/><rect x="0" y="8" width="2" height="2"/><rect x="6" y="8" width="2" height="2"/><rect x="10" y="8" width="2" height="2"/><rect x="18" y="8" width="2" height="2"/><rect x="24" y="8" width="2" height="2"/><rect x="28" y="8" width="2" height="2"/><rect x="34" y="8" width="2" height="2"/><rect x="38" y="8" width="6" height="2"/><rect x="62" y="8" width="2" height="2"/><rect x="2" y="10" width="6" height="2"/><rect x="10" y="10" width="2" height="2"/><rect x="20" y="10" width="4" height="2"/><rect x="30" y="10" width="6" height="2"/><rect x="38" y="10" width="2" height="2"/><rect x="56" y="10" width="6" height="2"/><rect x="38" y="12" width="2" height="2"/></g></svg><div style="left:693px;top:296px;width:22px;height:22px;background:#7d929e;"></div><svg style="position:absolute;left:693px;top:296px;shape-rendering:crispEdges" width="18" height="18" viewBox="0 0 18 18"><rect x="8" y="4" width="6" height="2" fill="#66777f"/><rect x="6" y="6" width="2" height="2" fill="#66777f"/><rect x="14" y="6" width="2" height="2" fill="#66777f"/><rect x="4" y="8" width="2" height="2" fill="#66777f"/><rect x="16" y="8" width="2" height="2" fill="#66777f"/><rect x="4" y="10" width="2" height="2" fill="#66777f"/><rect x="16" y="10" width="2" height="2" fill="#66777f"/><rect x="4" y="12" width="2" height="2" fill="#66777f"/><rect x="16" y="12" width="2" height="2" fill="#66777f"/><rect x="6" y="14" width="2" height="2" fill="#66777f"/><rect x="14" y="14" width="2" height="2" fill="#66777f"/><rect x="8" y="16" width="6" height="2" fill="#66777f"/></svg><div style="left:717px;top:296px;width:22px;height:22px;background:#c6c6c6;"></div><svg style="position:absolute;left:717px;top:296px;shape-rendering:crispEdges" width="18" height="18" viewBox="0 0 18 18"><rect x="8" y="4" width="6" height="2" fill="#9e9e9e"/><rect x="6" y="6" width="2" height="2" fill="#9e9e9e"/><rect x="14" y="6" width="2" height="2" fill="#9e9e9e"/><rect x="4" y="8" width="2" height="2" fill="#9e9e9e"/><rect x="16" y="8" width="2" height="2" fill="#9e9e9e"/><rect x="4" y="10" width="2" height="2" fill="#9e9e9e"/><rect x="16" y="10" width="2" height="2" fill="#9e9e9e"/><rect x="4" y="12" width="2" height="2" fill="#9e9e9e"/><rect x="16" y="12" width="2" height="2" fill="#9e9e9e"/><rect x="6" y="14" width="2" height="2" fill="#9e9e9e"/><rect x="14" y="14" width="2" height="2" fill="#9e9e9e"/><rect x="8" y="16" width="6" height="2" fill="#9e9e9e"/></svg><div style="left:741px;top:296px;width:22px;height:22px;background:#c6c6c6;"></div><svg style="position:absolute;left:741px;top:296px;shape-rendering:crispEdges" width="18" height="18" viewBox="0 0 18 18"><rect x="8" y="4" width="6" height="2" fill="#9e9e9e"/><rect x="6" y="6" width="2" height="2" fill="#9e9e9e"/><rect x="14" y="6" width="2" height="2" fill="#9e9e9e"/><rect x="4" y="8" width="2" height="2" fill="#9e9e9e"/><rect x="16" y="8" width="2" height="2" fill="#9e9e9e"/><rect x="4" y="10" width="2" height="2" fill="#9e9e9e"/><rect x="16" y="10" width="2" height="2" fill="#9e9e9e"/><rect x="4" y="12" width="2" height="2" fill="#9e9e9e"/><rect x="16" y="12" width="2" height="2" fill="#9e9e9e"/><rect x="6" y="14" width="2" height="2" fill="#9e9e9e"/><rect x="14" y="14" width="2" height="2" fill="#9e9e9e"/><rect x="8" y="16" width="6" height="2" fill="#9e9e9e"/></svg><div style="left:765px;top:296px;width:22px;height:22px;background:#c6c6c6;"></div><svg style="position:absolute;left:765px;top:296px;shape-rendering:crispEdges" width="18" height="18" viewBox="0 0 18 18"><rect x="8" y="4" width="6" height="2" fill="#9e9e9e"/><rect x="6" y="6" width="2" height="2" fill="#9e9e9e"/><rect x="14" y="6" width="2" height="2" fill="#9e9e9e"/><rect x="4" y="8" width="2" height="2" fill="#9e9e9e"/><rect x="16" y="8" width="2" height="2" fill="#9e9e9e"/><rect x="4" y="10" width="2" height="2" fill="#9e9e9e"/><rect x="16" y="10" width="2" height="2" fill="#9e9e9e"/><rect x="4" y="12" width="2" height="2" fill="#9e9e9e"/><rect x="16" y="12" width="2" height="2" fill="#9e9e9e"/><rect x="6" y="14" width="2" height="2" fill="#9e9e9e"/><rect x="14" y="14" width="2" height="2" fill="#9e9e9e"/><rect x="8" y="16" width="6" height="2" fill="#9e9e9e"/></svg><div style="left:789px;top:296px;width:22px;height:22px;background:#c6c6c6;"></div><svg style="position:absolute;left:789px;top:296px;shape-rendering:crispEdges" width="18" height="18" viewBox="0 0 18 18"><rect x="8" y="4" width="6" height="2" fill="#9e9e9e"/><rect x="6" y="6" width="2" height="2" fill="#9e9e9e"/><rect x="14" y="6" width="2" height="2" fill="#9e9e9e"/><rect x="4" y="8" width="2" height="2" fill="#9e9e9e"/><rect x="16" y="8" width="2" height="2" fill="#9e9e9e"/><rect x="4" y="10" width="2" height="2" fill="#9e9e9e"/><rect x="16" y="10" width="2" height="2" fill="#9e9e9e"/><rect x="4" y="12" width="2" height="2" fill="#9e9e9e"/><rect x="16" y="12" width="2" height="2" fill="#9e9e9e"/><rect x="6" y="14" width="2" height="2" fill="#9e9e9e"/><rect x="14" y="14" width="2" height="2" fill="#9e9e9e"/><rect x="8" y="16" width="6" height="2" fill="#9e9e9e"/></svg><div style="left:813px;top:296px;width:22px;height:22px;background:#c6c6c6;"></div><svg style="position:absolute;left:813px;top:296px;shape-rendering:crispEdges" width="18" height="18" viewBox="0 0 18 18"><rect x="8" y="4" width="6" height="2" fill="#9e9e9e"/><rect x="6" y="6" width="2" height="2" fill="#9e9e9e"/><rect x="14" y="6" width="2" height="2" fill="#9e9e9e"/><rect x="4" y="8" width="2" height="2" fill="#9e9e9e"/><rect x="16" y="8" width="2" height="2" fill="#9e9e9e"/><rect x="4" y="10" width="2" height="2" fill="#9e9e9e"/><rect x="16" y="10" width="2" height="2" fill="#9e9e9e"/><rect x="4" y="12" width="2" height="2" fill="#9e9e9e"/><rect x="16" y="12" width="2" height="2" fill="#9e9e9e"/><rect x="6" y="14" width="2" height="2" fill="#9e9e9e"/><rect x="14" y="14" width="2" height="2" fill="#9e9e9e"/><rect x="8" y="16" width="6" height="2" fill="#9e9e9e"/></svg><div style="left:837px;top:296px;width:22px;height:22px;background:#c6c6c6;"></div><svg style="position:absolute;left:837px;top:296px;shape-rendering:crispEdges" width="18" height="18" viewBox="0 0 18 18"><rect x="8" y="4" width="6" height="2" fill="#9e9e9e"/><rect x="6" y="6" width="2" height="2" fill="#9e9e9e"/><rect x="14" y="6" width="2" height="2" fill="#9e9e9e"/><rect x="4" y="8" width="2" height="2" fill="#9e9e9e"/><rect x="16" y="8" width="2" height="2" fill="#9e9e9e"/><rect x="4" y="10" width="2" height="2" fill="#9e9e9e"/><rect x="16" y="10" width="2" height="2" fill="#9e9e9e"/><rect x="4" y="12" width="2" height="2" fill="#9e9e9e"/><rect x="16" y="12" width="2" height="2" fill="#9e9e9e"/><rect x="6" y="14" width="2" height="2" fill="#9e9e9e"/><rect x="14" y="14" width="2" height="2" fill="#9e9e9e"/><rect x="8" y="16" width="6" height="2" fill="#9e9e9e"/></svg><div style="left:861px;top:296px;width:22px;height:22px;background:#c6c6c6;"></div><svg style="position:absolute;left:861px;top:296px;shape-rendering:crispEdges" width="18" height="18" viewBox="0 0 18 18"><rect x="8" y="4" width="6" height="2" fill="#9e9e9e"/><rect x="6" y="6" width="2" height="2" fill="#9e9e9e"/><rect x="14" y="6" width="2" height="2" fill="#9e9e9e"/><rect x="4" y="8" width="2" height="2" fill="#9e9e9e"/><rect x="16" y="8" width="2" height="2" fill="#9e9e9e"/><rect x="4" y="10" width="2" height="2" fill="#9e9e9e"/><rect x="16" y="10" width="2" height="2" fill="#9e9e9e"/><rect x="4" y="12" width="2" height="2" fill="#9e9e9e"/><rect x="16" y="12" width="2" height="2" fill="#9e9e9e"/><rect x="6" y="14" width="2" height="2" fill="#9e9e9e"/><rect x="14" y="14" width="2" height="2" fill="#9e9e9e"/><rect x="8" y="16" width="6" height="2" fill="#9e9e9e"/></svg><div style="left:885px;top:296px;width:22px;height:22px;background:#c6c6c6;"></div><svg style="position:absolute;left:885px;top:296px;shape-rendering:crispEdges" width="18" height="18" viewBox="0 0 18 18"><rect x="8" y="4" width="6" height="2" fill="#9e9e9e"/><rect x="6" y="6" width="2" height="2" fill="#9e9e9e"/><rect x="14" y="6" width="2" height="2" fill="#9e9e9e"/><rect x="4" y="8" width="2" height="2" fill="#9e9e9e"/><rect x="16" y="8" width="2" height="2" fill="#9e9e9e"/><rect x="4" y="10" width="2" height="2" fill="#9e9e9e"/><rect x="16" y="10" width="2" height="2" fill="#9e9e9e"/><rect x="4" y="12" width="2" height="2" fill="#9e9e9e"/><rect x="16" y="12" width="2" height="2" fill="#9e9e9e"/><rect x="6" y="14" width="2" height="2" fill="#9e9e9e"/><rect x="14" y="14" width="2" height="2" fill="#9e9e9e"/><rect x="8" y="16" width="6" height="2" fill="#9e9e9e"/></svg><div style="left:909px;top:296px;width:22px;height:22px;background:#c6c6c6;"></div><svg style="position:absolute;left:909px;top:296px;shape-rendering:crispEdges" width="18" height="18" viewBox="0 0 18 18"><rect x="8" y="4" width="6" height="2" fill="#9e9e9e"/><rect x="6" y="6" width="2" height="2" fill="#9e9e9e"/><rect x="14" y="6" width="2" height="2" fill="#9e9e9e"/><rect x="4" y="8" width="2" height="2" fill="#9e9e9e"/><rect x="16" y="8" width="2" height="2" fill="#9e9e9e"/><rect x="4" y="10" width="2" height="2" fill="#9e9e9e"/><rect x="16" y="10" width="2" height="2" fill="#9e9e9e"/><rect x="4" y="12" width="2" height="2" fill="#9e9e9e"/><rect x="16" y="12" width="2" height="2" fill="#9e9e9e"/><rect x="6" y="14" width="2" height="2" fill="#9e9e9e"/><rect x="14" y="14" width="2" height="2" fill="#9e9e9e"/><rect x="8" y="16" width="6" height="2" fill="#9e9e9e"/></svg><div style="left:933px;top:32px;width:24px;height:286px;background:#c6c6c6;"></div><div style="left:443px;top:30px;width:2px;height:2px;background:#c0c0c0;"></div><div style="left:467px;top:30px;width:2px;height:2px;background:#c0c0c0;"></div><div style="left:491px;top:30px;width:2px;height:2px;background:#c0c0c0;"></div><div style="left:515px;top:30px;width:2px;height:2px;background:#c0c0c0;"></div><div style="left:691px;top:30px;width:2px;height:2px;background:#5f7482;"></div><div style="left:715px;top:30px;width:2px;height:2px;background:#c0c0c0;"></div><div style="left:739px;top:30px;width:2px;height:2px;background:#c0c0c0;"></div><div style="left:763px;top:30px;width:2px;height:2px;background:#c0c0c0;"></div><div style="left:787px;top:30px;width:2px;height:2px;background:#c0c0c0;"></div><div style="left:811px;top:30px;width:2px;height:2px;background:#c0c0c0;"></div><div style="left:835px;top:30px;width:2px;height:2px;background:#c0c0c0;"></div><div style="left:859px;top:30px;width:2px;height:2px;background:#c0c0c0;"></div><div style="left:883px;top:30px;width:2px;height:2px;background:#c0c0c0;"></div><div style="left:907px;top:30px;width:2px;height:2px;background:#c0c0c0;"></div><div style="left:931px;top:30px;width:2px;height:2px;background:#c0c0c0;"></div><div style="left:539px;top:30px;width:2px;height:2px;background:#c0c0c0;"></div><div style="left:563px;top:30px;width:2px;height:2px;background:#c0c0c0;"></div><div style="left:443px;top:54px;width:2px;height:2px;background:#c0c0c0;"></div><div style="left:467px;top:54px;width:2px;height:2px;background:#c0c0c0;"></div><div style="left:491px;top:54px;width:2px;height:2px;background:#c0c0c0;"></div><div style="left:515px;top:54px;width:2px;height:2px;background:#c0c0c0;"></div><div style="left:691px;top:54px;width:2px;height:2px;background:#5f7482;"></div><div style="left:715px;top:54px;width:2px;height:2px;background:#c0c0c0;"></div><div style="left:739px;top:54px;width:2px;height:2px;background:#c0c0c0;"></div><div style="left:763px;top:54px;width:2px;height:2px;background:#c0c0c0;"></div><div style="left:787px;top:54px;width:2px;height:2px;background:#c0c0c0;"></div><div style="left:811px;top:54px;width:2px;height:2px;background:#c0c0c0;"></div><div style="left:835px;top:54px;width:2px;height:2px;background:#c0c0c0;"></div><div style="left:859px;top:54px;width:2px;height:2px;background:#c0c0c0;"></div><div style="left:883px;top:54px;width:2px;height:2px;background:#c0c0c0;"></div><div style="left:907px;top:54px;width:2px;height:2px;background:#c0c0c0;"></div><div style="left:931px;top:54px;width:2px;height:2px;background:#c0c0c0;"></div><div style="left:539px;top:54px;width:2px;height:2px;background:#c0c0c0;"></div><div style="left:563px;top:54px;width:2px;height:2px;background:#c0c0c0;"></div><div style="left:443px;top:78px;width:2px;height:2px;background:#c0c0c0;"></div><div style="left:467px;top:78px;width:2px;height:2px;background:#c0c0c0;"></div><div style="left:491px;top:78px;width:2px;height:2px;background:#c0c0c0;"></div><div style="left:515px;top:78px;width:2px;height:2px;background:#c0c0c0;"></div><div style="left:691px;top:78px;width:2px;height:2px;background:#5f7482;"></div><div style="left:715px;top:78px;width:2px;height:2px;background:#c0c0c0;"></div><div style="left:739px;top:78px;width:2px;height:2px;background:#c0c0c0;"></div><div style="left:763px;top:78px;width:2px;height:2px;background:#c0c0c0;"></div><div style="left:787px;top:78px;width:2px;height:2px;background:#c0c0c0;"></div><div style="left:811px;top:78px;width:2px;height:2px;background:#c0c0c0;"></div><div style="left:835px;top:78px;width:2px;height:2px;background:#c0c0c0;"></div><div style="left:859px;top:78px;width:2px;height:2px;background:#c0c0c0;"></div><div style="left:883px;top:78px;width:2px;height:2px;background:#c0c0c0;"></div><div style="left:907px;top:78px;width:2px;height:2px;background:#c0c0c0;"></div><div style="left:931px;top:78px;width:2px;height:2px;background:#c0c0c0;"></div><div style="left:443px;top:102px;width:2px;height:2px;background:#c0c0c0;"></div><div style="left:467px;top:102px;width:2px;height:2px;background:#c0c0c0;"></div><div style="left:491px;top:102px;width:2px;height:2px;background:#c0c0c0;"></div><div style="left:515px;top:102px;width:2px;height:2px;background:#c0c0c0;"></div><div style="left:691px;top:102px;width:2px;height:2px;background:#5f7482;"></div><div style="left:715px;top:102px;width:2px;height:2px;background:#c0c0c0;"></div><div style="left:739px;top:102px;width:2px;height:2px;background:#c0c0c0;"></div><div style="left:763px;top:102px;width:2px;height:2px;background:#c0c0c0;"></div><div style="left:787px;top:102px;width:2px;height:2px;background:#c0c0c0;"></div><div style="left:811px;top:102px;width:2px;height:2px;background:#c0c0c0;"></div><div style="left:835px;top:102px;width:2px;height:2px;background:#c0c0c0;"></div><div style="left:859px;top:102px;width:2px;height:2px;background:#c0c0c0;"></div><div style="left:883px;top:102px;width:2px;height:2px;background:#c0c0c0;"></div><div style="left:907px;top:102px;width:2px;height:2px;background:#c0c0c0;"></div><div style="left:931px;top:102px;width:2px;height:2px;background:#c0c0c0;"></div><div style="left:443px;top:126px;width:2px;height:2px;background:#c0c0c0;"></div><div style="left:467px;top:126px;width:2px;height:2px;background:#c0c0c0;"></div><div style="left:491px;top:126px;width:2px;height:2px;background:#c0c0c0;"></div><div style="left:515px;top:126px;width:2px;height:2px;background:#c0c0c0;"></div><div style="left:691px;top:126px;width:2px;height:2px;background:#5f7482;"></div><div style="left:715px;top:126px;width:2px;height:2px;background:#c0c0c0;"></div><div style="left:739px;top:126px;width:2px;height:2px;background:#c0c0c0;"></div><div style="left:763px;top:126px;width:2px;height:2px;background:#c0c0c0;"></div><div style="left:787px;top:126px;width:2px;height:2px;background:#c0c0c0;"></div><div style="left:811px;top:126px;width:2px;height:2px;background:#c0c0c0;"></div><div style="left:835px;top:126px;width:2px;height:2px;background:#c0c0c0;"></div><div style="left:859px;top:126px;width:2px;height:2px;background:#c0c0c0;"></div><div style="left:883px;top:126px;width:2px;height:2px;background:#c0c0c0;"></div><div style="left:907px;top:126px;width:2px;height:2px;background:#c0c0c0;"></div><div style="left:931px;top:126px;width:2px;height:2px;background:#c0c0c0;"></div><div style="left:443px;top:150px;width:2px;height:2px;background:#c0c0c0;"></div><div style="left:467px;top:150px;width:2px;height:2px;background:#c0c0c0;"></div><div style="left:491px;top:150px;width:2px;height:2px;background:#c0c0c0;"></div><div style="left:515px;top:150px;width:2px;height:2px;background:#c0c0c0;"></div><div style="left:691px;top:150px;width:2px;height:2px;background:#5f7482;"></div><div style="left:715px;top:150px;width:2px;height:2px;background:#c0c0c0;"></div><div style="left:739px;top:150px;width:2px;height:2px;background:#c0c0c0;"></div><div style="left:763px;top:150px;width:2px;height:2px;background:#c0c0c0;"></div><div style="left:787px;top:150px;width:2px;height:2px;background:#c0c0c0;"></div><div style="left:811px;top:150px;width:2px;height:2px;background:#c0c0c0;"></div><div style="left:835px;top:150px;width:2px;height:2px;background:#c0c0c0;"></div><div style="left:859px;top:150px;width:2px;height:2px;background:#c0c0c0;"></div><div style="left:883px;top:150px;width:2px;height:2px;background:#c0c0c0;"></div><div style="left:907px;top:150px;width:2px;height:2px;background:#c0c0c0;"></div><div style="left:931px;top:150px;width:2px;height:2px;background:#c0c0c0;"></div><div style="left:443px;top:174px;width:2px;height:2px;background:#c0c0c0;"></div><div style="left:467px;top:174px;width:2px;height:2px;background:#c0c0c0;"></div><div style="left:491px;top:174px;width:2px;height:2px;background:#c0c0c0;"></div><div style="left:515px;top:174px;width:2px;height:2px;background:#c0c0c0;"></div><div style="left:691px;top:174px;width:2px;height:2px;background:#5f7482;"></div><div style="left:715px;top:174px;width:2px;height:2px;background:#c0c0c0;"></div><div style="left:739px;top:174px;width:2px;height:2px;background:#c0c0c0;"></div><div style="left:763px;top:174px;width:2px;height:2px;background:#c0c0c0;"></div><div style="left:787px;top:174px;width:2px;height:2px;background:#c0c0c0;"></div><div style="left:811px;top:174px;width:2px;height:2px;background:#c0c0c0;"></div><div style="left:835px;top:174px;width:2px;height:2px;background:#c0c0c0;"></div><div style="left:859px;top:174px;width:2px;height:2px;background:#c0c0c0;"></div><div style="left:883px;top:174px;width:2px;height:2px;background:#c0c0c0;"></div><div style="left:907px;top:174px;width:2px;height:2px;background:#c0c0c0;"></div><div style="left:931px;top:174px;width:2px;height:2px;background:#c0c0c0;"></div><div style="left:443px;top:198px;width:2px;height:2px;background:#c0c0c0;"></div><div style="left:467px;top:198px;width:2px;height:2px;background:#c0c0c0;"></div><div style="left:491px;top:198px;width:2px;height:2px;background:#c0c0c0;"></div><div style="left:515px;top:198px;width:2px;height:2px;background:#c0c0c0;"></div><div style="left:691px;top:198px;width:2px;height:2px;background:#5f7482;"></div><div style="left:715px;top:198px;width:2px;height:2px;background:#c0c0c0;"></div><div style="left:739px;top:198px;width:2px;height:2px;background:#c0c0c0;"></div><div style="left:763px;top:198px;width:2px;height:2px;background:#c0c0c0;"></div><div style="left:787px;top:198px;width:2px;height:2px;background:#c0c0c0;"></div><div style="left:811px;top:198px;width:2px;height:2px;background:#c0c0c0;"></div><div style="left:835px;top:198px;width:2px;height:2px;background:#c0c0c0;"></div><div style="left:859px;top:198px;width:2px;height:2px;background:#c0c0c0;"></div><div style="left:883px;top:198px;width:2px;height:2px;background:#c0c0c0;"></div><div style="left:907px;top:198px;width:2px;height:2px;background:#c0c0c0;"></div><div style="left:931px;top:198px;width:2px;height:2px;background:#c0c0c0;"></div><div style="left:443px;top:222px;width:2px;height:2px;background:#c0c0c0;"></div><div style="left:467px;top:222px;width:2px;height:2px;background:#c0c0c0;"></div><div style="left:491px;top:222px;width:2px;height:2px;background:#c0c0c0;"></div><div style="left:515px;top:222px;width:2px;height:2px;background:#c0c0c0;"></div><div style="left:691px;top:222px;width:2px;height:2px;background:#5f7482;"></div><div style="left:715px;top:222px;width:2px;height:2px;background:#c0c0c0;"></div><div style="left:739px;top:222px;width:2px;height:2px;background:#c0c0c0;"></div><div style="left:763px;top:222px;width:2px;height:2px;background:#c0c0c0;"></div><div style="left:787px;top:222px;width:2px;height:2px;background:#c0c0c0;"></div><div style="left:811px;top:222px;width:2px;height:2px;background:#c0c0c0;"></div><div style="left:835px;top:222px;width:2px;height:2px;background:#c0c0c0;"></div><div style="left:859px;top:222px;width:2px;height:2px;background:#c0c0c0;"></div><div style="left:883px;top:222px;width:2px;height:2px;background:#c0c0c0;"></div><div style="left:907px;top:222px;width:2px;height:2px;background:#c0c0c0;"></div><div style="left:931px;top:222px;width:2px;height:2px;background:#c0c0c0;"></div><div style="left:443px;top:246px;width:2px;height:2px;background:#c0c0c0;"></div><div style="left:467px;top:246px;width:2px;height:2px;background:#c0c0c0;"></div><div style="left:491px;top:246px;width:2px;height:2px;background:#c0c0c0;"></div><div style="left:515px;top:246px;width:2px;height:2px;background:#c0c0c0;"></div><div style="left:691px;top:246px;width:2px;height:2px;background:#5f7482;"></div><div style="left:715px;top:246px;width:2px;height:2px;background:#c0c0c0;"></div><div style="left:739px;top:246px;width:2px;height:2px;background:#c0c0c0;"></div><div style="left:763px;top:246px;width:2px;height:2px;background:#c0c0c0;"></div><div style="left:787px;top:246px;width:2px;height:2px;background:#c0c0c0;"></div><div style="left:811px;top:246px;width:2px;height:2px;background:#c0c0c0;"></div><div style="left:835px;top:246px;width:2px;height:2px;background:#c0c0c0;"></div><div style="left:859px;top:246px;width:2px;height:2px;background:#c0c0c0;"></div><div style="left:883px;top:246px;width:2px;height:2px;background:#c0c0c0;"></div><div style="left:907px;top:246px;width:2px;height:2px;background:#c0c0c0;"></div><div style="left:931px;top:246px;width:2px;height:2px;background:#c0c0c0;"></div><div style="left:443px;top:270px;width:2px;height:2px;background:#c0c0c0;"></div><div style="left:467px;top:270px;width:2px;height:2px;background:#c0c0c0;"></div><div style="left:491px;top:270px;width:2px;height:2px;background:#c0c0c0;"></div><div style="left:515px;top:270px;width:2px;height:2px;background:#c0c0c0;"></div><div style="left:691px;top:270px;width:2px;height:2px;background:#5f7482;"></div><div style="left:715px;top:270px;width:2px;height:2px;background:#c0c0c0;"></div><div style="left:739px;top:270px;width:2px;height:2px;background:#c0c0c0;"></div><div style="left:763px;top:270px;width:2px;height:2px;background:#c0c0c0;"></div><div style="left:787px;top:270px;width:2px;height:2px;background:#c0c0c0;"></div><div style="left:811px;top:270px;width:2px;height:2px;background:#c0c0c0;"></div><div style="left:835px;top:270px;width:2px;height:2px;background:#c0c0c0;"></div><div style="left:859px;top:270px;width:2px;height:2px;background:#c0c0c0;"></div><div style="left:883px;top:270px;width:2px;height:2px;background:#c0c0c0;"></div><div style="left:907px;top:270px;width:2px;height:2px;background:#c0c0c0;"></div><div style="left:931px;top:270px;width:2px;height:2px;background:#c0c0c0;"></div><div style="left:443px;top:294px;width:2px;height:2px;background:#c0c0c0;"></div><div style="left:467px;top:294px;width:2px;height:2px;background:#c0c0c0;"></div><div style="left:491px;top:294px;width:2px;height:2px;background:#c0c0c0;"></div><div style="left:515px;top:294px;width:2px;height:2px;background:#c0c0c0;"></div><div style="left:691px;top:294px;width:2px;height:2px;background:#5f7482;"></div><div style="left:715px;top:294px;width:2px;height:2px;background:#c0c0c0;"></div><div style="left:739px;top:294px;width:2px;height:2px;background:#c0c0c0;"></div><div style="left:763px;top:294px;width:2px;height:2px;background:#c0c0c0;"></div><div style="left:787px;top:294px;width:2px;height:2px;background:#c0c0c0;"></div><div style="left:811px;top:294px;width:2px;height:2px;background:#c0c0c0;"></div><div style="left:835px;top:294px;width:2px;height:2px;background:#c0c0c0;"></div><div style="left:859px;top:294px;width:2px;height:2px;background:#c0c0c0;"></div><div style="left:883px;top:294px;width:2px;height:2px;background:#c0c0c0;"></div><div style="left:907px;top:294px;width:2px;height:2px;background:#c0c0c0;"></div><div style="left:931px;top:294px;width:2px;height:2px;background:#c0c0c0;"></div><div style="left:957px;top:30px;width:2px;height:704px;background:#fff;"></div><div style="left:961px;top:0px;width:32px;height:30px;background:#000;"></div><div style="left:963px;top:2px;width:28px;height:28px;background:#fff;"></div><div style="left:965px;top:4px;width:24px;height:24px;background:#c6c6c6;"></div><svg style="position:absolute;left:965px;top:4px;shape-rendering:crispEdges" width="24" height="22" viewBox="0 0 24 22"><rect x="2" y="2" width="6" height="2" fill="#000"/><rect x="10" y="2" width="4" height="2" fill="#000"/><rect x="16" y="2" width="6" height="2" fill="#000"/><rect x="2" y="4" width="2" height="2" fill="#000"/><rect x="20" y="4" width="2" height="2" fill="#000"/><rect x="2" y="6" width="2" height="2" fill="#000"/><rect x="20" y="6" width="2" height="2" fill="#000"/><rect x="2" y="10" width="2" height="2" fill="#000"/><rect x="20" y="10" width="2" height="2" fill="#000"/><rect x="2" y="12" width="2" height="2" fill="#000"/><rect x="20" y="12" width="2" height="2" fill="#000"/><rect x="2" y="16" width="2" height="2" fill="#000"/><rect x="20" y="16" width="2" height="2" fill="#000"/><rect x="2" y="18" width="2" height="2" fill="#000"/><rect x="20" y="18" width="2" height="2" fill="#000"/><rect x="2" y="20" width="6" height="2" fill="#000"/><rect x="10" y="20" width="4" height="2" fill="#000"/><rect x="16" y="20" width="6" height="2" fill="#000"/></svg><div style="left:963px;top:2px;width:2px;height:2px;background:#b4b4b4;"></div><div style="left:989px;top:2px;width:2px;height:2px;background:#b4b4b4;"></div><div style="left:963px;top:28px;width:2px;height:2px;background:#b4b4b4;"></div><div style="left:989px;top:28px;width:2px;height:2px;background:#b4b4b4;"></div><div style="left:961px;top:30px;width:32px;height:30px;background:#000;"></div><div style="left:963px;top:32px;width:28px;height:28px;background:#fff;"></div><svg style="position:absolute;left:965px;top:34px;shape-rendering:crispEdges" width="24" height="22" viewBox="0 0 24 22"><rect x="14" y="2" width="4" height="2" fill="#000"/><rect x="12" y="4" width="2" height="2" fill="#000"/><rect x="14" y="4" width="4" height="2" fill="#fff"/><rect x="18" y="4" width="2" height="2" fill="#000"/><rect x="10" y="6" width="2" height="2" fill="#000"/><rect x="12" y="6" width="4" height="2" fill="#fff"/><rect x="16" y="6" width="2" height="2" fill="#000"/><rect x="18" y="6" width="2" height="2" fill="#8c8c8c"/><rect x="20" y="6" width="2" height="2" fill="#000"/><rect x="8" y="8" width="2" height="2" fill="#000"/><rect x="10" y="8" width="4" height="2" fill="#fff"/><rect x="14" y="8" width="2" height="2" fill="#000"/><rect x="16" y="8" width="2" height="2" fill="#8c8c8c"/><rect x="18" y="8" width="4" height="2" fill="#000"/><rect x="6" y="10" width="2" height="2" fill="#000"/><rect x="8" y="10" width="4" height="2" fill="#fff"/><rect x="12" y="10" width="2" height="2" fill="#000"/><rect x="14" y="10" width="2" height="2" fill="#8c8c8c"/><rect x="16" y="10" width="4" height="2" fill="#000"/><rect x="4" y="12" width="2" height="2" fill="#000"/><rect x="6" y="12" width="4" height="2" fill="#fff"/><rect x="10" y="12" width="2" height="2" fill="#000"/><rect x="12" y="12" width="2" height="2" fill="#8c8c8c"/><rect x="14" y="12" width="4" height="2" fill="#000"/><rect x="2" y="14" width="2" height="2" fill="#000"/><rect x="4" y="14" width="4" height="2" fill="#d8d8d8"/><rect x="8" y="14" width="2" height="2" fill="#000"/><rect x="10" y="14" width="2" height="2" fill="#8c8c8c"/><rect x="12" y="14" width="4" height="2" fill="#000"/><rect x="2" y="16" width="2" height="2" fill="#000"/><rect x="4" y="16" width="2" height="2" fill="#fff"/><rect x="6" y="16" width="2" height="2" fill="#d8d8d8"/><rect x="8" y="16" width="2" height="2" fill="#8c8c8c"/><rect x="10" y="16" width="4" height="2" fill="#000"/><rect x="2" y="18" width="4" height="2" fill="#000"/><rect x="6" y="18" width="4" height="2" fill="#8c8c8c"/><rect x="10" y="18" width="2" height="2" fill="#000"/><rect x="2" y="20" width="8" height="2" fill="#000"/></svg><div style="left:963px;top:32px;width:2px;height:2px;background:#b4b4b4;"></div><div style="left:989px;top:32px;width:2px;height:2px;background:#b4b4b4;"></div><div style="left:963px;top:58px;width:2px;height:2px;background:#9a7a6a;"></div><div style="left:989px;top:58px;width:2px;height:2px;background:#9a7a6a;"></div><div style="left:961px;top:60px;width:32px;height:30px;background:#000;"></div><div style="left:963px;top:62px;width:28px;height:28px;background:#fff;"></div><div style="left:965px;top:64px;width:24px;height:24px;background:#c6c6c6;"></div><svg style="position:absolute;left:965px;top:64px;shape-rendering:crispEdges" width="24" height="20" viewBox="0 0 24 20"><rect x="10" y="4" width="10" height="2" fill="#000"/><rect x="20" y="4" width="2" height="2" fill="#8c8c8c"/><rect x="8" y="6" width="2" height="2" fill="#000"/><rect x="10" y="6" width="10" height="2" fill="#fff"/><rect x="20" y="6" width="2" height="2" fill="#000"/><rect x="6" y="8" width="2" height="2" fill="#000"/><rect x="8" y="8" width="8" height="2" fill="#fff"/><rect x="16" y="8" width="4" height="2" fill="#d8d8d8"/><rect x="20" y="8" width="2" height="2" fill="#000"/><rect x="4" y="10" width="2" height="2" fill="#000"/><rect x="6" y="10" width="8" height="2" fill="#fff"/><rect x="14" y="10" width="2" height="2" fill="#d8d8d8"/><rect x="16" y="10" width="4" height="2" fill="#8c8c8c"/><rect x="20" y="10" width="2" height="2" fill="#000"/><rect x="2" y="12" width="2" height="2" fill="#000"/><rect x="4" y="12" width="8" height="2" fill="#fff"/><rect x="12" y="12" width="2" height="2" fill="#d8d8d8"/><rect x="14" y="12" width="4" height="2" fill="#8c8c8c"/><rect x="18" y="12" width="2" height="2" fill="#000"/><rect x="20" y="12" width="2" height="2" fill="#8c8c8c"/><rect x="2" y="14" width="2" height="2" fill="#000"/><rect x="4" y="14" width="10" height="2" fill="#d8d8d8"/><rect x="14" y="14" width="2" height="2" fill="#8c8c8c"/><rect x="16" y="14" width="2" height="2" fill="#000"/><rect x="18" y="14" width="2" height="2" fill="#8c8c8c"/><rect x="2" y="16" width="2" height="2" fill="#000"/><rect x="4" y="16" width="10" height="2" fill="#d8d8d8"/><rect x="14" y="16" width="2" height="2" fill="#000"/><rect x="16" y="16" width="2" height="2" fill="#8c8c8c"/><rect x="2" y="18" width="2" height="2" fill="#8c8c8c"/><rect x="4" y="18" width="10" height="2" fill="#000"/><rect x="14" y="18" width="2" height="2" fill="#8c8c8c"/></svg><div style="left:963px;top:62px;width:2px;height:2px;background:#b4b4b4;"></div><div style="left:989px;top:62px;width:2px;height:2px;background:#b4b4b4;"></div><div style="left:963px;top:88px;width:2px;height:2px;background:#b4b4b4;"></div><div style="left:989px;top:88px;width:2px;height:2px;background:#b4b4b4;"></div><div style="left:961px;top:90px;width:32px;height:30px;background:#000;"></div><div style="left:963px;top:92px;width:28px;height:28px;background:#fff;"></div><div style="left:965px;top:94px;width:24px;height:24px;background:#c6c6c6;"></div><svg style="position:absolute;left:965px;top:94px;shape-rendering:crispEdges" width="24" height="22" viewBox="0 0 24 22"><rect x="18" y="0" width="4" height="2" fill="#000"/><rect x="16" y="2" width="2" height="2" fill="#000"/><rect x="18" y="2" width="2" height="2" fill="#fff"/><rect x="20" y="2" width="4" height="2" fill="#000"/><rect x="10" y="4" width="2" height="2" fill="#000"/><rect x="12" y="4" width="2" height="2" fill="#8c8c8c"/><rect x="14" y="4" width="2" height="2" fill="#000"/><rect x="16" y="4" width="2" height="2" fill="#8c8c8c"/><rect x="18" y="4" width="6" height="2" fill="#000"/><rect x="10" y="6" width="2" height="2" fill="#d8d8d8"/><rect x="12" y="6" width="2" height="2" fill="#000"/><rect x="14" y="6" width="2" height="2" fill="#fff"/><rect x="16" y="6" width="6" height="2" fill="#000"/><rect x="10" y="8" width="2" height="2" fill="#000"/><rect x="12" y="8" width="2" height="2" fill="#fff"/><rect x="14" y="8" width="6" height="2" fill="#000"/><rect x="8" y="10" width="2" height="2" fill="#000"/><rect x="10" y="10" width="2" height="2" fill="#fff"/><rect x="12" y="10" width="2" height="2" fill="#8c8c8c"/><rect x="14" y="10" width="2" height="2" fill="#fff"/><rect x="16" y="10" width="2" height="2" fill="#000"/><rect x="18" y="10" width="2" height="2" fill="#8c8c8c"/><rect x="6" y="12" width="2" height="2" fill="#000"/><rect x="8" y="12" width="2" height="2" fill="#fff"/><rect x="10" y="12" width="2" height="2" fill="#8c8c8c"/><rect x="12" y="12" width="2" height="2" fill="#fff"/><rect x="14" y="12" width="2" height="2" fill="#000"/><rect x="16" y="12" width="2" height="2" fill="#8c8c8c"/><rect x="18" y="12" width="2" height="2" fill="#000"/><rect x="4" y="14" width="2" height="2" fill="#000"/><rect x="6" y="14" width="2" height="2" fill="#fff"/><rect x="8" y="14" width="2" height="2" fill="#8c8c8c"/><rect x="10" y="14" width="2" height="2" fill="#fff"/><rect x="12" y="14" width="2" height="2" fill="#000"/><rect x="14" y="14" width="2" height="2" fill="#8c8c8c"/><rect x="4" y="16" width="2" height="2" fill="#000"/><rect x="6" y="16" width="2" height="2" fill="#d8d8d8"/><rect x="8" y="16" width="2" height="2" fill="#fff"/><rect x="10" y="16" width="2" height="2" fill="#000"/><rect x="12" y="16" width="2" height="2" fill="#8c8c8c"/><rect x="2" y="18" width="2" height="2" fill="#000"/><rect x="4" y="18" width="2" height="2" fill="#fff"/><rect x="6" y="18" width="4" height="2" fill="#000"/><rect x="10" y="18" width="2" height="2" fill="#8c8c8c"/><rect x="2" y="20" width="4" height="2" fill="#000"/><rect x="6" y="20" width="2" height="2" fill="#8c8c8c"/></svg><div style="left:963px;top:92px;width:2px;height:2px;background:#b4b4b4;"></div><div style="left:989px;top:92px;width:2px;height:2px;background:#b4b4b4;"></div><div style="left:963px;top:118px;width:2px;height:2px;background:#b4b4b4;"></div><div style="left:989px;top:118px;width:2px;height:2px;background:#b4b4b4;"></div><div style="left:961px;top:120px;width:32px;height:30px;background:#000;"></div><div style="left:963px;top:122px;width:28px;height:28px;background:#fff;"></div><div style="left:965px;top:124px;width:24px;height:24px;background:#c6c6c6;"></div><svg style="position:absolute;left:965px;top:124px;shape-rendering:crispEdges" width="24" height="24" viewBox="0 0 24 24"><rect x="4" y="2" width="2" height="2" fill="#8c8c8c"/><rect x="6" y="2" width="8" height="2" fill="#000"/><rect x="14" y="2" width="2" height="2" fill="#8c8c8c"/><rect x="2" y="4" width="2" height="2" fill="#8c8c8c"/><rect x="4" y="4" width="12" height="2" fill="#fff"/><rect x="16" y="4" width="2" height="2" fill="#8c8c8c"/><rect x="2" y="6" width="2" height="2" fill="#000"/><rect x="4" y="6" width="6" height="2" fill="#fff"/><rect x="10" y="6" width="2" height="2" fill="#8c8c8c"/><rect x="12" y="6" width="4" height="2" fill="#fff"/><rect x="16" y="6" width="2" height="2" fill="#000"/><rect x="2" y="8" width="2" height="2" fill="#000"/><rect x="4" y="8" width="8" height="2" fill="#fff"/><rect x="12" y="8" width="2" height="2" fill="#8c8c8c"/><rect x="14" y="8" width="2" height="2" fill="#fff"/><rect x="16" y="8" width="2" height="2" fill="#000"/><rect x="2" y="10" width="2" height="2" fill="#000"/><rect x="4" y="10" width="2" height="2" fill="#fff"/><rect x="6" y="10" width="2" height="2" fill="#8c8c8c"/><rect x="8" y="10" width="4" height="2" fill="#fff"/><rect x="12" y="10" width="2" height="2" fill="#8c8c8c"/><rect x="14" y="10" width="2" height="2" fill="#fff"/><rect x="16" y="10" width="2" height="2" fill="#000"/><rect x="2" y="12" width="2" height="2" fill="#000"/><rect x="4" y="12" width="4" height="2" fill="#fff"/><rect x="8" y="12" width="4" height="2" fill="#8c8c8c"/><rect x="12" y="12" width="4" height="2" fill="#fff"/><rect x="16" y="12" width="2" height="2" fill="#000"/><rect x="2" y="14" width="2" height="2" fill="#8c8c8c"/><rect x="4" y="14" width="10" height="2" fill="#fff"/><rect x="14" y="14" width="2" height="2" fill="#8c8c8c"/><rect x="16" y="14" width="4" height="2" fill="#000"/><rect x="4" y="16" width="2" height="2" fill="#8c8c8c"/><rect x="6" y="16" width="12" height="2" fill="#000"/><rect x="18" y="16" width="2" height="2" fill="#fff"/><rect x="20" y="16" width="2" height="2" fill="#000"/><rect x="14" y="18" width="6" height="2" fill="#000"/><rect x="20" y="18" width="2" height="2" fill="#fff"/><rect x="22" y="18" width="2" height="2" fill="#000"/><rect x="16" y="20" width="8" height="2" fill="#000"/><rect x="18" y="22" width="4" height="2" fill="#000"/><rect x="22" y="22" width="2" height="2" fill="#8c8c8c"/></svg><div style="left:963px;top:122px;width:2px;height:2px;background:#b4b4b4;"></div><div style="left:989px;top:122px;width:2px;height:2px;background:#b4b4b4;"></div><div style="left:963px;top:148px;width:2px;height:2px;background:#b4b4b4;"></div><div style="left:989px;top:148px;width:2px;height:2px;background:#b4b4b4;"></div><div style="left:961px;top:150px;width:32px;height:30px;background:#000;"></div><div style="left:963px;top:152px;width:28px;height:28px;background:#fff;"></div><div style="left:965px;top:154px;width:24px;height:24px;background:#c6c6c6;"></div><svg style="position:absolute;left:965px;top:154px;shape-rendering:crispEdges" width="24" height="24" viewBox="0 0 24 24"><rect x="8" y="0" width="6" height="2" fill="#000"/><rect x="6" y="2" width="4" height="2" fill="#8c8c8c"/><rect x="10" y="2" width="2" height="2" fill="#000"/><rect x="12" y="2" width="4" height="2" fill="#8c8c8c"/><rect x="10" y="4" width="2" height="2" fill="#000"/><rect x="2" y="6" width="2" height="2" fill="#000"/><rect x="10" y="6" width="2" height="2" fill="#000"/><rect x="18" y="6" width="2" height="2" fill="#000"/><rect x="0" y="8" width="4" height="2" fill="#000"/><rect x="10" y="8" width="2" height="2" fill="#000"/><rect x="18" y="8" width="4" height="2" fill="#000"/><rect x="0" y="10" width="22" height="2" fill="#000"/><rect x="22" y="10" width="2" height="2" fill="#8c8c8c"/><rect x="0" y="12" width="2" height="2" fill="#8c8c8c"/><rect x="2" y="12" width="2" height="2" fill="#000"/><rect x="10" y="12" width="2" height="2" fill="#000"/><rect x="18" y="12" width="2" height="2" fill="#000"/><rect x="20" y="12" width="2" height="2" fill="#8c8c8c"/><rect x="2" y="14" width="2" height="2" fill="#8c8c8c"/><rect x="10" y="14" width="2" height="2" fill="#000"/><rect x="18" y="14" width="2" height="2" fill="#8c8c8c"/><rect x="10" y="16" width="2" height="2" fill="#000"/><rect x="6" y="18" width="2" height="2" fill="#8c8c8c"/><rect x="8" y="18" width="6" height="2" fill="#000"/><rect x="14" y="18" width="2" height="2" fill="#8c8c8c"/><rect x="8" y="20" width="2" height="2" fill="#8c8c8c"/><rect x="10" y="20" width="2" height="2" fill="#000"/><rect x="12" y="20" width="2" height="2" fill="#8c8c8c"/><rect x="10" y="22" width="2" height="2" fill="#8c8c8c"/></svg><div style="left:975px;top:152px;width:2px;height:2px;background:#000;"></div><div style="left:963px;top:152px;width:2px;height:2px;background:#b4b4b4;"></div><div style="left:989px;top:152px;width:2px;height:2px;background:#b4b4b4;"></div><div style="left:963px;top:178px;width:2px;height:2px;background:#b4b4b4;"></div><div style="left:989px;top:178px;width:2px;height:2px;background:#b4b4b4;"></div><div style="left:961px;top:180px;width:32px;height:30px;background:#000;"></div><div style="left:963px;top:182px;width:28px;height:28px;background:#fff;"></div><div style="left:965px;top:184px;width:24px;height:24px;background:#c6c6c6;"></div><svg style="position:absolute;left:965px;top:184px;shape-rendering:crispEdges" width="24" height="22" viewBox="0 0 24 22"><rect x="10" y="0" width="4" height="2" fill="#000"/><rect x="8" y="2" width="2" height="2" fill="#8c8c8c"/><rect x="10" y="2" width="4" height="2" fill="#000"/><rect x="14" y="2" width="2" height="2" fill="#8c8c8c"/><rect x="8" y="4" width="8" height="2" fill="#000"/><rect x="6" y="6" width="2" height="2" fill="#8c8c8c"/><rect x="8" y="6" width="8" height="2" fill="#000"/><rect x="16" y="6" width="2" height="2" fill="#8c8c8c"/><rect x="6" y="8" width="12" height="2" fill="#000"/><rect x="6" y="10" width="2" height="2" fill="#000"/><rect x="8" y="10" width="2" height="2" fill="#fff"/><rect x="10" y="10" width="8" height="2" fill="#000"/><rect x="6" y="12" width="8" height="2" fill="#000"/><rect x="14" y="12" width="2" height="2" fill="#8c8c8c"/><rect x="16" y="12" width="2" height="2" fill="#000"/><rect x="6" y="14" width="6" height="2" fill="#000"/><rect x="12" y="14" width="2" height="2" fill="#8c8c8c"/><rect x="14" y="14" width="4" height="2" fill="#000"/><rect x="8" y="16" width="8" height="2" fill="#000"/><rect x="8" y="20" width="8" height="2" fill="#8c8c8c"/></svg><div style="left:963px;top:182px;width:2px;height:2px;background:#b4b4b4;"></div><div style="left:989px;top:182px;width:2px;height:2px;background:#b4b4b4;"></div><div style="left:963px;top:208px;width:2px;height:2px;background:#b4b4b4;"></div><div style="left:989px;top:208px;width:2px;height:2px;background:#b4b4b4;"></div><div style="left:961px;top:210px;width:32px;height:30px;background:#000;"></div><div style="left:963px;top:212px;width:28px;height:28px;background:#fff;"></div><div style="left:965px;top:214px;width:24px;height:24px;background:#c6c6c6;"></div><svg style="position:absolute;left:965px;top:214px;shape-rendering:crispEdges" width="24" height="22" viewBox="0 0 24 22"><rect x="20" y="2" width="2" height="2" fill="#000"/><rect x="18" y="4" width="2" height="2" fill="#000"/><rect x="20" y="4" width="2" height="2" fill="#8c8c8c"/><rect x="16" y="6" width="2" height="2" fill="#000"/><rect x="18" y="6" width="2" height="2" fill="#8c8c8c"/><rect x="14" y="8" width="2" height="2" fill="#000"/><rect x="16" y="8" width="2" height="2" fill="#8c8c8c"/><rect x="12" y="10" width="2" height="2" fill="#000"/><rect x="14" y="10" width="2" height="2" fill="#8c8c8c"/><rect x="10" y="12" width="2" height="2" fill="#000"/><rect x="12" y="12" width="2" height="2" fill="#8c8c8c"/><rect x="8" y="14" width="2" height="2" fill="#000"/><rect x="10" y="14" width="2" height="2" fill="#8c8c8c"/><rect x="6" y="16" width="2" height="2" fill="#000"/><rect x="8" y="16" width="2" height="2" fill="#8c8c8c"/><rect x="4" y="18" width="2" height="2" fill="#000"/><rect x="6" y="18" width="2" height="2" fill="#8c8c8c"/><rect x="2" y="20" width="2" height="2" fill="#000"/><rect x="4" y="20" width="2" height="2" fill="#8c8c8c"/></svg><div style="left:963px;top:212px;width:2px;height:2px;background:#b4b4b4;"></div><div style="left:989px;top:212px;width:2px;height:2px;background:#b4b4b4;"></div><div style="left:963px;top:238px;width:2px;height:2px;background:#b4b4b4;"></div><div style="left:989px;top:238px;width:2px;height:2px;background:#b4b4b4;"></div><div style="left:961px;top:240px;width:32px;height:30px;background:#000;"></div><div style="left:963px;top:242px;width:28px;height:28px;background:#fff;"></div><div style="left:965px;top:244px;width:24px;height:24px;background:#c6c6c6;"></div><svg style="position:absolute;left:965px;top:244px;shape-rendering:crispEdges" width="24" height="20" viewBox="0 0 24 20"><rect x="2" y="4" width="2" height="2" fill="#8c8c8c"/><rect x="4" y="4" width="16" height="2" fill="#000"/><rect x="20" y="4" width="2" height="2" fill="#8c8c8c"/><rect x="2" y="6" width="2" height="2" fill="#000"/><rect x="20" y="6" width="2" height="2" fill="#000"/><rect x="2" y="8" width="2" height="2" fill="#000"/><rect x="20" y="8" width="2" height="2" fill="#000"/><rect x="2" y="10" width="2" height="2" fill="#000"/><rect x="20" y="10" width="2" height="2" fill="#000"/><rect x="2" y="12" width="2" height="2" fill="#000"/><rect x="20" y="12" width="2" height="2" fill="#000"/><rect x="2" y="14" width="2" height="2" fill="#000"/><rect x="20" y="14" width="2" height="2" fill="#000"/><rect x="2" y="16" width="2" height="2" fill="#000"/><rect x="20" y="16" width="2" height="2" fill="#000"/><rect x="2" y="18" width="2" height="2" fill="#8c8c8c"/><rect x="4" y="18" width="16" height="2" fill="#000"/><rect x="20" y="18" width="2" height="2" fill="#8c8c8c"/></svg><div style="left:963px;top:242px;width:2px;height:2px;background:#b4b4b4;"></div><div style="left:989px;top:242px;width:2px;height:2px;background:#b4b4b4;"></div><div style="left:963px;top:268px;width:2px;height:2px;background:#b4b4b4;"></div><div style="left:989px;top:268px;width:2px;height:2px;background:#b4b4b4;"></div><div style="left:961px;top:270px;width:32px;height:30px;background:#000;"></div><div style="left:963px;top:272px;width:28px;height:28px;background:#fff;"></div><div style="left:965px;top:274px;width:24px;height:24px;background:#c6c6c6;"></div><svg style="position:absolute;left:965px;top:274px;shape-rendering:crispEdges" width="24" height="22" viewBox="0 0 24 22"><rect x="10" y="2" width="2" height="2" fill="#8c8c8c"/><rect x="12" y="2" width="4" height="2" fill="#000"/><rect x="16" y="2" width="2" height="2" fill="#8c8c8c"/><rect x="14" y="4" width="6" height="2" fill="#000"/><rect x="12" y="6" width="2" height="2" fill="#8c8c8c"/><rect x="14" y="6" width="6" height="2" fill="#000"/><rect x="20" y="6" width="2" height="2" fill="#8c8c8c"/><rect x="8" y="8" width="2" height="2" fill="#8c8c8c"/><rect x="10" y="8" width="12" height="2" fill="#000"/><rect x="2" y="10" width="2" height="2" fill="#8c8c8c"/><rect x="4" y="10" width="18" height="2" fill="#000"/><rect x="0" y="12" width="2" height="2" fill="#8c8c8c"/><rect x="2" y="12" width="20" height="2" fill="#000"/><rect x="0" y="14" width="20" height="2" fill="#000"/><rect x="20" y="14" width="2" height="2" fill="#8c8c8c"/><rect x="0" y="16" width="20" height="2" fill="#000"/><rect x="0" y="18" width="2" height="2" fill="#8c8c8c"/><rect x="2" y="18" width="14" height="2" fill="#000"/><rect x="16" y="18" width="2" height="2" fill="#8c8c8c"/><rect x="2" y="20" width="2" height="2" fill="#8c8c8c"/><rect x="4" y="20" width="8" height="2" fill="#000"/><rect x="12" y="20" width="2" height="2" fill="#8c8c8c"/></svg><div style="left:963px;top:272px;width:2px;height:2px;background:#b4b4b4;"></div><div style="left:989px;top:272px;width:2px;height:2px;background:#b4b4b4;"></div><div style="left:963px;top:298px;width:2px;height:2px;background:#b4b4b4;"></div><div style="left:989px;top:298px;width:2px;height:2px;background:#b4b4b4;"></div><div style="left:961px;top:300px;width:32px;height:30px;background:#000;"></div><div style="left:963px;top:302px;width:28px;height:28px;background:#fff;"></div><div style="left:965px;top:304px;width:24px;height:24px;background:#c6c6c6;"></div><svg style="position:absolute;left:965px;top:304px;shape-rendering:crispEdges" width="24" height="22" viewBox="0 0 24 22"><rect x="16" y="2" width="2" height="2" fill="#8c8c8c"/><rect x="20" y="2" width="2" height="2" fill="#8c8c8c"/><rect x="12" y="6" width="2" height="2" fill="#8c8c8c"/><rect x="16" y="6" width="2" height="2" fill="#8c8c8c"/><rect x="20" y="6" width="2" height="2" fill="#8c8c8c"/><rect x="10" y="8" width="2" height="2" fill="#8c8c8c"/><rect x="14" y="8" width="2" height="2" fill="#8c8c8c"/><rect x="8" y="10" width="6" height="2" fill="#8c8c8c"/><rect x="16" y="10" width="2" height="2" fill="#8c8c8c"/><rect x="6" y="12" width="2" height="2" fill="#8c8c8c"/><rect x="8" y="12" width="2" height="2" fill="#000"/><rect x="10" y="12" width="6" height="2" fill="#8c8c8c"/><rect x="4" y="14" width="4" height="2" fill="#000"/><rect x="8" y="14" width="2" height="2" fill="#8c8c8c"/><rect x="10" y="14" width="2" height="2" fill="#000"/><rect x="12" y="14" width="2" height="2" fill="#8c8c8c"/><rect x="2" y="16" width="8" height="2" fill="#000"/><rect x="10" y="16" width="2" height="2" fill="#8c8c8c"/><rect x="2" y="18" width="8" height="2" fill="#000"/><rect x="2" y="20" width="2" height="2" fill="#8c8c8c"/><rect x="4" y="20" width="4" height="2" fill="#000"/></svg><div style="left:963px;top:302px;width:2px;height:2px;background:#b4b4b4;"></div><div style="left:989px;top:302px;width:2px;height:2px;background:#b4b4b4;"></div><div style="left:963px;top:328px;width:2px;height:2px;background:#b4b4b4;"></div><div style="left:989px;top:328px;width:2px;height:2px;background:#b4b4b4;"></div><div style="left:961px;top:330px;width:32px;height:2px;background:#707070;"></div><div style="left:961px;top:332px;width:32px;height:2px;background:#000;"></div><div style="left:963px;top:330px;width:28px;height:2px;background:#888;"></div><div style="left:443px;top:694px;width:516px;height:40px;background:#fff;"></div><div style="left:445px;top:694px;width:512px;height:40px;background:#c6c6c6;"></div><div style="left:437px;top:318px;width:520px;height:376px;background:#000;"></div><div style="left:439px;top:320px;width:516px;height:368px;background:#fff;"></div><div style="left:439px;top:320px;width:516px;height:26px;background:#b7d4ec;"></div><div style="left:441px;top:322px;width:512px;height:24px;background:#7d929e;"></div><div style="left:441px;top:346px;width:512px;height:340px;background:#d3cbbe;"></div><div style="left:439px;top:688px;width:516px;height:4px;background:#9c8579;"></div><svg style="position:absolute;left:447px;top:328px;shape-rendering:crispEdges" width="62" height="14" viewBox="0 0 62 14"><g fill="#fff"><rect x="2" y="0" width="6" height="2"/><rect x="48" y="0" width="2" height="2"/><rect x="0" y="2" width="2" height="2"/><rect x="12" y="2" width="4" height="2"/><rect x="20" y="2" width="6" height="2"/><rect x="32" y="2" width="4" height="2"/><rect x="40" y="2" width="4" height="2"/><rect x="48" y="2" width="2" height="2"/><rect x="54" y="2" width="4" height="2"/><rect x="0" y="4" width="2" height="2"/><rect x="10" y="4" width="2" height="2"/><rect x="16" y="4" width="2" height="2"/><rect x="20" y="4" width="2" height="2"/><rect x="26" y="4" width="2" height="2"/><rect x="30" y="4" width="2" height="2"/><rect x="38" y="4" width="2" height="2"/><rect x="44" y="4" width="2" height="2"/><rect x="48" y="4" width="2" height="2"/><rect x="52" y="4" width="2" height="2"/><rect x="58" y="4" width="2" height="2"/><rect x="0" y="6" width="2" height="2"/><rect x="10" y="6" width="2" height="2"/><rect x="16" y="6" width="2" height="2"/><rect x="20" y="6" width="2" height="2"/><rect x="26" y="6" width="2" height="2"/><rect x="32" y="6" width="2" height="2"/><rect x="38" y="6" width="2" height="2"/><rect x="44" y="6" width="2" height="2"/><rect x="48" y="6" width="2" height="2"/><rect x="52" y="6" width="8" height="2"/><rect x="0" y="8" width="2" height="2"/><rect x="10" y="8" width="2" height="2"/><rect x="16" y="8" width="2" height="2"/><rect x="20" y="8" width="2" height="2"/><rect x="26" y="8" width="2" height="2"/><rect x="34" y="8" width="2" height="2"/><rect x="38" y="8" width="2" height="2"/><rect x="44" y="8" width="2" height="2"/><rect x="48" y="8" width="2" height="2"/><rect x="52" y="8" width="2" height="2"/><rect x="2" y="10" width="6" height="2"/><rect x="12" y="10" width="4" height="2"/><rect x="20" y="10" width="2" height="2"/><rect x="26" y="10" width="2" height="2"/><rect x="30" y="10" width="4" height="2"/><rect x="40" y="10" width="4" height="2"/><rect x="48" y="10" width="2" height="2"/><rect x="54" y="10" width="4" height="2"/></g></svg><div style="left:935px;top:324px;width:14px;height:2px;background:#000;"></div><div style="left:933px;top:326px;width:2px;height:16px;background:#000;"></div><div style="left:949px;top:326px;width:2px;height:16px;background:#000;"></div><div style="left:935px;top:342px;width:14px;height:2px;background:#000;"></div><div style="left:935px;top:344px;width:14px;height:2px;background:#5e4f5a;"></div><div style="left:933px;top:342px;width:2px;height:2px;background:#6e5f6a;"></div><div style="left:949px;top:342px;width:2px;height:2px;background:#6e5f6a;"></div><div style="left:935px;top:326px;width:14px;height:16px;background:#fff;"></div><div style="left:937px;top:328px;width:10px;height:10px;background:#d6d6d6;"></div><div style="left:935px;top:340px;width:14px;height:2px;background:#a8a8a8;"></div><svg style="position:absolute;left:937px;top:328px;shape-rendering:crispEdges" width="10" height="10" viewBox="0 0 10 10"><rect x="0" y="0" width="2" height="2" fill="#000"/><rect x="8" y="0" width="2" height="2" fill="#000"/><rect x="2" y="2" width="2" height="2" fill="#000"/><rect x="6" y="2" width="2" height="2" fill="#000"/><rect x="4" y="4" width="2" height="2" fill="#000"/><rect x="2" y="6" width="2" height="2" fill="#000"/><rect x="6" y="6" width="2" height="2" fill="#000"/><rect x="0" y="8" width="2" height="2" fill="#000"/><rect x="8" y="8" width="2" height="2" fill="#000"/></svg><div style="left:450px;top:352px;width:495px;height:288px;background:#000;"></div><div style="left:452px;top:354px;width:491px;height:284px;background:#fff;"></div><div style="left:454px;top:356px;width:487px;height:280px;background:#000;"></div><div style="left:456px;top:358px;width:483px;height:276px;background:#fff;"></div><div style="left:456px;top:358px;width:483px;height:2px;background:#e6e6e6;"></div><div style="left:450px;top:352px;width:2px;height:2px;background:#a89888;"></div><div style="left:943px;top:352px;width:2px;height:2px;background:#a89888;"></div><div style="left:450px;top:638px;width:2px;height:2px;background:#a89888;"></div><div style="left:943px;top:638px;width:2px;height:2px;background:#a89888;"></div><div style="left:452px;top:354px;width:2px;height:2px;background:#000;"></div><div style="left:941px;top:354px;width:2px;height:2px;background:#000;"></div><div style="left:452px;top:636px;width:2px;height:2px;background:#000;"></div><div style="left:941px;top:636px;width:2px;height:2px;background:#000;"></div><div style="left:454px;top:356px;width:2px;height:2px;background:#a89888;"></div><div style="left:939px;top:356px;width:2px;height:2px;background:#a89888;"></div><div style="left:454px;top:634px;width:2px;height:2px;background:#a89888;"></div><div style="left:939px;top:634px;width:2px;height:2px;background:#a89888;"></div><div style="left:456px;top:358px;width:2px;height:2px;background:#000;"></div><div style="left:937px;top:358px;width:2px;height:2px;background:#000;"></div><div style="left:456px;top:632px;width:2px;height:2px;background:#000;"></div><div style="left:937px;top:632px;width:2px;height:2px;background:#000;"></div><svg style="position:absolute;left:463px;top:368px;shape-rendering:crispEdges" width="460" height="14" viewBox="0 0 460 14"><g fill="#000"><rect x="0" y="0" width="2" height="2"/><rect x="12" y="0" width="2" height="2"/><rect x="24" y="0" width="2" height="2"/><rect x="28" y="0" width="2" height="2"/><rect x="34" y="0" width="2" height="2"/><rect x="66" y="0" width="2" height="2"/><rect x="92" y="0" width="2" height="2"/><rect x="106" y="0" width="2" height="2"/><rect x="116" y="0" width="2" height="2"/><rect x="152" y="0" width="6" height="2"/><rect x="164" y="0" width="2" height="2"/><rect x="172" y="0" width="2" height="2"/><rect x="178" y="0" width="2" height="2"/><rect x="216" y="0" width="2" height="2"/><rect x="240" y="0" width="2" height="2"/><rect x="260" y="0" width="2" height="2"/><rect x="274" y="0" width="2" height="2"/><rect x="282" y="0" width="6" height="2"/><rect x="310" y="0" width="2" height="2"/><rect x="320" y="0" width="2" height="2"/><rect x="346" y="0" width="2" height="2"/><rect x="0" y="2" width="2" height="2"/><rect x="12" y="2" width="2" height="2"/><rect x="16" y="2" width="2" height="2"/><rect x="20" y="2" width="2" height="2"/><rect x="28" y="2" width="4" height="2"/><rect x="38" y="2" width="6" height="2"/><rect x="50" y="2" width="4" height="2"/><rect x="66" y="2" width="4" height="2"/><rect x="74" y="2" width="4" height="2"/><rect x="90" y="2" width="2" height="2"/><rect x="98" y="2" width="4" height="2"/><rect x="106" y="2" width="2" height="2"/><rect x="116" y="2" width="2" height="2"/><rect x="122" y="2" width="4" height="2"/><rect x="130" y="2" width="2" height="2"/><rect x="134" y="2" width="2" height="2"/><rect x="138" y="2" width="2" height="2"/><rect x="150" y="2" width="2" height="2"/><rect x="160" y="2" width="2" height="2"/><rect x="164" y="2" width="2" height="2"/><rect x="172" y="2" width="2" height="2"/><rect x="178" y="2" width="2" height="2"/><rect x="184" y="2" width="4" height="2"/><rect x="192" y="2" width="4" height="2"/><rect x="200" y="2" width="2" height="2"/><rect x="204" y="2" width="2" height="2"/><rect x="210" y="2" width="4" height="2"/><rect x="216" y="2" width="2" height="2"/><rect x="226" y="2" width="4" height="2"/><rect x="240" y="2" width="2" height="2"/><rect x="244" y="2" width="12" height="2"/><rect x="264" y="2" width="6" height="2"/><rect x="274" y="2" width="2" height="2"/><rect x="282" y="2" width="2" height="2"/><rect x="288" y="2" width="2" height="2"/><rect x="294" y="2" width="4" height="2"/><rect x="304" y="2" width="4" height="2"/><rect x="310" y="2" width="2" height="2"/><rect x="316" y="2" width="2" height="2"/><rect x="320" y="2" width="4" height="2"/><rect x="328" y="2" width="4" height="2"/><rect x="336" y="2" width="6" height="2"/><rect x="346" y="2" width="2" height="2"/><rect x="354" y="2" width="2" height="2"/><rect x="358" y="2" width="2" height="2"/><rect x="364" y="2" width="4" height="2"/><rect x="374" y="2" width="4" height="2"/><rect x="382" y="2" width="2" height="2"/><rect x="388" y="2" width="2" height="2"/><rect x="394" y="2" width="4" height="2"/><rect x="416" y="2" width="6" height="2"/><rect x="426" y="2" width="4" height="2"/><rect x="434" y="2" width="12" height="2"/><rect x="450" y="2" width="6" height="2"/><rect x="0" y="4" width="2" height="2"/><rect x="6" y="4" width="2" height="2"/><rect x="12" y="4" width="2" height="2"/><rect x="16" y="4" width="4" height="2"/><rect x="24" y="4" width="2" height="2"/><rect x="28" y="4" width="2" height="2"/><rect x="34" y="4" width="2" height="2"/><rect x="38" y="4" width="2" height="2"/><rect x="44" y="4" width="2" height="2"/><rect x="48" y="4" width="2" height="2"/><rect x="54" y="4" width="2" height="2"/><rect x="66" y="4" width="2" height="2"/><rect x="72" y="4" width="2" height="2"/><rect x="78" y="4" width="2" height="2"/><rect x="90" y="4" width="4" height="2"/><rect x="96" y="4" width="2" height="2"/><rect x="102" y="4" width="2" height="2"/><rect x="106" y="4" width="2" height="2"/><rect x="112" y="4" width="6" height="2"/><rect x="120" y="4" width="2" height="2"/><rect x="126" y="4" width="2" height="2"/><rect x="130" y="4" width="4" height="2"/><rect x="150" y="4" width="2" height="2"/><rect x="166" y="4" width="2" height="2"/><rect x="172" y="4" width="2" height="2"/><rect x="178" y="4" width="2" height="2"/><rect x="182" y="4" width="2" height="2"/><rect x="190" y="4" width="2" height="2"/><rect x="196" y="4" width="2" height="2"/><rect x="200" y="4" width="4" height="2"/><rect x="208" y="4" width="2" height="2"/><rect x="218" y="4" width="2" height="2"/><rect x="230" y="4" width="2" height="2"/><rect x="236" y="4" width="6" height="2"/><rect x="244" y="4" width="2" height="2"/><rect x="250" y="4" width="2" height="2"/><rect x="256" y="4" width="2" height="2"/><rect x="260" y="4" width="2" height="2"/><rect x="264" y="4" width="2" height="2"/><rect x="270" y="4" width="2" height="2"/><rect x="276" y="4" width="2" height="2"/><rect x="282" y="4" width="2" height="2"/><rect x="288" y="4" width="2" height="2"/><rect x="292" y="4" width="2" height="2"/><rect x="298" y="4" width="2" height="2"/><rect x="302" y="4" width="2" height="2"/><rect x="310" y="4" width="2" height="2"/><rect x="314" y="4" width="2" height="2"/><rect x="320" y="4" width="2" height="2"/><rect x="326" y="4" width="2" height="2"/><rect x="332" y="4" width="2" height="2"/><rect x="336" y="4" width="2" height="2"/><rect x="342" y="4" width="2" height="2"/><rect x="348" y="4" width="2" height="2"/><rect x="354" y="4" width="4" height="2"/><rect x="362" y="4" width="2" height="2"/><rect x="368" y="4" width="2" height="2"/><rect x="372" y="4" width="2" height="2"/><rect x="378" y="4" width="2" height="2"/><rect x="382" y="4" width="2" height="2"/><rect x="388" y="4" width="2" height="2"/><rect x="392" y="4" width="2" height="2"/><rect x="398" y="4" width="2" height="2"/><rect x="414" y="4" width="2" height="2"/><rect x="430" y="4" width="2" height="2"/><rect x="434" y="4" width="2" height="2"/><rect x="440" y="4" width="2" height="2"/><rect x="446" y="4" width="2" height="2"/><rect x="450" y="4" width="2" height="2"/><rect x="456" y="4" width="2" height="2"/><rect x="0" y="6" width="2" height="2"/><rect x="6" y="6" width="2" height="2"/><rect x="12" y="6" width="2" height="2"/><rect x="16" y="6" width="2" height="2"/><rect x="24" y="6" width="2" height="2"/><rect x="28" y="6" width="2" height="2"/><rect x="34" y="6" width="2" height="2"/><rect x="38" y="6" width="2" height="2"/><rect x="44" y="6" width="2" height="2"/><rect x="48" y="6" width="2" height="2"/><rect x="54" y="6" width="2" height="2"/><rect x="66" y="6" width="2" height="2"/><rect x="72" y="6" width="2" height="2"/><rect x="78" y="6" width="2" height="2"/><rect x="90" y="6" width="2" height="2"/><rect x="96" y="6" width="2" height="2"/><rect x="102" y="6" width="2" height="2"/><rect x="106" y="6" width="2" height="2"/><rect x="110" y="6" width="2" height="2"/><rect x="116" y="6" width="2" height="2"/><rect x="120" y="6" width="8" height="2"/><rect x="130" y="6" width="2" height="2"/><rect x="150" y="6" width="2" height="2"/><rect x="166" y="6" width="2" height="2"/><rect x="172" y="6" width="2" height="2"/><rect x="178" y="6" width="2" height="2"/><rect x="184" y="6" width="2" height="2"/><rect x="190" y="6" width="8" height="2"/><rect x="200" y="6" width="2" height="2"/><rect x="210" y="6" width="2" height="2"/><rect x="218" y="6" width="2" height="2"/><rect x="226" y="6" width="6" height="2"/><rect x="234" y="6" width="2" height="2"/><rect x="240" y="6" width="2" height="2"/><rect x="244" y="6" width="2" height="2"/><rect x="250" y="6" width="2" height="2"/><rect x="256" y="6" width="2" height="2"/><rect x="260" y="6" width="2" height="2"/><rect x="264" y="6" width="2" height="2"/><rect x="270" y="6" width="2" height="2"/><rect x="276" y="6" width="2" height="2"/><rect x="282" y="6" width="2" height="2"/><rect x="288" y="6" width="2" height="2"/><rect x="292" y="6" width="8" height="2"/><rect x="304" y="6" width="2" height="2"/><rect x="310" y="6" width="4" height="2"/><rect x="320" y="6" width="2" height="2"/><rect x="326" y="6" width="2" height="2"/><rect x="332" y="6" width="2" height="2"/><rect x="336" y="6" width="2" height="2"/><rect x="342" y="6" width="2" height="2"/><rect x="348" y="6" width="2" height="2"/><rect x="354" y="6" width="2" height="2"/><rect x="362" y="6" width="2" height="2"/><rect x="368" y="6" width="2" height="2"/><rect x="372" y="6" width="2" height="2"/><rect x="378" y="6" width="2" height="2"/><rect x="382" y="6" width="2" height="2"/><rect x="388" y="6" width="2" height="2"/><rect x="392" y="6" width="8" height="2"/><rect x="414" y="6" width="2" height="2"/><rect x="426" y="6" width="6" height="2"/><rect x="434" y="6" width="2" height="2"/><rect x="440" y="6" width="2" height="2"/><rect x="446" y="6" width="2" height="2"/><rect x="450" y="6" width="2" height="2"/><rect x="456" y="6" width="2" height="2"/><rect x="2" y="8" width="2" height="2"/><rect x="6" y="8" width="2" height="2"/><rect x="10" y="8" width="2" height="2"/><rect x="16" y="8" width="2" height="2"/><rect x="24" y="8" width="2" height="2"/><rect x="28" y="8" width="2" height="2"/><rect x="34" y="8" width="2" height="2"/><rect x="38" y="8" width="2" height="2"/><rect x="44" y="8" width="2" height="2"/><rect x="50" y="8" width="6" height="2"/><rect x="66" y="8" width="2" height="2"/><rect x="72" y="8" width="2" height="2"/><rect x="78" y="8" width="2" height="2"/><rect x="90" y="8" width="2" height="2"/><rect x="96" y="8" width="2" height="2"/><rect x="102" y="8" width="2" height="2"/><rect x="106" y="8" width="2" height="2"/><rect x="110" y="8" width="2" height="2"/><rect x="116" y="8" width="2" height="2"/><rect x="120" y="8" width="2" height="2"/><rect x="130" y="8" width="2" height="2"/><rect x="150" y="8" width="2" height="2"/><rect x="166" y="8" width="2" height="2"/><rect x="172" y="8" width="2" height="2"/><rect x="178" y="8" width="2" height="2"/><rect x="186" y="8" width="2" height="2"/><rect x="190" y="8" width="2" height="2"/><rect x="200" y="8" width="2" height="2"/><rect x="212" y="8" width="2" height="2"/><rect x="218" y="8" width="2" height="2"/><rect x="224" y="8" width="2" height="2"/><rect x="230" y="8" width="2" height="2"/><rect x="234" y="8" width="2" height="2"/><rect x="240" y="8" width="2" height="2"/><rect x="244" y="8" width="2" height="2"/><rect x="250" y="8" width="2" height="2"/><rect x="256" y="8" width="2" height="2"/><rect x="260" y="8" width="2" height="2"/><rect x="264" y="8" width="2" height="2"/><rect x="270" y="8" width="2" height="2"/><rect x="276" y="8" width="2" height="2"/><rect x="282" y="8" width="2" height="2"/><rect x="288" y="8" width="2" height="2"/><rect x="292" y="8" width="2" height="2"/><rect x="306" y="8" width="2" height="2"/><rect x="310" y="8" width="2" height="2"/><rect x="314" y="8" width="2" height="2"/><rect x="320" y="8" width="2" height="2"/><rect x="326" y="8" width="2" height="2"/><rect x="332" y="8" width="2" height="2"/><rect x="336" y="8" width="6" height="2"/><rect x="348" y="8" width="2" height="2"/><rect x="354" y="8" width="2" height="2"/><rect x="362" y="8" width="2" height="2"/><rect x="368" y="8" width="2" height="2"/><rect x="374" y="8" width="6" height="2"/><rect x="382" y="8" width="2" height="2"/><rect x="388" y="8" width="2" height="2"/><rect x="392" y="8" width="2" height="2"/><rect x="414" y="8" width="2" height="2"/><rect x="424" y="8" width="2" height="2"/><rect x="430" y="8" width="2" height="2"/><rect x="434" y="8" width="2" height="2"/><rect x="440" y="8" width="2" height="2"/><rect x="446" y="8" width="2" height="2"/><rect x="450" y="8" width="6" height="2"/><rect x="4" y="10" width="2" height="2"/><rect x="8" y="10" width="2" height="2"/><rect x="16" y="10" width="2" height="2"/><rect x="24" y="10" width="2" height="2"/><rect x="30" y="10" width="2" height="2"/><rect x="34" y="10" width="2" height="2"/><rect x="38" y="10" width="2" height="2"/><rect x="44" y="10" width="2" height="2"/><rect x="54" y="10" width="2" height="2"/><rect x="68" y="10" width="2" height="2"/><rect x="74" y="10" width="4" height="2"/><rect x="90" y="10" width="2" height="2"/><rect x="98" y="10" width="4" height="2"/><rect x="106" y="10" width="2" height="2"/><rect x="112" y="10" width="6" height="2"/><rect x="122" y="10" width="4" height="2"/><rect x="130" y="10" width="2" height="2"/><rect x="138" y="10" width="2" height="2"/><rect x="152" y="10" width="6" height="2"/><rect x="160" y="10" width="2" height="2"/><rect x="168" y="10" width="2" height="2"/><rect x="174" y="10" width="4" height="2"/><rect x="182" y="10" width="4" height="2"/><rect x="192" y="10" width="4" height="2"/><rect x="200" y="10" width="2" height="2"/><rect x="208" y="10" width="4" height="2"/><rect x="220" y="10" width="2" height="2"/><rect x="226" y="10" width="6" height="2"/><rect x="236" y="10" width="6" height="2"/><rect x="244" y="10" width="2" height="2"/><rect x="250" y="10" width="2" height="2"/><rect x="256" y="10" width="2" height="2"/><rect x="260" y="10" width="2" height="2"/><rect x="264" y="10" width="2" height="2"/><rect x="270" y="10" width="2" height="2"/><rect x="278" y="10" width="2" height="2"/><rect x="282" y="10" width="6" height="2"/><rect x="294" y="10" width="4" height="2"/><rect x="302" y="10" width="4" height="2"/><rect x="310" y="10" width="2" height="2"/><rect x="316" y="10" width="2" height="2"/><rect x="322" y="10" width="2" height="2"/><rect x="328" y="10" width="4" height="2"/><rect x="336" y="10" width="2" height="2"/><rect x="350" y="10" width="2" height="2"/><rect x="354" y="10" width="2" height="2"/><rect x="364" y="10" width="4" height="2"/><rect x="378" y="10" width="2" height="2"/><rect x="384" y="10" width="6" height="2"/><rect x="394" y="10" width="4" height="2"/><rect x="416" y="10" width="6" height="2"/><rect x="426" y="10" width="6" height="2"/><rect x="434" y="10" width="2" height="2"/><rect x="440" y="10" width="2" height="2"/><rect x="446" y="10" width="2" height="2"/><rect x="450" y="10" width="2" height="2"/><rect x="50" y="12" width="4" height="2"/><rect x="168" y="12" width="2" height="2"/><rect x="220" y="12" width="2" height="2"/><rect x="278" y="12" width="2" height="2"/><rect x="336" y="12" width="2" height="2"/><rect x="350" y="12" width="2" height="2"/><rect x="374" y="12" width="4" height="2"/><rect x="402" y="12" width="10" height="2"/><rect x="450" y="12" width="2" height="2"/></g></svg><svg style="position:absolute;left:463px;top:396px;shape-rendering:crispEdges" width="304" height="14" viewBox="0 0 304 14"><g fill="#000"><rect x="0" y="0" width="2" height="2"/><rect x="56" y="0" width="2" height="2"/><rect x="60" y="0" width="2" height="2"/><rect x="112" y="0" width="2" height="2"/><rect x="116" y="0" width="2" height="2"/><rect x="138" y="0" width="2" height="2"/><rect x="142" y="0" width="2" height="2"/><rect x="198" y="0" width="2" height="2"/><rect x="280" y="0" width="2" height="2"/><rect x="284" y="0" width="2" height="2"/><rect x="0" y="2" width="2" height="2"/><rect x="12" y="2" width="4" height="2"/><rect x="20" y="2" width="2" height="2"/><rect x="26" y="2" width="2" height="2"/><rect x="32" y="2" width="4" height="2"/><rect x="40" y="2" width="2" height="2"/><rect x="44" y="2" width="2" height="2"/><rect x="56" y="2" width="2" height="2"/><rect x="60" y="2" width="2" height="2"/><rect x="66" y="2" width="6" height="2"/><rect x="76" y="2" width="4" height="2"/><rect x="84" y="2" width="12" height="2"/><rect x="100" y="2" width="6" height="2"/><rect x="110" y="2" width="2" height="2"/><rect x="120" y="2" width="2" height="2"/><rect x="124" y="2" width="2" height="2"/><rect x="130" y="2" width="4" height="2"/><rect x="138" y="2" width="2" height="2"/><rect x="142" y="2" width="2" height="2"/><rect x="156" y="2" width="4" height="2"/><rect x="164" y="2" width="4" height="2"/><rect x="172" y="2" width="2" height="2"/><rect x="178" y="2" width="2" height="2"/><rect x="184" y="2" width="4" height="2"/><rect x="198" y="2" width="2" height="2"/><rect x="212" y="2" width="4" height="2"/><rect x="222" y="2" width="4" height="2"/><rect x="238" y="2" width="4" height="2"/><rect x="256" y="2" width="4" height="2"/><rect x="262" y="2" width="6" height="2"/><rect x="272" y="2" width="2" height="2"/><rect x="276" y="2" width="2" height="2"/><rect x="284" y="2" width="4" height="2"/><rect x="292" y="2" width="4" height="2"/><rect x="0" y="4" width="2" height="2"/><rect x="16" y="4" width="2" height="2"/><rect x="20" y="4" width="2" height="2"/><rect x="26" y="4" width="2" height="2"/><rect x="30" y="4" width="2" height="2"/><rect x="36" y="4" width="2" height="2"/><rect x="40" y="4" width="4" height="2"/><rect x="56" y="4" width="2" height="2"/><rect x="60" y="4" width="2" height="2"/><rect x="64" y="4" width="2" height="2"/><rect x="80" y="4" width="2" height="2"/><rect x="84" y="4" width="2" height="2"/><rect x="90" y="4" width="2" height="2"/><rect x="96" y="4" width="2" height="2"/><rect x="100" y="4" width="2" height="2"/><rect x="106" y="4" width="2" height="2"/><rect x="110" y="4" width="4" height="2"/><rect x="116" y="4" width="2" height="2"/><rect x="120" y="4" width="4" height="2"/><rect x="128" y="4" width="2" height="2"/><rect x="134" y="4" width="2" height="2"/><rect x="138" y="4" width="2" height="2"/><rect x="142" y="4" width="2" height="2"/><rect x="154" y="4" width="2" height="2"/><rect x="168" y="4" width="2" height="2"/><rect x="172" y="4" width="2" height="2"/><rect x="178" y="4" width="2" height="2"/><rect x="182" y="4" width="2" height="2"/><rect x="188" y="4" width="2" height="2"/><rect x="194" y="4" width="6" height="2"/><rect x="216" y="4" width="2" height="2"/><rect x="220" y="4" width="2" height="2"/><rect x="242" y="4" width="2" height="2"/><rect x="254" y="4" width="2" height="2"/><rect x="262" y="4" width="2" height="2"/><rect x="268" y="4" width="2" height="2"/><rect x="272" y="4" width="4" height="2"/><rect x="280" y="4" width="2" height="2"/><rect x="284" y="4" width="2" height="2"/><rect x="290" y="4" width="2" height="2"/><rect x="296" y="4" width="2" height="2"/><rect x="0" y="6" width="2" height="2"/><rect x="12" y="6" width="6" height="2"/><rect x="20" y="6" width="2" height="2"/><rect x="26" y="6" width="2" height="2"/><rect x="30" y="6" width="8" height="2"/><rect x="40" y="6" width="2" height="2"/><rect x="64" y="6" width="2" height="2"/><rect x="76" y="6" width="6" height="2"/><rect x="84" y="6" width="2" height="2"/><rect x="90" y="6" width="2" height="2"/><rect x="96" y="6" width="2" height="2"/><rect x="100" y="6" width="2" height="2"/><rect x="106" y="6" width="2" height="2"/><rect x="110" y="6" width="2" height="2"/><rect x="116" y="6" width="2" height="2"/><rect x="120" y="6" width="2" height="2"/><rect x="128" y="6" width="8" height="2"/><rect x="156" y="6" width="2" height="2"/><rect x="164" y="6" width="6" height="2"/><rect x="172" y="6" width="2" height="2"/><rect x="178" y="6" width="2" height="2"/><rect x="182" y="6" width="8" height="2"/><rect x="192" y="6" width="2" height="2"/><rect x="198" y="6" width="2" height="2"/><rect x="212" y="6" width="6" height="2"/><rect x="222" y="6" width="2" height="2"/><rect x="238" y="6" width="6" height="2"/><rect x="256" y="6" width="2" height="2"/><rect x="262" y="6" width="2" height="2"/><rect x="268" y="6" width="2" height="2"/><rect x="272" y="6" width="2" height="2"/><rect x="280" y="6" width="2" height="2"/><rect x="284" y="6" width="2" height="2"/><rect x="290" y="6" width="8" height="2"/><rect x="0" y="8" width="2" height="2"/><rect x="10" y="8" width="2" height="2"/><rect x="16" y="8" width="2" height="2"/><rect x="22" y="8" width="6" height="2"/><rect x="30" y="8" width="2" height="2"/><rect x="40" y="8" width="2" height="2"/><rect x="64" y="8" width="2" height="2"/><rect x="74" y="8" width="2" height="2"/><rect x="80" y="8" width="2" height="2"/><rect x="84" y="8" width="2" height="2"/><rect x="90" y="8" width="2" height="2"/><rect x="96" y="8" width="2" height="2"/><rect x="100" y="8" width="6" height="2"/><rect x="110" y="8" width="2" height="2"/><rect x="116" y="8" width="2" height="2"/><rect x="120" y="8" width="2" height="2"/><rect x="128" y="8" width="2" height="2"/><rect x="158" y="8" width="2" height="2"/><rect x="162" y="8" width="2" height="2"/><rect x="168" y="8" width="2" height="2"/><rect x="174" y="8" width="2" height="2"/><rect x="178" y="8" width="2" height="2"/><rect x="182" y="8" width="2" height="2"/><rect x="192" y="8" width="2" height="2"/><rect x="198" y="8" width="2" height="2"/><rect x="210" y="8" width="2" height="2"/><rect x="216" y="8" width="2" height="2"/><rect x="224" y="8" width="2" height="2"/><rect x="236" y="8" width="2" height="2"/><rect x="242" y="8" width="2" height="2"/><rect x="258" y="8" width="2" height="2"/><rect x="262" y="8" width="6" height="2"/><rect x="272" y="8" width="2" height="2"/><rect x="280" y="8" width="2" height="2"/><rect x="284" y="8" width="2" height="2"/><rect x="290" y="8" width="2" height="2"/><rect x="0" y="10" width="8" height="2"/><rect x="12" y="10" width="6" height="2"/><rect x="26" y="10" width="2" height="2"/><rect x="32" y="10" width="4" height="2"/><rect x="40" y="10" width="2" height="2"/><rect x="66" y="10" width="6" height="2"/><rect x="76" y="10" width="6" height="2"/><rect x="84" y="10" width="2" height="2"/><rect x="90" y="10" width="2" height="2"/><rect x="96" y="10" width="2" height="2"/><rect x="100" y="10" width="2" height="2"/><rect x="110" y="10" width="2" height="2"/><rect x="116" y="10" width="2" height="2"/><rect x="120" y="10" width="2" height="2"/><rect x="130" y="10" width="4" height="2"/><rect x="154" y="10" width="4" height="2"/><rect x="164" y="10" width="6" height="2"/><rect x="176" y="10" width="2" height="2"/><rect x="184" y="10" width="4" height="2"/><rect x="194" y="10" width="6" height="2"/><rect x="212" y="10" width="6" height="2"/><rect x="220" y="10" width="4" height="2"/><rect x="238" y="10" width="6" height="2"/><rect x="254" y="10" width="4" height="2"/><rect x="262" y="10" width="2" height="2"/><rect x="272" y="10" width="2" height="2"/><rect x="280" y="10" width="2" height="2"/><rect x="286" y="10" width="2" height="2"/><rect x="292" y="10" width="4" height="2"/><rect x="300" y="10" width="2" height="2"/><rect x="22" y="12" width="4" height="2"/><rect x="100" y="12" width="2" height="2"/><rect x="262" y="12" width="2" height="2"/></g></svg><svg style="position:absolute;left:463px;top:410px;shape-rendering:crispEdges" width="284" height="14" viewBox="0 0 284 14"><g fill="#000"><rect x="0" y="0" width="2" height="2"/><rect x="56" y="0" width="2" height="2"/><rect x="60" y="0" width="2" height="2"/><rect x="98" y="0" width="2" height="2"/><rect x="118" y="0" width="2" height="2"/><rect x="122" y="0" width="2" height="2"/><rect x="178" y="0" width="2" height="2"/><rect x="260" y="0" width="2" height="2"/><rect x="264" y="0" width="2" height="2"/><rect x="0" y="2" width="2" height="2"/><rect x="12" y="2" width="4" height="2"/><rect x="20" y="2" width="2" height="2"/><rect x="26" y="2" width="2" height="2"/><rect x="32" y="2" width="4" height="2"/><rect x="40" y="2" width="2" height="2"/><rect x="44" y="2" width="2" height="2"/><rect x="56" y="2" width="2" height="2"/><rect x="60" y="2" width="2" height="2"/><rect x="66" y="2" width="4" height="2"/><rect x="72" y="2" width="12" height="2"/><rect x="90" y="2" width="4" height="2"/><rect x="98" y="2" width="2" height="2"/><rect x="104" y="2" width="2" height="2"/><rect x="110" y="2" width="4" height="2"/><rect x="118" y="2" width="2" height="2"/><rect x="122" y="2" width="2" height="2"/><rect x="136" y="2" width="4" height="2"/><rect x="144" y="2" width="4" height="2"/><rect x="152" y="2" width="2" height="2"/><rect x="158" y="2" width="2" height="2"/><rect x="164" y="2" width="4" height="2"/><rect x="178" y="2" width="2" height="2"/><rect x="192" y="2" width="4" height="2"/><rect x="202" y="2" width="4" height="2"/><rect x="218" y="2" width="4" height="2"/><rect x="236" y="2" width="4" height="2"/><rect x="242" y="2" width="6" height="2"/><rect x="252" y="2" width="2" height="2"/><rect x="256" y="2" width="2" height="2"/><rect x="264" y="2" width="4" height="2"/><rect x="272" y="2" width="4" height="2"/><rect x="0" y="4" width="2" height="2"/><rect x="16" y="4" width="2" height="2"/><rect x="20" y="4" width="2" height="2"/><rect x="26" y="4" width="2" height="2"/><rect x="30" y="4" width="2" height="2"/><rect x="36" y="4" width="2" height="2"/><rect x="40" y="4" width="4" height="2"/><rect x="56" y="4" width="2" height="2"/><rect x="60" y="4" width="2" height="2"/><rect x="64" y="4" width="2" height="2"/><rect x="72" y="4" width="2" height="2"/><rect x="78" y="4" width="2" height="2"/><rect x="84" y="4" width="2" height="2"/><rect x="88" y="4" width="2" height="2"/><rect x="94" y="4" width="2" height="2"/><rect x="98" y="4" width="2" height="2"/><rect x="102" y="4" width="2" height="2"/><rect x="108" y="4" width="2" height="2"/><rect x="114" y="4" width="2" height="2"/><rect x="118" y="4" width="2" height="2"/><rect x="122" y="4" width="2" height="2"/><rect x="134" y="4" width="2" height="2"/><rect x="148" y="4" width="2" height="2"/><rect x="152" y="4" width="2" height="2"/><rect x="158" y="4" width="2" height="2"/><rect x="162" y="4" width="2" height="2"/><rect x="168" y="4" width="2" height="2"/><rect x="174" y="4" width="6" height="2"/><rect x="196" y="4" width="2" height="2"/><rect x="200" y="4" width="2" height="2"/><rect x="222" y="4" width="2" height="2"/><rect x="234" y="4" width="2" height="2"/><rect x="242" y="4" width="2" height="2"/><rect x="248" y="4" width="2" height="2"/><rect x="252" y="4" width="4" height="2"/><rect x="260" y="4" width="2" height="2"/><rect x="264" y="4" width="2" height="2"/><rect x="270" y="4" width="2" height="2"/><rect x="276" y="4" width="2" height="2"/><rect x="0" y="6" width="2" height="2"/><rect x="12" y="6" width="6" height="2"/><rect x="20" y="6" width="2" height="2"/><rect x="26" y="6" width="2" height="2"/><rect x="30" y="6" width="8" height="2"/><rect x="40" y="6" width="2" height="2"/><rect x="66" y="6" width="2" height="2"/><rect x="72" y="6" width="2" height="2"/><rect x="78" y="6" width="2" height="2"/><rect x="84" y="6" width="2" height="2"/><rect x="88" y="6" width="2" height="2"/><rect x="94" y="6" width="2" height="2"/><rect x="98" y="6" width="4" height="2"/><rect x="108" y="6" width="8" height="2"/><rect x="136" y="6" width="2" height="2"/><rect x="144" y="6" width="6" height="2"/><rect x="152" y="6" width="2" height="2"/><rect x="158" y="6" width="2" height="2"/><rect x="162" y="6" width="8" height="2"/><rect x="172" y="6" width="2" height="2"/><rect x="178" y="6" width="2" height="2"/><rect x="192" y="6" width="6" height="2"/><rect x="202" y="6" width="2" height="2"/><rect x="218" y="6" width="6" height="2"/><rect x="236" y="6" width="2" height="2"/><rect x="242" y="6" width="2" height="2"/><rect x="248" y="6" width="2" height="2"/><rect x="252" y="6" width="2" height="2"/><rect x="260" y="6" width="2" height="2"/><rect x="264" y="6" width="2" height="2"/><rect x="270" y="6" width="8" height="2"/><rect x="0" y="8" width="2" height="2"/><rect x="10" y="8" width="2" height="2"/><rect x="16" y="8" width="2" height="2"/><rect x="22" y="8" width="6" height="2"/><rect x="30" y="8" width="2" height="2"/><rect x="40" y="8" width="2" height="2"/><rect x="68" y="8" width="2" height="2"/><rect x="72" y="8" width="2" height="2"/><rect x="78" y="8" width="2" height="2"/><rect x="84" y="8" width="2" height="2"/><rect x="88" y="8" width="2" height="2"/><rect x="94" y="8" width="2" height="2"/><rect x="98" y="8" width="2" height="2"/><rect x="102" y="8" width="2" height="2"/><rect x="108" y="8" width="2" height="2"/><rect x="138" y="8" width="2" height="2"/><rect x="142" y="8" width="2" height="2"/><rect x="148" y="8" width="2" height="2"/><rect x="154" y="8" width="2" height="2"/><rect x="158" y="8" width="2" height="2"/><rect x="162" y="8" width="2" height="2"/><rect x="172" y="8" width="2" height="2"/><rect x="178" y="8" width="2" height="2"/><rect x="190" y="8" width="2" height="2"/><rect x="196" y="8" width="2" height="2"/><rect x="204" y="8" width="2" height="2"/><rect x="216" y="8" width="2" height="2"/><rect x="222" y="8" width="2" height="2"/><rect x="238" y="8" width="2" height="2"/><rect x="242" y="8" width="6" height="2"/><rect x="252" y="8" width="2" height="2"/><rect x="260" y="8" width="2" height="2"/><rect x="264" y="8" width="2" height="2"/><rect x="270" y="8" width="2" height="2"/><rect x="0" y="10" width="8" height="2"/><rect x="12" y="10" width="6" height="2"/><rect x="26" y="10" width="2" height="2"/><rect x="32" y="10" width="4" height="2"/><rect x="40" y="10" width="2" height="2"/><rect x="64" y="10" width="4" height="2"/><rect x="72" y="10" width="2" height="2"/><rect x="78" y="10" width="2" height="2"/><rect x="84" y="10" width="2" height="2"/><rect x="90" y="10" width="4" height="2"/><rect x="98" y="10" width="2" height="2"/><rect x="104" y="10" width="2" height="2"/><rect x="110" y="10" width="4" height="2"/><rect x="134" y="10" width="4" height="2"/><rect x="144" y="10" width="6" height="2"/><rect x="156" y="10" width="2" height="2"/><rect x="164" y="10" width="4" height="2"/><rect x="174" y="10" width="6" height="2"/><rect x="192" y="10" width="6" height="2"/><rect x="200" y="10" width="4" height="2"/><rect x="218" y="10" width="6" height="2"/><rect x="234" y="10" width="4" height="2"/><rect x="242" y="10" width="2" height="2"/><rect x="252" y="10" width="2" height="2"/><rect x="260" y="10" width="2" height="2"/><rect x="266" y="10" width="2" height="2"/><rect x="272" y="10" width="4" height="2"/><rect x="280" y="10" width="2" height="2"/><rect x="22" y="12" width="4" height="2"/><rect x="242" y="12" width="2" height="2"/></g></svg><svg style="position:absolute;left:463px;top:438px;shape-rendering:crispEdges" width="224" height="14" viewBox="0 0 224 14"><g fill="#000"><rect x="2" y="0" width="4" height="2"/><rect x="10" y="0" width="2" height="2"/><rect x="16" y="0" width="2" height="2"/><rect x="48" y="0" width="2" height="2"/><rect x="52" y="0" width="2" height="2"/><rect x="56" y="0" width="2" height="2"/><rect x="116" y="0" width="2" height="2"/><rect x="138" y="0" width="2" height="2"/><rect x="156" y="0" width="4" height="2"/><rect x="164" y="0" width="2" height="2"/><rect x="168" y="0" width="2" height="2"/><rect x="186" y="0" width="2" height="2"/><rect x="0" y="2" width="2" height="2"/><rect x="6" y="2" width="2" height="2"/><rect x="10" y="2" width="4" height="2"/><rect x="16" y="2" width="2" height="2"/><rect x="22" y="2" width="4" height="2"/><rect x="32" y="2" width="4" height="2"/><rect x="46" y="2" width="2" height="2"/><rect x="56" y="2" width="2" height="2"/><rect x="62" y="2" width="4" height="2"/><rect x="80" y="2" width="6" height="2"/><rect x="88" y="2" width="2" height="2"/><rect x="92" y="2" width="2" height="2"/><rect x="98" y="2" width="4" height="2"/><rect x="108" y="2" width="4" height="2"/><rect x="116" y="2" width="4" height="2"/><rect x="124" y="2" width="4" height="2"/><rect x="138" y="2" width="2" height="2"/><rect x="154" y="2" width="2" height="2"/><rect x="160" y="2" width="2" height="2"/><rect x="164" y="2" width="2" height="2"/><rect x="168" y="2" width="2" height="2"/><rect x="186" y="2" width="2" height="2"/><rect x="192" y="2" width="4" height="2"/><rect x="200" y="2" width="6" height="2"/><rect x="212" y="2" width="4" height="2"/><rect x="0" y="4" width="2" height="2"/><rect x="6" y="4" width="2" height="2"/><rect x="10" y="4" width="2" height="2"/><rect x="16" y="4" width="2" height="2"/><rect x="26" y="4" width="2" height="2"/><rect x="30" y="4" width="2" height="2"/><rect x="46" y="4" width="4" height="2"/><rect x="52" y="4" width="2" height="2"/><rect x="56" y="4" width="2" height="2"/><rect x="60" y="4" width="2" height="2"/><rect x="66" y="4" width="2" height="2"/><rect x="78" y="4" width="2" height="2"/><rect x="88" y="4" width="4" height="2"/><rect x="96" y="4" width="2" height="2"/><rect x="102" y="4" width="2" height="2"/><rect x="112" y="4" width="2" height="2"/><rect x="116" y="4" width="2" height="2"/><rect x="122" y="4" width="2" height="2"/><rect x="128" y="4" width="2" height="2"/><rect x="134" y="4" width="6" height="2"/><rect x="154" y="4" width="2" height="2"/><rect x="160" y="4" width="2" height="2"/><rect x="164" y="4" width="2" height="2"/><rect x="168" y="4" width="2" height="2"/><rect x="182" y="4" width="6" height="2"/><rect x="190" y="4" width="2" height="2"/><rect x="196" y="4" width="2" height="2"/><rect x="200" y="4" width="2" height="2"/><rect x="206" y="4" width="2" height="2"/><rect x="210" y="4" width="2" height="2"/><rect x="216" y="4" width="2" height="2"/><rect x="0" y="6" width="8" height="2"/><rect x="10" y="6" width="2" height="2"/><rect x="16" y="6" width="2" height="2"/><rect x="22" y="6" width="6" height="2"/><rect x="32" y="6" width="2" height="2"/><rect x="46" y="6" width="2" height="2"/><rect x="52" y="6" width="2" height="2"/><rect x="56" y="6" width="2" height="2"/><rect x="60" y="6" width="8" height="2"/><rect x="78" y="6" width="2" height="2"/><rect x="88" y="6" width="2" height="2"/><rect x="96" y="6" width="8" height="2"/><rect x="108" y="6" width="6" height="2"/><rect x="116" y="6" width="2" height="2"/><rect x="122" y="6" width="8" height="2"/><rect x="132" y="6" width="2" height="2"/><rect x="138" y="6" width="2" height="2"/><rect x="154" y="6" width="8" height="2"/><rect x="164" y="6" width="2" height="2"/><rect x="168" y="6" width="2" height="2"/><rect x="180" y="6" width="2" height="2"/><rect x="186" y="6" width="2" height="2"/><rect x="190" y="6" width="2" height="2"/><rect x="196" y="6" width="2" height="2"/><rect x="200" y="6" width="2" height="2"/><rect x="206" y="6" width="2" height="2"/><rect x="210" y="6" width="8" height="2"/><rect x="0" y="8" width="2" height="2"/><rect x="6" y="8" width="2" height="2"/><rect x="10" y="8" width="2" height="2"/><rect x="16" y="8" width="2" height="2"/><rect x="20" y="8" width="2" height="2"/><rect x="26" y="8" width="2" height="2"/><rect x="34" y="8" width="2" height="2"/><rect x="46" y="8" width="2" height="2"/><rect x="52" y="8" width="2" height="2"/><rect x="56" y="8" width="2" height="2"/><rect x="60" y="8" width="2" height="2"/><rect x="78" y="8" width="2" height="2"/><rect x="88" y="8" width="2" height="2"/><rect x="96" y="8" width="2" height="2"/><rect x="106" y="8" width="2" height="2"/><rect x="112" y="8" width="2" height="2"/><rect x="116" y="8" width="2" height="2"/><rect x="122" y="8" width="2" height="2"/><rect x="132" y="8" width="2" height="2"/><rect x="138" y="8" width="2" height="2"/><rect x="154" y="8" width="2" height="2"/><rect x="160" y="8" width="2" height="2"/><rect x="164" y="8" width="2" height="2"/><rect x="168" y="8" width="2" height="2"/><rect x="180" y="8" width="2" height="2"/><rect x="186" y="8" width="2" height="2"/><rect x="190" y="8" width="2" height="2"/><rect x="196" y="8" width="2" height="2"/><rect x="200" y="8" width="2" height="2"/><rect x="206" y="8" width="2" height="2"/><rect x="210" y="8" width="2" height="2"/><rect x="0" y="10" width="2" height="2"/><rect x="6" y="10" width="2" height="2"/><rect x="12" y="10" width="2" height="2"/><rect x="16" y="10" width="2" height="2"/><rect x="22" y="10" width="6" height="2"/><rect x="30" y="10" width="4" height="2"/><rect x="46" y="10" width="2" height="2"/><rect x="52" y="10" width="2" height="2"/><rect x="56" y="10" width="2" height="2"/><rect x="62" y="10" width="4" height="2"/><rect x="80" y="10" width="6" height="2"/><rect x="88" y="10" width="2" height="2"/><rect x="98" y="10" width="4" height="2"/><rect x="108" y="10" width="6" height="2"/><rect x="118" y="10" width="2" height="2"/><rect x="124" y="10" width="4" height="2"/><rect x="134" y="10" width="6" height="2"/><rect x="142" y="10" width="2" height="2"/><rect x="154" y="10" width="2" height="2"/><rect x="160" y="10" width="2" height="2"/><rect x="164" y="10" width="2" height="2"/><rect x="168" y="10" width="2" height="2"/><rect x="182" y="10" width="6" height="2"/><rect x="192" y="10" width="4" height="2"/><rect x="200" y="10" width="2" height="2"/><rect x="206" y="10" width="2" height="2"/><rect x="212" y="10" width="4" height="2"/><rect x="220" y="10" width="2" height="2"/></g></svg><div style="left:637px;top:648px;width:120px;height:31px;background:#000;"></div><div style="left:639px;top:650px;width:116px;height:25px;background:#fff;"></div><div style="left:641px;top:652px;width:112px;height:21px;background:#c6c6c6;"></div><div style="left:639px;top:675px;width:116px;height:2px;background:#888;"></div><div style="left:637px;top:648px;width:2px;height:2px;background:#b0a498;"></div><div style="left:755px;top:648px;width:2px;height:2px;background:#b0a498;"></div><div style="left:637px;top:677px;width:2px;height:2px;background:#b0a498;"></div><div style="left:755px;top:677px;width:2px;height:2px;background:#b0a498;"></div><div style="left:639px;top:650px;width:2px;height:2px;background:#000;"></div><div style="left:753px;top:650px;width:2px;height:2px;background:#000;"></div><div style="left:639px;top:675px;width:2px;height:2px;background:#000;"></div><div style="left:753px;top:675px;width:2px;height:2px;background:#000;"></div><svg style="position:absolute;left:671px;top:656px;shape-rendering:crispEdges" width="54" height="14" viewBox="0 0 54 14"><g fill="#000"><rect x="2" y="0" width="6" height="2"/><rect x="50" y="0" width="2" height="2"/><rect x="0" y="2" width="2" height="2"/><rect x="12" y="2" width="4" height="2"/><rect x="20" y="2" width="6" height="2"/><rect x="32" y="2" width="6" height="2"/><rect x="42" y="2" width="4" height="2"/><rect x="50" y="2" width="2" height="2"/><rect x="0" y="4" width="2" height="2"/><rect x="16" y="4" width="2" height="2"/><rect x="20" y="4" width="2" height="2"/><rect x="26" y="4" width="2" height="2"/><rect x="30" y="4" width="2" height="2"/><rect x="40" y="4" width="2" height="2"/><rect x="46" y="4" width="2" height="2"/><rect x="50" y="4" width="2" height="2"/><rect x="0" y="6" width="2" height="2"/><rect x="12" y="6" width="6" height="2"/><rect x="20" y="6" width="2" height="2"/><rect x="26" y="6" width="2" height="2"/><rect x="30" y="6" width="2" height="2"/><rect x="40" y="6" width="8" height="2"/><rect x="50" y="6" width="2" height="2"/><rect x="0" y="8" width="2" height="2"/><rect x="10" y="8" width="2" height="2"/><rect x="16" y="8" width="2" height="2"/><rect x="20" y="8" width="2" height="2"/><rect x="26" y="8" width="2" height="2"/><rect x="30" y="8" width="2" height="2"/><rect x="40" y="8" width="2" height="2"/><rect x="50" y="8" width="2" height="2"/><rect x="2" y="10" width="6" height="2"/><rect x="12" y="10" width="6" height="2"/><rect x="20" y="10" width="2" height="2"/><rect x="26" y="10" width="2" height="2"/><rect x="32" y="10" width="6" height="2"/><rect x="42" y="10" width="4" height="2"/><rect x="50" y="10" width="2" height="2"/></g></svg><div style="left:10px;top:9px;width:422px;height:703px;background:#fff;box-shadow:0 0 8px rgba(0,0,0,0.35)"></div><div style="left:432px;top:9px;width:1px;height:703px;background:#000;"></div><div style="left:10px;top:43px;width:422px;height:1px;background:#e1e4e8;"></div><div style="left:57px;top:44px;width:1px;height:646px;background:#e1e4e8;"></div><div style="left:58px;top:44px;width:374px;height:34px;background:#f6f8fa;"></div><div style="left:58px;top:78px;width:374px;height:1px;background:#e1e4e8;"></div><div style="left:192px;top:44px;width:1px;height:34px;background:#e1e4e8;"></div><div style="left:193px;top:44px;width:119px;height:35px;background:#fff;"></div><div style="left:193px;top:44px;width:119px;height:1px;background:#f9826c;"></div><div style="left:312px;top:44px;width:1px;height:34px;background:#e1e4e8;"></div><div style="left:10px;top:690px;width:422px;height:1px;background:#e1e4e8;"></div><svg style="position:absolute;left:20px;top:18px;" width="16" height="16" viewBox="0 0 16 16"><path d="M1.6 5.6 L12 14.6" stroke="#0f80d2" stroke-width="2.9" stroke-linecap="round"/><path d="M1.6 10.6 L12 1.4" stroke="#0a6cba" stroke-width="2.9" stroke-linecap="round"/><path d="M11 0.2 L14.6 1.6 Q16 2.2 16 3.5 V12.5 Q16 13.8 14.6 14.4 L11 15.8 Z" fill="#25a2f0"/></svg><svg style="position:absolute;left:55px;top:20px;" width="18" height="12" viewBox="0 0 18 12"><path d="M1 2.5h16M1 6.5h16M1 10.5h16" stroke="#24292e" stroke-width="1.1"/></svg><svg style="position:absolute;left:97px;top:20px;" width="14" height="13" viewBox="0 0 14 13"><path d="M13 6.5H1.5M6.5 1.5L1.5 6.5L6.5 11.5" stroke="#24292e" stroke-width="1.2" fill="none"/></svg><svg style="position:absolute;left:124px;top:20px;" width="13" height="13" viewBox="0 0 13 13"><path d="M0 6.5H11.5M6.5 1.5L11.5 6.5L6.5 11.5" stroke="#959da5" stroke-width="1.2" fill="none"/></svg><div style="left:151px;top:14px;width:31px;height:24px;background:#f2f2f2;border:1px solid #cfcfcf;border-radius:6px;box-sizing:border-box;overflow:hidden"><div style="position:absolute;left:8px;top:3px;white-space:pre;font-family:'Liberation Sans',sans-serif;font-size:12.5px;line-height:16px;color:#24292e">scrip</div><svg style="position:absolute;left:-8px;top:4px" width="14" height="14"><circle cx="6" cy="7" r="5" stroke="#555" stroke-width="1.1" fill="none"/></svg></div><svg style="position:absolute;left:196px;top:19px;" width="14" height="14" viewBox="0 0 14 14"><rect x="0.55" y="0.55" width="12.9" height="12.9" rx="1" stroke="#24292e" stroke-width="1.1" fill="none"/><path d="M5 0.6V13.4" stroke="#24292e" stroke-width="1.1"/></svg><svg style="position:absolute;left:222px;top:19px;" width="14" height="14" viewBox="0 0 14 14"><rect x="0.55" y="0.55" width="12.9" height="12.9" rx="1" stroke="#24292e" stroke-width="1.1" fill="none"/><path d="M0.6 9H13.4" stroke="#24292e" stroke-width="1.1"/></svg><svg style="position:absolute;left:248px;top:19px;" width="14" height="14" viewBox="0 0 14 14"><rect x="0.55" y="0.55" width="12.9" height="12.9" rx="1" stroke="#24292e" stroke-width="1.1" fill="none"/><path d="M9 0.6V13.4" stroke="#24292e" stroke-width="1.1"/></svg><svg style="position:absolute;left:275px;top:19px;" width="14" height="14" viewBox="0 0 14 14"><rect x="0.55" y="0.55" width="4.5" height="12.9" rx="1" stroke="#24292e" stroke-width="1.1" fill="none"/><rect x="8.5" y="0.55" width="4.9" height="4.9" rx="1" stroke="#24292e" stroke-width="1.1" fill="none"/><rect x="8.5" y="8.5" width="4.9" height="4.9" rx="1" stroke="#24292e" stroke-width="1.1" fill="none"/></svg><svg style="position:absolute;left:311px;top:25px;" width="11" height="3" viewBox="0 0 11 3"><path d="M0 1.5H10.5" stroke="#24292e" stroke-width="1.2"/></svg><svg style="position:absolute;left:356px;top:20px;" width="12" height="12" viewBox="0 0 12 12"><rect x="1.1" y="1.1" width="9.8" height="9.8" stroke="#24292e" stroke-width="1.2" fill="none"/></svg><svg style="position:absolute;left:402px;top:20px;" width="12" height="12" viewBox="0 0 12 12"><path d="M1 1L11 11M11 1L1 11" stroke="#24292e" stroke-width="1.2"/></svg><svg style="position:absolute;left:71px;top:54px;" width="15" height="15" viewBox="0 0 15 15"><circle cx="6.5" cy="8.5" r="6" fill="#4b88a8"/><circle cx="8" cy="6.5" r="2" fill="#fff"/><circle cx="12.5" cy="2.5" r="2" fill="#4b88a8"/></svg><div style="left:90px;top:54px;white-space:pre;font-family:'Liberation Sans',sans-serif;font-size:13px;line-height:18px;color:#586069">My Script.lua</div><div style="left:207px;top:53px;white-space:pre;font-family:'Liberation Sans',sans-serif;font-size:12px;line-height:17px;color:#b8b83a;letter-spacing:-0.5px">{ }</div><div style="left:225px;top:54px;white-space:pre;font-family:'Liberation Sans',sans-serif;font-size:13px;line-height:18px;color:#24292e">atlas.json</div><svg style="position:absolute;left:293px;top:57px;" width="10" height="10" viewBox="0 0 10 10"><circle cx="5" cy="5" r="4.2" fill="#24292e"/></svg><svg style="position:absolute;left:376px;top:55px;" width="15" height="14" viewBox="0 0 15 14"><rect x="0.6" y="0.6" width="13.8" height="12.8" rx="1" stroke="#24292e" stroke-width="1.2" fill="none"/><path d="M7.5 0.6V13.4" stroke="#24292e" stroke-width="1.2"/></svg><svg style="position:absolute;left:402px;top:60px;" width="15" height="4" viewBox="0 0 15 4"><circle cx="1.7" cy="2" r="1.3" fill="#24292e"/><circle cx="7.5" cy="2" r="1.3" fill="#24292e"/><circle cx="13.3" cy="2" r="1.3" fill="#24292e"/></svg><svg style="position:absolute;left:22px;top:55px;" width="24" height="26" viewBox="0 0 24 26"><path d="M7.5 1.5H17L21 5.5V17.5H7.5Z" stroke="#959da5" stroke-width="1.3" fill="none"/><path d="M17 1.5V5.5H21" stroke="#959da5" stroke-width="1.2" fill="none"/><path d="M7.5 7H2V24H15.5V17.5" stroke="#959da5" stroke-width="1.3" fill="none"/></svg><svg style="position:absolute;left:34px;top:68px;" width="16" height="16" viewBox="0 0 16 16"><circle cx="8" cy="8" r="7.8" fill="#2188ff"/><text x="8" y="12.2" text-anchor="middle" font-family="Liberation Sans" font-weight="bold" font-size="11" fill="#fff">1</text></svg><svg style="position:absolute;left:22px;top:103px;" width="24" height="26" viewBox="0 0 24 26"><circle cx="14.5" cy="9" r="7.3" stroke="#959da5" stroke-width="1.4" fill="none"/><path d="M9.3 14.3L1.5 23.5" stroke="#959da5" stroke-width="1.5"/></svg><svg style="position:absolute;left:22px;top:151px;" width="24" height="26" viewBox="0 0 24 26"><circle cx="6" cy="4" r="2.8" stroke="#959da5" stroke-width="1.3" fill="none"/><circle cx="6" cy="22" r="2.8" stroke="#959da5" stroke-width="1.3" fill="none"/><circle cx="17" cy="10.5" r="2.8" stroke="#959da5" stroke-width="1.3" fill="none"/><path d="M6 6.8V19.2M17 13.3C17 17 6 15 6 19" stroke="#959da5" stroke-width="1.3" fill="none"/></svg><svg style="position:absolute;left:20px;top:198px;" width="28" height="28" viewBox="0 0 28 28"><path d="M10.4 12.6V2.4L25.5 12L15.4 18.3" stroke="#959da5" stroke-width="1.3" fill="none" stroke-linejoin="miter"/><ellipse cx="8" cy="20.4" rx="3.4" ry="4.7" stroke="#959da5" stroke-width="1.3" fill="none"/><path d="M4.7 18.3H11.3M2.3 16L4.8 17.6M13.7 16L11.2 17.6M2.3 20.6H4.6M13.7 20.6H11.4M2.3 25.2L4.8 23.4M13.7 25.2L11.2 23.4" stroke="#959da5" stroke-width="1.2" fill="none"/></svg><svg style="position:absolute;left:21px;top:247px;" width="26" height="26" viewBox="0 0 26 26"><path d="M1.6 5.7H10.7V15.3H19.9V24H1.6Z M1.6 15.3H10.7V24" stroke="#959da5" stroke-width="1.3" fill="none" stroke-linejoin="round"/><rect x="14.9" y="1.6" width="9.6" height="9.1" rx="1" stroke="#959da5" stroke-width="1.3" fill="none"/></svg><svg style="position:absolute;left:21px;top:295px;" width="26" height="26" viewBox="0 0 26 26"><circle cx="12.9" cy="12.9" r="11.2" stroke="#959da5" stroke-width="1.3" fill="none"/><path d="M11.2 6.8V18.8M11.2 6.8L17.3 13.1" stroke="#959da5" stroke-width="1.3"/><circle cx="11.2" cy="6.8" r="2.1" fill="#959da5"/><circle cx="11.2" cy="18.8" r="2.1" fill="#959da5"/><circle cx="17.3" cy="13.1" r="2.1" fill="#959da5"/></svg><svg style="position:absolute;left:22px;top:344px;" width="24" height="24" viewBox="0 0 24 24"><circle cx="12" cy="12" r="11.9" fill="#999fa6"/><text x="12" y="15.8" text-anchor="middle" font-family="Liberation Sans" font-weight="700" font-size="10" letter-spacing="-0.6" fill="#fff" stroke="#fff" stroke-width="0.25">Json</text></svg><svg style="position:absolute;left:21px;top:605px;" width="26" height="26" viewBox="0 0 26 26"><circle cx="13" cy="13" r="11.5" stroke="#959da5" stroke-width="1.5" fill="none"/><circle cx="13" cy="9.8" r="4.5" stroke="#959da5" stroke-width="1.5" fill="none"/><path d="M5.6 21.2C7.5 16.5 18.5 16.5 20.4 21.2" stroke="#959da5" stroke-width="1.5" fill="none"/></svg><svg style="position:absolute;left:21px;top:653px;" width="26" height="26" viewBox="0 0 26 26"><path d="M21.30 11.15 L24.33 11.05 L24.33 14.95 L21.30 14.85 L20.85 16.25 L20.18 17.55 L22.39 19.64 L19.64 22.39 L17.55 20.18 L16.25 20.85 L14.85 21.30 L14.95 24.33 L11.05 24.33 L11.15 21.30 L9.75 20.85 L8.45 20.18 L6.36 22.39 L3.61 19.64 L5.82 17.55 L5.15 16.25 L4.70 14.85 L1.67 14.95 L1.67 11.05 L4.70 11.15 L5.15 9.75 L5.82 8.45 L3.61 6.36 L6.36 3.61 L8.45 5.82 L9.75 5.15 L11.15 4.70 L11.05 1.67 L14.95 1.67 L14.85 4.70 L16.25 5.15 L17.55 5.82 L19.64 3.61 L22.39 6.36 L20.18 8.45 L20.85 9.75Z" stroke="#959da5" stroke-width="1.7" fill="none" stroke-linejoin="round"/><circle cx="13" cy="13" r="2.9" stroke="#959da5" stroke-width="1.6" fill="none"/></svg><svg style="position:absolute;left:22px;top:695px;" width="11" height="12" viewBox="0 0 11 12"><path d="M1 4L5 7.5L1 11M10 1L6 4.5L10 8" stroke="#586069" stroke-width="1.1" fill="none"/></svg><svg style="position:absolute;left:51px;top:693px;" width="30" height="16" viewBox="0 0 30 16"><g stroke="#586069" stroke-width="1.1" fill="none" stroke-linejoin="round"><path d="M14 1.5 Q9 2.5 6 5.5 L2.2 5.3 L6 10.5 L10.5 14 L10 10 Q13.3 6.5 14 1.5Z"/><path d="M6 5.5 L10 10"/><path d="M2.2 13.5 L4 11.8"/><path d="M16.5 13 Q16.5 9.5 19 8.5 L21.5 11 Q20.5 13.5 16.5 13Z"/><path d="M21 8 L25.5 3.5 Q27.3 2 28 2 Q28 3 26.5 4.5 L22.5 9"/></g><circle cx="10.5" cy="5.8" r="1.2" fill="#586069"/></svg><div style="left:84px;top:694px;white-space:pre;font-family:'Liberation Sans',sans-serif;font-size:11.5px;line-height:16px;color:#586069">Launchpad</div><svg style="position:absolute;left:158px;top:694px;" width="13" height="13" viewBox="0 0 13 13"><circle cx="6.5" cy="6.5" r="5.8" stroke="#586069" stroke-width="1.1" fill="none"/><path d="M4 4L9 9M9 4L4 9" stroke="#586069" stroke-width="1.1"/></svg><div style="left:175px;top:694px;white-space:pre;font-family:'Liberation Sans',sans-serif;font-size:11.5px;line-height:16px;color:#586069">0</div><svg style="position:absolute;left:185px;top:694px;" width="13" height="13" viewBox="0 0 13 13"><path d="M6.5 1L12.3 12H0.7Z M6.5 5V9M6.5 10V11" stroke="#586069" stroke-width="1.1" fill="none"/></svg><div style="left:202px;top:694px;white-space:pre;font-family:'Liberation Sans',sans-serif;font-size:11.5px;line-height:16px;color:#586069">0</div><svg style="position:absolute;left:225px;top:694px;" width="12" height="13" viewBox="0 0 12 13"><path d="M3 1C0.5 3.5 0.5 7.5 3 10M9 1C11.5 3.5 11.5 7.5 9 10M6 5L3 12.5M6 5L9 12.5M4 9.5H8" stroke="#586069" stroke-width="1.1" fill="none"/><circle cx="6" cy="4.5" r="1.1" fill="#586069"/></svg><div style="left:241px;top:694px;white-space:pre;font-family:'Liberation Sans',sans-serif;font-size:11.5px;line-height:16px;color:#586069">0</div><div style="left:273px;top:694px;white-space:pre;font-family:'Liberation Sans',sans-serif;font-size:11.5px;line-height:16px;color:#586069">UTF-8</div><div style="left:321px;top:694px;white-space:pre;font-family:'Liberation Sans',sans-serif;font-size:11.5px;line-height:16px;color:#586069">LF</div><div style="left:347px;top:694px;white-space:pre;font-family:'Liberation Sans',sans-serif;font-size:11.5px;line-height:16px;color:#586069">{ }</div><div style="left:366px;top:694px;white-space:pre;font-family:'Liberation Sans',sans-serif;font-size:11.5px;line-height:16px;color:#586069">Json</div><svg style="position:absolute;left:405px;top:694px;" width="11" height="13" viewBox="0 0 11 13"><path d="M1 10.5H10L8.8 8.5V5A3.3 3.3 0 0 0 2.2 5V8.5Z M4 11.5A1.5 1.5 0 0 0 7 11.5" stroke="#586069" stroke-width="1.1" fill="none"/></svg><div style="left:126px;top:440px;width:251px;height:19px;background:#f6f8fa;"></div><div style="left:126px;top:79px;width:8px;height:19px;background:#d4f5dc;"></div><div style="left:126px;top:440px;width:8px;height:19px;background:#d4f5dc;"></div><div style="left:126px;top:98px;width:1px;height:342px;background:#e1e4e8;"></div><div style="left:141px;top:117px;width:1px;height:133px;background:#eff2f6;"></div><div style="left:141px;top:307px;width:1px;height:133px;background:#eff2f6;"></div><div style="left:60px;top:80px;white-space:pre;font-family:'Liberation Mono',monospace;font-size:13px;line-height:19px;-webkit-text-stroke:0.08px;width:40px;text-align:right;color:#babbbd">1</div><div style="left:126.0px;top:80px;white-space:pre;font-family:'Liberation Mono',monospace;font-size:13px;line-height:19px;-webkit-text-stroke:0.08px;letter-spacing:-0.1px"><span style="color:#005cc5">{</span></div><div style="left:385px;top:80px;width:1px;height:1px;background:#005cc5;opacity:0.6"></div><div style="left:60px;top:99px;white-space:pre;font-family:'Liberation Mono',monospace;font-size:13px;line-height:19px;-webkit-text-stroke:0.08px;width:40px;text-align:right;color:#babbbd">2</div><div style="left:126.0px;top:99px;white-space:pre;font-family:'Liberation Mono',monospace;font-size:13px;line-height:19px;-webkit-text-stroke:0.08px;letter-spacing:-0.1px"><span style="color:#24292e">  </span><span style="color:#005cc5">&quot;campfire&quot;</span><span style="color:#24292e">: </span><span style="color:#e36209">{</span></div><div style="left:387px;top:82px;width:1px;height:1px;background:#005cc5;opacity:0.25"></div><div style="left:388px;top:82px;width:1px;height:1px;background:#005cc5;opacity:0.6"></div><div style="left:389px;top:82px;width:1px;height:1px;background:#005cc5;opacity:0.6"></div><div style="left:390px;top:82px;width:1px;height:1px;background:#005cc5;opacity:0.6"></div><div style="left:391px;top:82px;width:1px;height:1px;background:#005cc5;opacity:0.6"></div><div style="left:392px;top:82px;width:1px;height:1px;background:#005cc5;opacity:0.6"></div><div style="left:393px;top:82px;width:1px;height:1px;background:#005cc5;opacity:0.6"></div><div style="left:394px;top:82px;width:1px;height:1px;background:#005cc5;opacity:0.6"></div><div style="left:395px;top:82px;width:1px;height:1px;background:#005cc5;opacity:0.6"></div><div style="left:396px;top:82px;width:1px;height:1px;background:#005cc5;opacity:0.25"></div><div style="left:397px;top:82px;width:1px;height:1px;background:#24292e;opacity:0.25"></div><div style="left:399px;top:82px;width:1px;height:1px;background:#e36209;opacity:0.6"></div><div style="left:60px;top:118px;white-space:pre;font-family:'Liberation Mono',monospace;font-size:13px;line-height:19px;-webkit-text-stroke:0.08px;width:40px;text-align:right;color:#babbbd">3</div><div style="left:126.0px;top:118px;white-space:pre;font-family:'Liberation Mono',monospace;font-size:13px;line-height:19px;-webkit-text-stroke:0.08px;letter-spacing:-0.1px"><span style="color:#24292e">    </span><span style="color:#005cc5">&quot;cols&quot;</span><span style="color:#24292e">: </span><span style="color:#005cc5">3</span><span style="color:#24292e">,</span></div><div style="left:389px;top:84px;width:1px;height:1px;background:#005cc5;opacity:0.25"></div><div style="left:390px;top:84px;width:1px;height:1px;background:#005cc5;opacity:0.6"></div><div style="left:391px;top:84px;width:1px;height:1px;background:#005cc5;opacity:0.6"></div><div style="left:392px;top:84px;width:1px;height:1px;background:#005cc5;opacity:0.6"></div><div style="left:393px;top:84px;width:1px;height:1px;background:#005cc5;opacity:0.6"></div><div style="left:394px;top:84px;width:1px;height:1px;background:#005cc5;opacity:0.25"></div><div style="left:395px;top:84px;width:1px;height:1px;background:#24292e;opacity:0.25"></div><div style="left:397px;top:84px;width:1px;height:1px;background:#005cc5;opacity:0.6"></div><div style="left:398px;top:84px;width:1px;height:1px;background:#24292e;opacity:0.25"></div><div style="left:60px;top:137px;white-space:pre;font-family:'Liberation Mono',monospace;font-size:13px;line-height:19px;-webkit-text-stroke:0.08px;width:40px;text-align:right;color:#babbbd">4</div><div style="left:126.0px;top:137px;white-space:pre;font-family:'Liberation Mono',monospace;font-size:13px;line-height:19px;-webkit-text-stroke:0.08px;letter-spacing:-0.1px"><span style="color:#24292e">    </span><span style="color:#005cc5">&quot;frameCount&quot;</span><span style="color:#24292e">: </span><span style="color:#005cc5">10</span><span style="color:#24292e">,</span></div><div style="left:389px;top:86px;width:1px;height:1px;background:#005cc5;opacity:0.25"></div><div style="left:390px;top:86px;width:1px;height:1px;background:#005cc5;opacity:0.6"></div><div style="left:391px;top:86px;width:1px;height:1px;background:#005cc5;opacity:0.6"></div><div style="left:392px;top:86px;width:1px;height:1px;background:#005cc5;opacity:0.6"></div><div style="left:393px;top:86px;width:1px;height:1px;background:#005cc5;opacity:0.6"></div><div style="left:394px;top:86px;width:1px;height:1px;background:#005cc5;opacity:0.6"></div><div style="left:395px;top:86px;width:1px;height:1px;background:#005cc5;opacity:0.6"></div><div style="left:396px;top:86px;width:1px;height:1px;background:#005cc5;opacity:0.6"></div><div style="left:397px;top:86px;width:1px;height:1px;background:#005cc5;opacity:0.6"></div><div style="left:398px;top:86px;width:1px;height:1px;background:#005cc5;opacity:0.6"></div><div style="left:399px;top:86px;width:1px;height:1px;background:#005cc5;opacity:0.6"></div><div style="left:400px;top:86px;width:1px;height:1px;background:#005cc5;opacity:0.25"></div><div style="left:401px;top:86px;width:1px;height:1px;background:#24292e;opacity:0.25"></div><div style="left:403px;top:86px;width:1px;height:1px;background:#005cc5;opacity:0.6"></div><div style="left:404px;top:86px;width:1px;height:1px;background:#005cc5;opacity:0.6"></div><div style="left:405px;top:86px;width:1px;height:1px;background:#24292e;opacity:0.25"></div><div style="left:60px;top:156px;white-space:pre;font-family:'Liberation Mono',monospace;font-size:13px;line-height:19px;-webkit-text-stroke:0.08px;width:40px;text-align:right;color:#babbbd">5</div><div style="left:126.0px;top:156px;white-space:pre;font-family:'Liberation Mono',monospace;font-size:13px;line-height:19px;-webkit-text-stroke:0.08px;letter-spacing:-0.1px"><span style="color:#24292e">    </span><span style="color:#005cc5">&quot;frameHeight&quot;</span><span style="color:#24292e">: </span><span style="color:#005cc5">62</span><span style="color:#24292e">,</span></div><div style="left:389px;top:88px;width:1px;height:1px;background:#005cc5;opacity:0.25"></div><div style="left:390px;top:88px;width:1px;height:1px;background:#005cc5;opacity:0.6"></div><div style="left:391px;top:88px;width:1px;height:1px;background:#005cc5;opacity:0.6"></div><div style="left:392px;top:88px;width:1px;height:1px;background:#005cc5;opacity:0.6"></div><div style="left:393px;top:88px;width:1px;height:1px;background:#005cc5;opacity:0.6"></div><div style="left:394px;top:88px;width:1px;height:1px;background:#005cc5;opacity:0.6"></div><div style="left:395px;top:88px;width:1px;height:1px;background:#005cc5;opacity:0.6"></div><div style="left:396px;top:88px;width:1px;height:1px;background:#005cc5;opacity:0.6"></div><div style="left:397px;top:88px;width:1px;height:1px;background:#005cc5;opacity:0.6"></div><div style="left:398px;top:88px;width:1px;height:1px;background:#005cc5;opacity:0.6"></div><div style="left:399px;top:88px;width:1px;height:1px;background:#005cc5;opacity:0.6"></div><div style="left:400px;top:88px;width:1px;height:1px;background:#005cc5;opacity:0.6"></div><div style="left:401px;top:88px;width:1px;height:1px;background:#005cc5;opacity:0.25"></div><div style="left:402px;top:88px;width:1px;height:1px;background:#24292e;opacity:0.25"></div><div style="left:404px;top:88px;width:1px;height:1px;background:#005cc5;opacity:0.6"></div><div style="left:405px;top:88px;width:1px;height:1px;background:#005cc5;opacity:0.6"></div><div style="left:406px;top:88px;width:1px;height:1px;background:#24292e;opacity:0.25"></div><div style="left:60px;top:175px;white-space:pre;font-family:'Liberation Mono',monospace;font-size:13px;line-height:19px;-webkit-text-stroke:0.08px;width:40px;text-align:right;color:#babbbd">6</div><div style="left:126.0px;top:175px;white-space:pre;font-family:'Liberation Mono',monospace;font-size:13px;line-height:19px;-webkit-text-stroke:0.08px;letter-spacing:-0.1px"><span style="color:#24292e">    </span><span style="color:#005cc5">&quot;frameWidth&quot;</span><span style="color:#24292e">: </span><span style="color:#005cc5">126</span><span style="color:#24292e">,</span></div><div style="left:389px;top:90px;width:1px;height:1px;background:#005cc5;opacity:0.25"></div><div style="left:390px;top:90px;width:1px;height:1px;background:#005cc5;opacity:0.6"></div><div style="left:391px;top:90px;width:1px;height:1px;background:#005cc5;opacity:0.6"></div><div style="left:392px;top:90px;width:1px;height:1px;background:#005cc5;opacity:0.6"></div><div style="left:393px;top:90px;width:1px;height:1px;background:#005cc5;opacity:0.6"></div><div style="left:394px;top:90px;width:1px;height:1px;background:#005cc5;opacity:0.6"></div><div style="left:395px;top:90px;width:1px;height:1px;background:#005cc5;opacity:0.6"></div><div style="left:396px;top:90px;width:1px;height:1px;background:#005cc5;opacity:0.6"></div><div style="left:397px;top:90px;width:1px;height:1px;background:#005cc5;opacity:0.6"></div><div style="left:398px;top:90px;width:1px;height:1px;background:#005cc5;opacity:0.6"></div><div style="left:399px;top:90px;width:1px;height:1px;background:#005cc5;opacity:0.6"></div><div style="left:400px;top:90px;width:1px;height:1px;background:#005cc5;opacity:0.25"></div><div style="left:401px;top:90px;width:1px;height:1px;background:#24292e;opacity:0.25"></div><div style="left:403px;top:90px;width:1px;height:1px;background:#005cc5;opacity:0.6"></div><div style="left:404px;top:90px;width:1px;height:1px;background:#005cc5;opacity:0.6"></div><div style="left:405px;top:90px;width:1px;height:1px;background:#005cc5;opacity:0.6"></div><div style="left:406px;top:90px;width:1px;height:1px;background:#24292e;opacity:0.25"></div><div style="left:60px;top:194px;white-space:pre;font-family:'Liberation Mono',monospace;font-size:13px;line-height:19px;-webkit-text-stroke:0.08px;width:40px;text-align:right;color:#babbbd">7</div><div style="left:126.0px;top:194px;white-space:pre;font-family:'Liberation Mono',monospace;font-size:13px;line-height:19px;-webkit-text-stroke:0.08px;letter-spacing:-0.1px"><span style="color:#24292e">    </span><span style="color:#005cc5">&quot;rows&quot;</span><span style="color:#24292e">: </span><span style="color:#005cc5">4</span><span style="color:#24292e">,</span></div><div style="left:389px;top:92px;width:1px;height:1px;background:#005cc5;opacity:0.25"></div><div style="left:390px;top:92px;width:1px;height:1px;background:#005cc5;opacity:0.6"></div><div style="left:391px;top:92px;width:1px;height:1px;background:#005cc5;opacity:0.6"></div><div style="left:392px;top:92px;width:1px;height:1px;background:#005cc5;opacity:0.6"></div><div style="left:393px;top:92px;width:1px;height:1px;background:#005cc5;opacity:0.6"></div><div style="left:394px;top:92px;width:1px;height:1px;background:#005cc5;opacity:0.25"></div><div style="left:395px;top:92px;width:1px;height:1px;background:#24292e;opacity:0.25"></div><div style="left:397px;top:92px;width:1px;height:1px;background:#005cc5;opacity:0.6"></div><div style="left:398px;top:92px;width:1px;height:1px;background:#24292e;opacity:0.25"></div><div style="left:60px;top:213px;white-space:pre;font-family:'Liberation Mono',monospace;font-size:13px;line-height:19px;-webkit-text-stroke:0.08px;width:40px;text-align:right;color:#babbbd">8</div><div style="left:126.0px;top:213px;white-space:pre;font-family:'Liberation Mono',monospace;font-size:13px;line-height:19px;-webkit-text-stroke:0.08px;letter-spacing:-0.1px"><span style="color:#24292e">    </span><span style="color:#005cc5">&quot;src&quot;</span><span style="color:#24292e">: </span><span style="color:#032f62">&quot;./campfire.png&quot;</span><span style="color:#24292e">,</span></div><div style="left:389px;top:94px;width:1px;height:1px;background:#005cc5;opacity:0.25"></div><div style="left:390px;top:94px;width:1px;height:1px;background:#005cc5;opacity:0.6"></div><div style="left:391px;top:94px;width:1px;height:1px;background:#005cc5;opacity:0.6"></div><div style="left:392px;top:94px;width:1px;height:1px;background:#005cc5;opacity:0.6"></div><div style="left:393px;top:94px;width:1px;height:1px;background:#005cc5;opacity:0.25"></div><div style="left:394px;top:94px;width:1px;height:1px;background:#24292e;opacity:0.25"></div><div style="left:396px;top:94px;width:1px;height:1px;background:#032f62;opacity:0.25"></div><div style="left:397px;top:94px;width:1px;height:1px;background:#032f62;opacity:0.25"></div><div style="left:398px;top:94px;width:1px;height:1px;background:#032f62;opacity:0.6"></div><div style="left:399px;top:94px;width:1px;height:1px;background:#032f62;opacity:0.6"></div><div style="left:400px;top:94px;width:1px;height:1px;background:#032f62;opacity:0.6"></div><div style="left:401px;top:94px;width:1px;height:1px;background:#032f62;opacity:0.6"></div><div style="left:402px;top:94px;width:1px;height:1px;background:#032f62;opacity:0.6"></div><div style="left:403px;top:94px;width:1px;height:1px;background:#032f62;opacity:0.6"></div><div style="left:404px;top:94px;width:1px;height:1px;background:#032f62;opacity:0.6"></div><div style="left:405px;top:94px;width:1px;height:1px;background:#032f62;opacity:0.6"></div><div style="left:406px;top:94px;width:1px;height:1px;background:#032f62;opacity:0.6"></div><div style="left:407px;top:94px;width:1px;height:1px;background:#032f62;opacity:0.25"></div><div style="left:408px;top:94px;width:1px;height:1px;background:#032f62;opacity:0.6"></div><div style="left:409px;top:94px;width:1px;height:1px;background:#032f62;opacity:0.6"></div><div style="left:410px;top:94px;width:1px;height:1px;background:#032f62;opacity:0.6"></div><div style="left:411px;top:94px;width:1px;height:1px;background:#032f62;opacity:0.25"></div><div style="left:412px;top:94px;width:1px;height:1px;background:#24292e;opacity:0.25"></div><div style="left:60px;top:232px;white-space:pre;font-family:'Liberation Mono',monospace;font-size:13px;line-height:19px;-webkit-text-stroke:0.08px;width:40px;text-align:right;color:#babbbd">9</div><div style="left:126.0px;top:232px;white-space:pre;font-family:'Liberation Mono',monospace;font-size:13px;line-height:19px;-webkit-text-stroke:0.08px;letter-spacing:-0.1px"><span style="color:#24292e">    </span><span style="color:#005cc5">&quot;type&quot;</span><span style="color:#24292e">: </span><span style="color:#032f62">&quot;sprite&quot;</span></div><div style="left:389px;top:96px;width:1px;height:1px;background:#005cc5;opacity:0.25"></div><div style="left:390px;top:96px;width:1px;height:1px;background:#005cc5;opacity:0.6"></div><div style="left:391px;top:96px;width:1px;height:1px;background:#005cc5;opacity:0.6"></div><div style="left:392px;top:96px;width:1px;height:1px;background:#005cc5;opacity:0.6"></div><div style="left:393px;top:96px;width:1px;height:1px;background:#005cc5;opacity:0.6"></div><div style="left:394px;top:96px;width:1px;height:1px;background:#005cc5;opacity:0.25"></div><div style="left:395px;top:96px;width:1px;height:1px;background:#24292e;opacity:0.25"></div><div style="left:397px;top:96px;width:1px;height:1px;background:#032f62;opacity:0.25"></div><div style="left:398px;top:96px;width:1px;height:1px;background:#032f62;opacity:0.6"></div><div style="left:399px;top:96px;width:1px;height:1px;background:#032f62;opacity:0.6"></div><div style="left:400px;top:96px;width:1px;height:1px;background:#032f62;opacity:0.6"></div><div style="left:401px;top:96px;width:1px;height:1px;background:#032f62;opacity:0.6"></div><div style="left:402px;top:96px;width:1px;height:1px;background:#032f62;opacity:0.6"></div><div style="left:403px;top:96px;width:1px;height:1px;background:#032f62;opacity:0.6"></div><div style="left:404px;top:96px;width:1px;height:1px;background:#032f62;opacity:0.25"></div><div style="left:60px;top:251px;white-space:pre;font-family:'Liberation Mono',monospace;font-size:13px;line-height:19px;-webkit-text-stroke:0.08px;width:40px;text-align:right;color:#babbbd">10</div><div style="left:126.0px;top:251px;white-space:pre;font-family:'Liberation Mono',monospace;font-size:13px;line-height:19px;-webkit-text-stroke:0.08px;letter-spacing:-0.1px"><span style="color:#24292e">  </span><span style="color:#e36209">}</span><span style="color:#24292e">,</span></div><div style="left:387px;top:98px;width:1px;height:1px;background:#e36209;opacity:0.6"></div><div style="left:388px;top:98px;width:1px;height:1px;background:#24292e;opacity:0.25"></div><div style="left:60px;top:270px;white-space:pre;font-family:'Liberation Mono',monospace;font-size:13px;line-height:19px;-webkit-text-stroke:0.08px;width:40px;text-align:right;color:#babbbd">11</div><div style="left:126.0px;top:270px;white-space:pre;font-family:'Liberation Mono',monospace;font-size:13px;line-height:19px;-webkit-text-stroke:0.08px;letter-spacing:-0.1px"><span style="color:#24292e">  </span><span style="color:#005cc5">&quot;smoke&quot;</span><span style="color:#24292e">: </span><span style="color:#e36209">{</span></div><div style="left:387px;top:100px;width:1px;height:1px;background:#005cc5;opacity:0.25"></div><div style="left:388px;top:100px;width:1px;height:1px;background:#005cc5;opacity:0.6"></div><div style="left:389px;top:100px;width:1px;height:1px;background:#005cc5;opacity:0.6"></div><div style="left:390px;top:100px;width:1px;height:1px;background:#005cc5;opacity:0.6"></div><div style="left:391px;top:100px;width:1px;height:1px;background:#005cc5;opacity:0.6"></div><div style="left:392px;top:100px;width:1px;height:1px;background:#005cc5;opacity:0.6"></div><div style="left:393px;top:100px;width:1px;height:1px;background:#005cc5;opacity:0.25"></div><div style="left:394px;top:100px;width:1px;height:1px;background:#24292e;opacity:0.25"></div><div style="left:396px;top:100px;width:1px;height:1px;background:#e36209;opacity:0.6"></div><div style="left:60px;top:289px;white-space:pre;font-family:'Liberation Mono',monospace;font-size:13px;line-height:19px;-webkit-text-stroke:0.08px;width:40px;text-align:right;color:#babbbd">12</div><div style="left:126.0px;top:289px;white-space:pre;font-family:'Liberation Mono',monospace;font-size:13px;line-height:19px;-webkit-text-stroke:0.08px;letter-spacing:-0.1px"><span style="color:#24292e">    </span><span style="color:#005cc5">&quot;cols&quot;</span><span style="color:#24292e">: </span><span style="color:#005cc5">3</span><span style="color:#24292e">,</span></div><div style="left:389px;top:102px;width:1px;height:1px;background:#005cc5;opacity:0.25"></div><div style="left:390px;top:102px;width:1px;height:1px;background:#005cc5;opacity:0.6"></div><div style="left:391px;top:102px;width:1px;height:1px;background:#005cc5;opacity:0.6"></div><div style="left:392px;top:102px;width:1px;height:1px;background:#005cc5;opacity:0.6"></div><div style="left:393px;top:102px;width:1px;height:1px;background:#005cc5;opacity:0.6"></div><div style="left:394px;top:102px;width:1px;height:1px;background:#005cc5;opacity:0.25"></div><div style="left:395px;top:102px;width:1px;height:1px;background:#24292e;opacity:0.25"></div><div style="left:397px;top:102px;width:1px;height:1px;background:#005cc5;opacity:0.6"></div><div style="left:398px;top:102px;width:1px;height:1px;background:#24292e;opacity:0.25"></div><div style="left:60px;top:308px;white-space:pre;font-family:'Liberation Mono',monospace;font-size:13px;line-height:19px;-webkit-text-stroke:0.08px;width:40px;text-align:right;color:#babbbd">13</div><div style="left:126.0px;top:308px;white-space:pre;font-family:'Liberation Mono',monospace;font-size:13px;line-height:19px;-webkit-text-stroke:0.08px;letter-spacing:-0.1px"><span style="color:#24292e">    </span><span style="color:#005cc5">&quot;frameCount&quot;</span><span style="color:#24292e">: </span><span style="color:#005cc5">9</span><span style="color:#24292e">,</span></div><div style="left:389px;top:104px;width:1px;height:1px;background:#005cc5;opacity:0.25"></div><div style="left:390px;top:104px;width:1px;height:1px;background:#005cc5;opacity:0.6"></div><div style="left:391px;top:104px;width:1px;height:1px;background:#005cc5;opacity:0.6"></div><div style="left:392px;top:104px;width:1px;height:1px;background:#005cc5;opacity:0.6"></div><div style="left:393px;top:104px;width:1px;height:1px;background:#005cc5;opacity:0.6"></div><div style="left:394px;top:104px;width:1px;height:1px;background:#005cc5;opacity:0.6"></div><div style="left:395px;top:104px;width:1px;height:1px;background:#005cc5;opacity:0.6"></div><div style="left:396px;top:104px;width:1px;height:1px;background:#005cc5;opacity:0.6"></div><div style="left:397px;top:104px;width:1px;height:1px;background:#005cc5;opacity:0.6"></div><div style="left:398px;top:104px;width:1px;height:1px;background:#005cc5;opacity:0.6"></div><div style="left:399px;top:104px;width:1px;height:1px;background:#005cc5;opacity:0.6"></div><div style="left:400px;top:104px;width:1px;height:1px;background:#005cc5;opacity:0.25"></div><div style="left:401px;top:104px;width:1px;height:1px;background:#24292e;opacity:0.25"></div><div style="left:403px;top:104px;width:1px;height:1px;background:#005cc5;opacity:0.6"></div><div style="left:404px;top:104px;width:1px;height:1px;background:#24292e;opacity:0.25"></div><div style="left:60px;top:327px;white-space:pre;font-family:'Liberation Mono',monospace;font-size:13px;line-height:19px;-webkit-text-stroke:0.08px;width:40px;text-align:right;color:#babbbd">14</div><div style="left:126.0px;top:327px;white-space:pre;font-family:'Liberation Mono',monospace;font-size:13px;line-height:19px;-webkit-text-stroke:0.08px;letter-spacing:-0.1px"><span style="color:#24292e">    </span><span style="color:#005cc5">&quot;frameHeight&quot;</span><span style="color:#24292e">: </span><span style="color:#005cc5">62</span><span style="color:#24292e">,</span></div><div style="left:389px;top:106px;width:1px;height:1px;background:#005cc5;opacity:0.25"></div><div style="left:390px;top:106px;width:1px;height:1px;background:#005cc5;opacity:0.6"></div><div style="left:391px;top:106px;width:1px;height:1px;background:#005cc5;opacity:0.6"></div><div style="left:392px;top:106px;width:1px;height:1px;background:#005cc5;opacity:0.6"></div><div style="left:393px;top:106px;width:1px;height:1px;background:#005cc5;opacity:0.6"></div><div style="left:394px;top:106px;width:1px;height:1px;background:#005cc5;opacity:0.6"></div><div style="left:395px;top:106px;width:1px;height:1px;background:#005cc5;opacity:0.6"></div><div style="left:396px;top:106px;width:1px;height:1px;background:#005cc5;opacity:0.6"></div><div style="left:397px;top:106px;width:1px;height:1px;background:#005cc5;opacity:0.6"></div><div style="left:398px;top:106px;width:1px;height:1px;background:#005cc5;opacity:0.6"></div><div style="left:399px;top:106px;width:1px;height:1px;background:#005cc5;opacity:0.6"></div><div style="left:400px;top:106px;width:1px;height:1px;background:#005cc5;opacity:0.6"></div><div style="left:401px;top:106px;width:1px;height:1px;background:#005cc5;opacity:0.25"></div><div style="left:402px;top:106px;width:1px;height:1px;background:#24292e;opacity:0.25"></div><div style="left:404px;top:106px;width:1px;height:1px;background:#005cc5;opacity:0.6"></div><div style="left:405px;top:106px;width:1px;height:1px;background:#005cc5;opacity:0.6"></div><div style="left:406px;top:106px;width:1px;height:1px;background:#24292e;opacity:0.25"></div><div style="left:60px;top:346px;white-space:pre;font-family:'Liberation Mono',monospace;font-size:13px;line-height:19px;-webkit-text-stroke:0.08px;width:40px;text-align:right;color:#babbbd">15</div><div style="left:126.0px;top:346px;white-space:pre;font-family:'Liberation Mono',monospace;font-size:13px;line-height:19px;-webkit-text-stroke:0.08px;letter-spacing:-0.1px"><span style="color:#24292e">    </span><span style="color:#005cc5">&quot;frameWidth&quot;</span><span style="color:#24292e">: </span><span style="color:#005cc5">126</span><span style="color:#24292e">,</span></div><div style="left:389px;top:108px;width:1px;height:1px;background:#005cc5;opacity:0.25"></div><div style="left:390px;top:108px;width:1px;height:1px;background:#005cc5;opacity:0.6"></div><div style="left:391px;top:108px;width:1px;height:1px;background:#005cc5;opacity:0.6"></div><div style="left:392px;top:108px;width:1px;height:1px;background:#005cc5;opacity:0.6"></div><div style="left:393px;top:108px;width:1px;height:1px;background:#005cc5;opacity:0.6"></div><div style="left:394px;top:108px;width:1px;height:1px;background:#005cc5;opacity:0.6"></div><div style="left:395px;top:108px;width:1px;height:1px;background:#005cc5;opacity:0.6"></div><div style="left:396px;top:108px;width:1px;height:1px;background:#005cc5;opacity:0.6"></div><div style="left:397px;top:108px;width:1px;height:1px;background:#005cc5;opacity:0.6"></div><div style="left:398px;top:108px;width:1px;height:1px;background:#005cc5;opacity:0.6"></div><div style="left:399px;top:108px;width:1px;height:1px;background:#005cc5;opacity:0.6"></div><div style="left:400px;top:108px;width:1px;height:1px;background:#005cc5;opacity:0.25"></div><div style="left:401px;top:108px;width:1px;height:1px;background:#24292e;opacity:0.25"></div><div style="left:403px;top:108px;width:1px;height:1px;background:#005cc5;opacity:0.6"></div><div style="left:404px;top:108px;width:1px;height:1px;background:#005cc5;opacity:0.6"></div><div style="left:405px;top:108px;width:1px;height:1px;background:#005cc5;opacity:0.6"></div><div style="left:406px;top:108px;width:1px;height:1px;background:#24292e;opacity:0.25"></div><div style="left:60px;top:365px;white-space:pre;font-family:'Liberation Mono',monospace;font-size:13px;line-height:19px;-webkit-text-stroke:0.08px;width:40px;text-align:right;color:#babbbd">16</div><div style="left:126.0px;top:365px;white-space:pre;font-family:'Liberation Mono',monospace;font-size:13px;line-height:19px;-webkit-text-stroke:0.08px;letter-spacing:-0.1px"><span style="color:#24292e">    </span><span style="color:#005cc5">&quot;rows&quot;</span><span style="color:#24292e">: </span><span style="color:#005cc5">3</span><span style="color:#24292e">,</span></div><div style="left:389px;top:110px;width:1px;height:1px;background:#005cc5;opacity:0.25"></div><div style="left:390px;top:110px;width:1px;height:1px;background:#005cc5;opacity:0.6"></div><div style="left:391px;top:110px;width:1px;height:1px;background:#005cc5;opacity:0.6"></div><div style="left:392px;top:110px;width:1px;height:1px;background:#005cc5;opacity:0.6"></div><div style="left:393px;top:110px;width:1px;height:1px;background:#005cc5;opacity:0.6"></div><div style="left:394px;top:110px;width:1px;height:1px;background:#005cc5;opacity:0.25"></div><div style="left:395px;top:110px;width:1px;height:1px;background:#24292e;opacity:0.25"></div><div style="left:397px;top:110px;width:1px;height:1px;background:#005cc5;opacity:0.6"></div><div style="left:398px;top:110px;width:1px;height:1px;background:#24292e;opacity:0.25"></div><div style="left:60px;top:384px;white-space:pre;font-family:'Liberation Mono',monospace;font-size:13px;line-height:19px;-webkit-text-stroke:0.08px;width:40px;text-align:right;color:#babbbd">17</div><div style="left:126.0px;top:384px;white-space:pre;font-family:'Liberation Mono',monospace;font-size:13px;line-height:19px;-webkit-text-stroke:0.08px;letter-spacing:-0.1px"><span style="color:#24292e">    </span><span style="color:#005cc5">&quot;src&quot;</span><span style="color:#24292e">: </span><span style="color:#032f62">&quot;./smoke.png&quot;</span><span style="color:#24292e">,</span></div><div style="left:389px;top:112px;width:1px;height:1px;background:#005cc5;opacity:0.25"></div><div style="left:390px;top:112px;width:1px;height:1px;background:#005cc5;opacity:0.6"></div><div style="left:391px;top:112px;width:1px;height:1px;background:#005cc5;opacity:0.6"></div><div style="left:392px;top:112px;width:1px;height:1px;background:#005cc5;opacity:0.6"></div><div style="left:393px;top:112px;width:1px;height:1px;background:#005cc5;opacity:0.25"></div><div style="left:394px;top:112px;width:1px;height:1px;background:#24292e;opacity:0.25"></div><div style="left:396px;top:112px;width:1px;height:1px;background:#032f62;opacity:0.25"></div><div style="left:397px;top:112px;width:1px;height:1px;background:#032f62;opacity:0.25"></div><div style="left:398px;top:112px;width:1px;height:1px;background:#032f62;opacity:0.6"></div><div style="left:399px;top:112px;width:1px;height:1px;background:#032f62;opacity:0.6"></div><div style="left:400px;top:112px;width:1px;height:1px;background:#032f62;opacity:0.6"></div><div style="left:401px;top:112px;width:1px;height:1px;background:#032f62;opacity:0.6"></div><div style="left:402px;top:112px;width:1px;height:1px;background:#032f62;opacity:0.6"></div><div style="left:403px;top:112px;width:1px;height:1px;background:#032f62;opacity:0.6"></div><div style="left:404px;top:112px;width:1px;height:1px;background:#032f62;opacity:0.25"></div><div style="left:405px;top:112px;width:1px;height:1px;background:#032f62;opacity:0.6"></div><div style="left:406px;top:112px;width:1px;height:1px;background:#032f62;opacity:0.6"></div><div style="left:407px;top:112px;width:1px;height:1px;background:#032f62;opacity:0.6"></div><div style="left:408px;top:112px;width:1px;height:1px;background:#032f62;opacity:0.25"></div><div style="left:409px;top:112px;width:1px;height:1px;background:#24292e;opacity:0.25"></div><div style="left:60px;top:403px;white-space:pre;font-family:'Liberation Mono',monospace;font-size:13px;line-height:19px;-webkit-text-stroke:0.08px;width:40px;text-align:right;color:#babbbd">18</div><div style="left:126.0px;top:403px;white-space:pre;font-family:'Liberation Mono',monospace;font-size:13px;line-height:19px;-webkit-text-stroke:0.08px;letter-spacing:-0.1px"><span style="color:#24292e">    </span><span style="color:#005cc5">&quot;type&quot;</span><span style="color:#24292e">: </span><span style="color:#032f62">&quot;sprite&quot;</span></div><div style="left:389px;top:114px;width:1px;height:1px;background:#005cc5;opacity:0.25"></div><div style="left:390px;top:114px;width:1px;height:1px;background:#005cc5;opacity:0.6"></div><div style="left:391px;top:114px;width:1px;height:1px;background:#005cc5;opacity:0.6"></div><div style="left:392px;top:114px;width:1px;height:1px;background:#005cc5;opacity:0.6"></div><div style="left:393px;top:114px;width:1px;height:1px;background:#005cc5;opacity:0.6"></div><div style="left:394px;top:114px;width:1px;height:1px;background:#005cc5;opacity:0.25"></div><div style="left:395px;top:114px;width:1px;height:1px;background:#24292e;opacity:0.25"></div><div style="left:397px;top:114px;width:1px;height:1px;background:#032f62;opacity:0.25"></div><div style="left:398px;top:114px;width:1px;height:1px;background:#032f62;opacity:0.6"></div><div style="left:399px;top:114px;width:1px;height:1px;background:#032f62;opacity:0.6"></div><div style="left:400px;top:114px;width:1px;height:1px;background:#032f62;opacity:0.6"></div><div style="left:401px;top:114px;width:1px;height:1px;background:#032f62;opacity:0.6"></div><div style="left:402px;top:114px;width:1px;height:1px;background:#032f62;opacity:0.6"></div><div style="left:403px;top:114px;width:1px;height:1px;background:#032f62;opacity:0.6"></div><div style="left:404px;top:114px;width:1px;height:1px;background:#032f62;opacity:0.25"></div><div style="left:60px;top:422px;white-space:pre;font-family:'Liberation Mono',monospace;font-size:13px;line-height:19px;-webkit-text-stroke:0.08px;width:40px;text-align:right;color:#babbbd">19</div><div style="left:126.0px;top:422px;white-space:pre;font-family:'Liberation Mono',monospace;font-size:13px;line-height:19px;-webkit-text-stroke:0.08px;letter-spacing:-0.1px"><span style="color:#24292e">  </span><span style="color:#e36209">}</span></div><div style="left:387px;top:116px;width:1px;height:1px;background:#e36209;opacity:0.6"></div><div style="left:60px;top:441px;white-space:pre;font-family:'Liberation Mono',monospace;font-size:13px;line-height:19px;-webkit-text-stroke:0.08px;width:40px;text-align:right;color:#24292e">20</div><div style="left:126.0px;top:441px;white-space:pre;font-family:'Liberation Mono',monospace;font-size:13px;line-height:19px;-webkit-text-stroke:0.08px;letter-spacing:-0.1px"><span style="color:#005cc5">}</span></div><div style="left:385px;top:118px;width:1px;height:1px;background:#005cc5;opacity:0.6"></div><div style="left:423px;top:80px;width:5px;height:10px;background:#a5a5a5;"></div><div style="left:419px;top:304px;width:13px;height:2px;background:#3a6aad;"></div><div style="left:423px;top:306px;width:5px;height:11px;background:#a0a0a0;"></div>
</body></html>
